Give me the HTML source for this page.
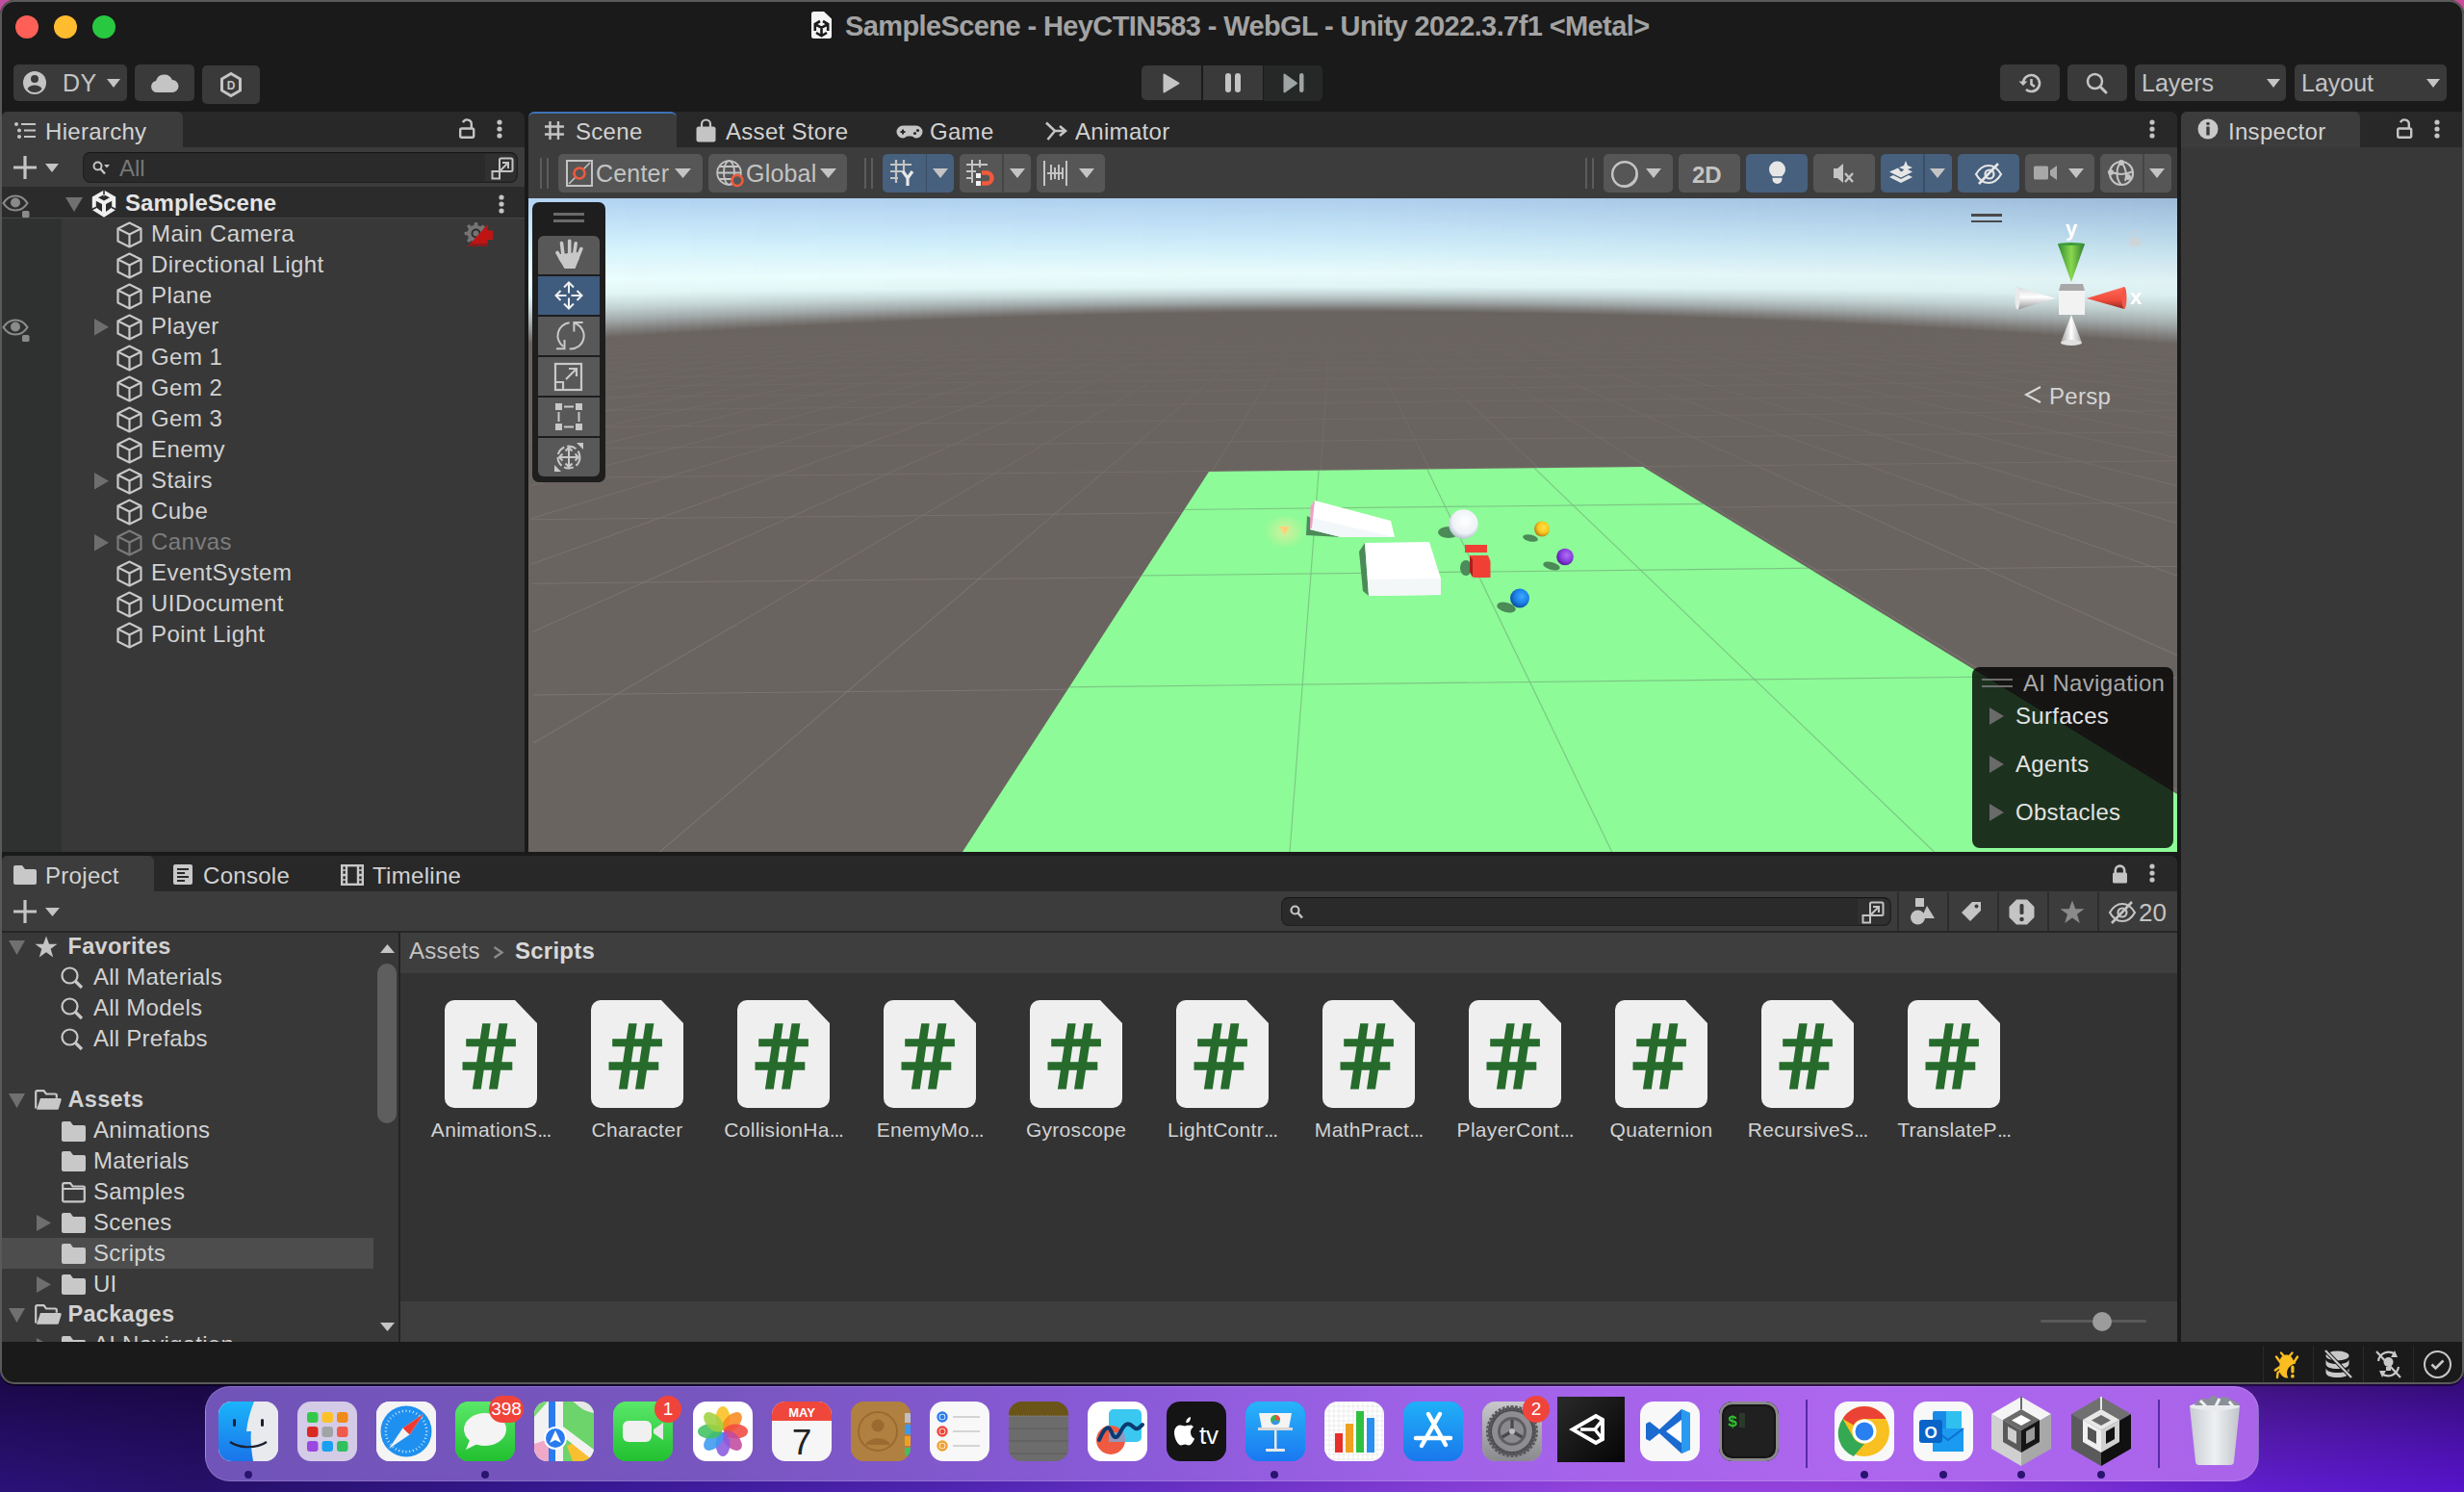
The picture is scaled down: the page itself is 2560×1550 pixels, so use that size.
<!DOCTYPE html><html><head><meta charset="utf-8"><style>
*{box-sizing:border-box;margin:0;padding:0}
html,body{width:2560px;height:1550px;overflow:hidden}
body{position:relative;font-family:"Liberation Sans",sans-serif;color:#d2d2d2;background:#2a1070}
.a{position:absolute}
.t{position:absolute;white-space:nowrap}
svg.a{overflow:visible}
</style></head><body><div class="a" style="left:0;top:0;width:2560px;height:1550px;background:linear-gradient(90deg,#2a1278 0%,#26106a 8%,#3a1a98 25%,#5a2ac0 45%,#7a38d8 65%,#6a2ad0 80%,#4a10c8 92%,#4a0cc8 100%)"></div>
<div class="a" style="left:2400px;top:0;width:160px;height:60px;background:#c84c98"></div>
<div class="a" style="left:0;top:0;width:60px;height:60px;background:#c24e9e"></div>
<div class="a" style="left:0;top:1430px;width:2560px;height:120px;background:linear-gradient(180deg,rgba(12,0,30,0.55) 0%,rgba(12,0,30,0.25) 50%,rgba(12,0,30,0) 100%)"></div>
<div class="a" style="left:0;top:0;width:2560px;height:1550px;background:radial-gradient(ellipse 900px 300px at 1900px 1550px,rgba(255,120,255,0.25),rgba(0,0,0,0))"></div>
<div class="a" style="left:0;top:0;width:2560px;height:1438px;background:#1a1a1a;border-radius:15px;overflow:hidden">
<div class="a" style="left:16px;top:16px;width:24px;height:24px;background:#fe5f57;border-radius:12px;"></div>
<div class="a" style="left:56px;top:16px;width:24px;height:24px;background:#febc2e;border-radius:12px;"></div>
<div class="a" style="left:96px;top:16px;width:24px;height:24px;background:#28c840;border-radius:12px;"></div>
<svg class="a" style="left:843px;top:12px;" width="22" height="28" viewBox="0 0 22 28"><path d="M0 2.5A2.5 2.5 0 0 1 2.5 0H13L21 7.5V25.5A2.5 2.5 0 0 1 18.5 28H2.5A2.5 2.5 0 0 1 0 25.5Z" fill="#f4f4f4"/><path d="M3.8 20V13L9 10M17.2 20V13L12 10M3.8 13L10.5 16.8L17.2 13M10.5 16.8V25M5 22L10.5 25.3L16 22" fill="none" stroke="#1a1a1a" stroke-width="2.6"/></svg>
<div class="t" style="left:878px;top:12.95px;font-size:29px;line-height:29px;color:#a3a3a3;font-weight:bold;letter-spacing:-0.6px;">SampleScene - HeyCTIN583 - WebGL - Unity 2022.3.7f1 &lt;Metal&gt;</div>
<div class="a" style="left:14px;top:67px;width:118px;height:38px;background:#3a3a3a;border-radius:5px;"></div>
<svg class="a" style="left:24px;top:74px;" width="24" height="24" viewBox="0 0 24 24"><circle cx="12" cy="12" r="12" fill="#c4c4c4"/><circle cx="12" cy="8" r="4" fill="#3a3a3a"/><path d="M4.5 18.5c1.5-3 4-4 7.5-4s6 1 7.5 4c-2 2.5-4.5 3.5-7.5 3.5s-5.5-1-7.5-3.5Z" fill="#3a3a3a"/></svg>
<div class="t" style="left:65px;top:73.84px;font-size:25px;line-height:25px;color:#c4c4c4;font-weight:normal;letter-spacing:0.5px;">DY</div>
<svg class="a" style="left:111.0px;top:82.0px;" width="14" height="9" viewBox="0 0 14 9"><path d="M0 0H14L7.0 9Z" fill="#c4c4c4"/></svg>
<div class="a" style="left:140px;top:67px;width:62px;height:38px;background:#3a3a3a;border-radius:5px;"></div>
<svg class="a" style="left:157px;top:75px;" width="28" height="21" viewBox="0 0 28 21"><path d="M6 21a6 6 0 0 1-1-11.9A9 9 0 0 1 22 8a6.5 6.5 0 0 1 0 13Z" fill="#c4c4c4"/></svg>
<div class="a" style="left:210px;top:68px;width:60px;height:40px;background:#3a3a3a;border-radius:5px;"></div>
<svg class="a" style="left:229px;top:75px;" width="22" height="26" viewBox="0 0 22 26"><path d="M11 1.5L20.5 7v12L11 24.5 1.5 19V7Z" fill="none" stroke="#c4c4c4" stroke-width="3"/><text x="11" y="17.5" font-family="Liberation Sans" font-weight="bold" font-size="12" fill="#c4c4c4" text-anchor="middle">D</text></svg>
<div class="a" style="left:1186px;top:68px;width:62px;height:36px;background:#3a3a3a;border-radius:5px;border-radius:5px 0 0 5px"></div>
<div class="a" style="left:1250px;top:68px;width:62px;height:36px;background:#3a3a3a;border-radius:0px;"></div>
<div class="a" style="left:1313px;top:67.5px;width:61px;height:37px;background:#262828;border-radius:5px;border-radius:0 5px 5px 0"></div>
<svg class="a" style="left:1208px;top:76px;" width="18" height="21" viewBox="0 0 18 21"><path d="M1.5 1.5L16.5 10.5L1.5 19.5Z" fill="#c4c4c4" stroke="#c4c4c4" stroke-width="2" stroke-linejoin="round"/></svg>
<div class="a" style="left:1273px;top:76px;width:6px;height:20px;background:#c4c4c4;border-radius:3px;"></div>
<div class="a" style="left:1283px;top:76px;width:6px;height:20px;background:#c4c4c4;border-radius:3px;"></div>
<svg class="a" style="left:1333px;top:76px;" width="22" height="21" viewBox="0 0 22 21"><path d="M1.5 1.5L14 10.5L1.5 19.5Z" fill="#9ea3a3" stroke="#9ea3a3" stroke-width="2" stroke-linejoin="round"/><rect x="17" y="0" width="4.5" height="20" rx="2.2" fill="#9ea3a3"/></svg>
<div class="a" style="left:2078px;top:67px;width:62px;height:38px;background:#3a3a3a;border-radius:5px;"></div>
<svg class="a" style="left:2096px;top:76px;" width="26" height="21" viewBox="0 0 26 21"><path d="M6 10.5A8.5 8.5 0 1 1 9 17" fill="none" stroke="#c4c4c4" stroke-width="2.6"/><path d="M1.5 8.5L6 13l4.5-4.5" fill="#c4c4c4"/><path d="M14.5 6v5.5l3.5 2.5" fill="none" stroke="#c4c4c4" stroke-width="2.6"/></svg>
<div class="a" style="left:2148px;top:67px;width:62px;height:38px;background:#3a3a3a;border-radius:5px;"></div>
<svg class="a" style="left:2167px;top:75px;" width="24" height="24" viewBox="0 0 24 24"><circle cx="9.5" cy="9.5" r="7.5" fill="none" stroke="#c4c4c4" stroke-width="2.5"/><path d="M15 15l6 6" stroke="#c4c4c4" stroke-width="3" stroke-linecap="round"/></svg>
<div class="a" style="left:2218px;top:67px;width:157px;height:38px;background:#3a3a3a;border-radius:5px;"></div>
<div class="t" style="left:2225px;top:73.84px;font-size:25px;line-height:25px;color:#c4c4c4;font-weight:normal;letter-spacing:0px;">Layers</div>
<svg class="a" style="left:2354.5px;top:81.5px;" width="14" height="9" viewBox="0 0 14 9"><path d="M0 0H14L7.0 9Z" fill="#c4c4c4"/></svg>
<div class="a" style="left:2384px;top:67px;width:158px;height:38px;background:#3a3a3a;border-radius:5px;"></div>
<div class="t" style="left:2391px;top:73.84px;font-size:25px;line-height:25px;color:#c4c4c4;font-weight:normal;letter-spacing:0px;">Layout</div>
<svg class="a" style="left:2521.0px;top:81.5px;" width="14" height="9" viewBox="0 0 14 9"><path d="M0 0H14L7.0 9Z" fill="#c4c4c4"/></svg>
<div class="a" style="left:0px;top:116px;width:545px;height:769px;background:#383838;border-radius:0px;border-radius:8px 8px 0 0"></div>
<div class="a" style="left:0px;top:116px;width:545px;height:37px;background:#282828;border-radius:0px;border-radius:8px 8px 0 0"></div>
<div class="a" style="left:2px;top:116px;width:188px;height:37px;background:#3c3c3c;border-radius:0px;border-radius:6px 6px 0 0"></div>
<svg class="a" style="left:15px;top:127px;" width="22" height="17" viewBox="0 0 22 17"><circle cx="2" cy="2" r="2" fill="#c4c4c4"/><circle cx="5" cy="8.5" r="2" fill="#c4c4c4"/><circle cx="5" cy="15" r="2" fill="#c4c4c4"/><path d="M7 2h15M10 8.5h12M10 15h12" stroke="#c4c4c4" stroke-width="2.2"/></svg>
<div class="t" style="left:47px;top:124.68px;font-size:24px;line-height:24px;color:#d2d2d2;font-weight:normal;letter-spacing:0.3px;">Hierarchy</div>
<svg class="a" style="left:477px;top:124px;" width="17" height="20" viewBox="0 0 17 20"><path d="M4 3.2A4.6 4.6 0 0 1 12.8 5.5V9.5" fill="none" stroke="#c4c4c4" stroke-width="2.4"/><rect x="1.2" y="9.5" width="14" height="9.3" rx="1.5" fill="none" stroke="#c4c4c4" stroke-width="2.4"/></svg>
<svg class="a" style="left:516px;top:124px;" width="6" height="20" viewBox="0 0 6 20"><circle cx="3" cy="3" r="2.6" fill="#c4c4c4"/><circle cx="3" cy="10" r="2.6" fill="#c4c4c4"/><circle cx="3" cy="17" r="2.6" fill="#c4c4c4"/></svg>
<div class="a" style="left:0px;top:153px;width:545px;height:41px;background:#3c3c3c;border-radius:0px;"></div>
<svg class="a" style="left:14px;top:162px;" width="24" height="24" viewBox="0 0 24 24"><path d="M12 0v24M0 12h24" stroke="#c4c4c4" stroke-width="3.2"/></svg>
<svg class="a" style="left:47.0px;top:169.5px;" width="14" height="9" viewBox="0 0 14 9"><path d="M0 0H14L7.0 9Z" fill="#c4c4c4"/></svg>
<div class="a" style="left:86px;top:158px;width:452px;height:32px;background:#2a2a2a;border-radius:8px;border:1.5px solid #1f1f1f;border-top-color:#151515"></div>
<div class="a" style="left:504px;top:160px;width:32px;height:28px;background:#303030;border-radius:0px;border-radius:0 6px 6px 0"></div>
<svg class="a" style="left:96px;top:167px;" width="19" height="15" viewBox="0 0 19 15"><circle cx="5.5" cy="5.5" r="4" fill="none" stroke="#c4c4c4" stroke-width="2"/><path d="M8.5 8.5l4.5 5" stroke="#c4c4c4" stroke-width="2.4"/><path d="M12 4h6l-3 3.5Z" fill="#c4c4c4"/></svg>
<div class="t" style="left:124px;top:163.18px;font-size:24px;line-height:24px;color:#777777;font-weight:normal;letter-spacing:0px;">All</div>
<svg class="a" style="left:510px;top:163px;" width="24" height="24" viewBox="0 0 24 24"><rect x="9" y="1.5" width="13.5" height="13.5" rx="1.5" fill="none" stroke="#c4c4c4" stroke-width="2"/><rect x="1.5" y="15" width="7.5" height="7.5" fill="none" stroke="#c4c4c4" stroke-width="2"/><path d="M9 15l9-9M12 6h6v6" fill="none" stroke="#c4c4c4" stroke-width="2"/></svg>
<div class="a" style="left:0px;top:194px;width:545px;height:691px;background:#383838;border-radius:0px;"></div>
<div class="a" style="left:2px;top:194px;width:62px;height:691px;background:#2f3130;border-radius:0px;"></div>
<div class="a" style="left:0px;top:194px;width:545px;height:33px;background:#2b2b2b;border-radius:0px;border-bottom:1.5px solid #454545"></div>
<svg class="a" style="left:2px;top:202px;" width="30" height="24" viewBox="0 0 30 24"><path d="M1.5 9C5 3.5 9.5 1.5 14 1.5S23 3.5 26.5 9C23 14.5 18.5 16.5 14 16.5S5 14.5 1.5 9Z" fill="none" stroke="#8a8a8a" stroke-width="2.2"/><circle cx="14" cy="8.5" r="5" fill="#8a8a8a"/><rect x="21" y="17" width="7.5" height="7" rx="1.5" fill="#8a8a8a"/></svg>
<svg class="a" style="left:68.0px;top:205.0px;" width="18" height="15" viewBox="0 0 18 15"><path d="M0 0H18L9.0 15Z" fill="#707070"/></svg>
<svg class="a" style="left:95px;top:197px;" width="26" height="30" viewBox="0 0 26 30"><path d="M13 0.5L25.2 7.5V21L13 28.8L0.8 21V7.5Z" fill="#f0f0f0"/><path d="M12.2 0V6.5H13.8V0Z M7 8.3L13 5.3L19 8.3L13 11.6Z M4.8 11.8L11 15V23L4.8 18.4Z M21.2 11.8L15 15V23L21.2 18.4Z M0 20L4.8 17.6V19.4L0 21.8Z M26 20L21.2 17.6V19.4L26 21.8Z" fill="#2b2b2b"/></svg>
<div class="t" style="left:130px;top:199.18px;font-size:24px;line-height:24px;color:#e4e4e4;font-weight:bold;letter-spacing:0.1px;">SampleScene</div>
<svg class="a" style="left:518px;top:202px;" width="6" height="20" viewBox="0 0 6 20"><circle cx="3" cy="3" r="2.6" fill="#c4c4c4"/><circle cx="3" cy="10" r="2.6" fill="#c4c4c4"/><circle cx="3" cy="17" r="2.6" fill="#c4c4c4"/></svg>
<svg class="a" style="left:121px;top:229.5px;" width="27" height="28" viewBox="0 0 27 28"><path d="M13.5 1.5L25.5 7.5V20.5L13.5 26.5L1.5 20.5V7.5Z" fill="none" stroke="#c8c8c8" stroke-width="2.2" stroke-linejoin="round"/><path d="M1.5 7.5L13.5 13.5L25.5 7.5M13.5 13.5V26.5" fill="none" stroke="#c8c8c8" stroke-width="2.2" stroke-linejoin="round"/></svg>
<div class="t" style="left:157px;top:230.68px;font-size:24px;line-height:24px;color:#d2d2d2;font-weight:normal;letter-spacing:0.45px;">Main Camera</div>
<svg class="a" style="left:121px;top:261.5px;" width="27" height="28" viewBox="0 0 27 28"><path d="M13.5 1.5L25.5 7.5V20.5L13.5 26.5L1.5 20.5V7.5Z" fill="none" stroke="#c8c8c8" stroke-width="2.2" stroke-linejoin="round"/><path d="M1.5 7.5L13.5 13.5L25.5 7.5M13.5 13.5V26.5" fill="none" stroke="#c8c8c8" stroke-width="2.2" stroke-linejoin="round"/></svg>
<div class="t" style="left:157px;top:262.68px;font-size:24px;line-height:24px;color:#d2d2d2;font-weight:normal;letter-spacing:0.45px;">Directional Light</div>
<svg class="a" style="left:121px;top:293.5px;" width="27" height="28" viewBox="0 0 27 28"><path d="M13.5 1.5L25.5 7.5V20.5L13.5 26.5L1.5 20.5V7.5Z" fill="none" stroke="#c8c8c8" stroke-width="2.2" stroke-linejoin="round"/><path d="M1.5 7.5L13.5 13.5L25.5 7.5M13.5 13.5V26.5" fill="none" stroke="#c8c8c8" stroke-width="2.2" stroke-linejoin="round"/></svg>
<div class="t" style="left:157px;top:294.68px;font-size:24px;line-height:24px;color:#d2d2d2;font-weight:normal;letter-spacing:0.45px;">Plane</div>
<svg class="a" style="left:121px;top:325.5px;" width="27" height="28" viewBox="0 0 27 28"><path d="M13.5 1.5L25.5 7.5V20.5L13.5 26.5L1.5 20.5V7.5Z" fill="none" stroke="#c8c8c8" stroke-width="2.2" stroke-linejoin="round"/><path d="M1.5 7.5L13.5 13.5L25.5 7.5M13.5 13.5V26.5" fill="none" stroke="#c8c8c8" stroke-width="2.2" stroke-linejoin="round"/></svg>
<svg class="a" style="left:98.0px;top:330.75px;" width="15" height="17.5" viewBox="0 0 15 17.5"><path d="M0 0L15 8.75L0 17.5Z" fill="#6e6e6e"/></svg>
<div class="t" style="left:157px;top:326.68px;font-size:24px;line-height:24px;color:#d2d2d2;font-weight:normal;letter-spacing:0.45px;">Player</div>
<svg class="a" style="left:121px;top:357.5px;" width="27" height="28" viewBox="0 0 27 28"><path d="M13.5 1.5L25.5 7.5V20.5L13.5 26.5L1.5 20.5V7.5Z" fill="none" stroke="#c8c8c8" stroke-width="2.2" stroke-linejoin="round"/><path d="M1.5 7.5L13.5 13.5L25.5 7.5M13.5 13.5V26.5" fill="none" stroke="#c8c8c8" stroke-width="2.2" stroke-linejoin="round"/></svg>
<div class="t" style="left:157px;top:358.68px;font-size:24px;line-height:24px;color:#d2d2d2;font-weight:normal;letter-spacing:0.45px;">Gem 1</div>
<svg class="a" style="left:121px;top:389.5px;" width="27" height="28" viewBox="0 0 27 28"><path d="M13.5 1.5L25.5 7.5V20.5L13.5 26.5L1.5 20.5V7.5Z" fill="none" stroke="#c8c8c8" stroke-width="2.2" stroke-linejoin="round"/><path d="M1.5 7.5L13.5 13.5L25.5 7.5M13.5 13.5V26.5" fill="none" stroke="#c8c8c8" stroke-width="2.2" stroke-linejoin="round"/></svg>
<div class="t" style="left:157px;top:390.68px;font-size:24px;line-height:24px;color:#d2d2d2;font-weight:normal;letter-spacing:0.45px;">Gem 2</div>
<svg class="a" style="left:121px;top:421.5px;" width="27" height="28" viewBox="0 0 27 28"><path d="M13.5 1.5L25.5 7.5V20.5L13.5 26.5L1.5 20.5V7.5Z" fill="none" stroke="#c8c8c8" stroke-width="2.2" stroke-linejoin="round"/><path d="M1.5 7.5L13.5 13.5L25.5 7.5M13.5 13.5V26.5" fill="none" stroke="#c8c8c8" stroke-width="2.2" stroke-linejoin="round"/></svg>
<div class="t" style="left:157px;top:422.68px;font-size:24px;line-height:24px;color:#d2d2d2;font-weight:normal;letter-spacing:0.45px;">Gem 3</div>
<svg class="a" style="left:121px;top:453.5px;" width="27" height="28" viewBox="0 0 27 28"><path d="M13.5 1.5L25.5 7.5V20.5L13.5 26.5L1.5 20.5V7.5Z" fill="none" stroke="#c8c8c8" stroke-width="2.2" stroke-linejoin="round"/><path d="M1.5 7.5L13.5 13.5L25.5 7.5M13.5 13.5V26.5" fill="none" stroke="#c8c8c8" stroke-width="2.2" stroke-linejoin="round"/></svg>
<div class="t" style="left:157px;top:454.68px;font-size:24px;line-height:24px;color:#d2d2d2;font-weight:normal;letter-spacing:0.45px;">Enemy</div>
<svg class="a" style="left:121px;top:485.5px;" width="27" height="28" viewBox="0 0 27 28"><path d="M13.5 1.5L25.5 7.5V20.5L13.5 26.5L1.5 20.5V7.5Z" fill="none" stroke="#c8c8c8" stroke-width="2.2" stroke-linejoin="round"/><path d="M1.5 7.5L13.5 13.5L25.5 7.5M13.5 13.5V26.5" fill="none" stroke="#c8c8c8" stroke-width="2.2" stroke-linejoin="round"/></svg>
<svg class="a" style="left:98.0px;top:490.75px;" width="15" height="17.5" viewBox="0 0 15 17.5"><path d="M0 0L15 8.75L0 17.5Z" fill="#6e6e6e"/></svg>
<div class="t" style="left:157px;top:486.68px;font-size:24px;line-height:24px;color:#d2d2d2;font-weight:normal;letter-spacing:0.45px;">Stairs</div>
<svg class="a" style="left:121px;top:517.5px;" width="27" height="28" viewBox="0 0 27 28"><path d="M13.5 1.5L25.5 7.5V20.5L13.5 26.5L1.5 20.5V7.5Z" fill="none" stroke="#c8c8c8" stroke-width="2.2" stroke-linejoin="round"/><path d="M1.5 7.5L13.5 13.5L25.5 7.5M13.5 13.5V26.5" fill="none" stroke="#c8c8c8" stroke-width="2.2" stroke-linejoin="round"/></svg>
<div class="t" style="left:157px;top:518.68px;font-size:24px;line-height:24px;color:#d2d2d2;font-weight:normal;letter-spacing:0.45px;">Cube</div>
<svg class="a" style="left:121px;top:549.5px;" width="27" height="28" viewBox="0 0 27 28"><path d="M13.5 1.5L25.5 7.5V20.5L13.5 26.5L1.5 20.5V7.5Z" fill="none" stroke="#7a7a7a" stroke-width="2.2" stroke-linejoin="round"/><path d="M1.5 7.5L13.5 13.5L25.5 7.5M13.5 13.5V26.5" fill="none" stroke="#7a7a7a" stroke-width="2.2" stroke-linejoin="round"/></svg>
<svg class="a" style="left:98.0px;top:554.75px;" width="15" height="17.5" viewBox="0 0 15 17.5"><path d="M0 0L15 8.75L0 17.5Z" fill="#6e6e6e"/></svg>
<div class="t" style="left:157px;top:550.68px;font-size:24px;line-height:24px;color:#7d7d7d;font-weight:normal;letter-spacing:0.45px;">Canvas</div>
<svg class="a" style="left:121px;top:581.5px;" width="27" height="28" viewBox="0 0 27 28"><path d="M13.5 1.5L25.5 7.5V20.5L13.5 26.5L1.5 20.5V7.5Z" fill="none" stroke="#c8c8c8" stroke-width="2.2" stroke-linejoin="round"/><path d="M1.5 7.5L13.5 13.5L25.5 7.5M13.5 13.5V26.5" fill="none" stroke="#c8c8c8" stroke-width="2.2" stroke-linejoin="round"/></svg>
<div class="t" style="left:157px;top:582.68px;font-size:24px;line-height:24px;color:#d2d2d2;font-weight:normal;letter-spacing:0.45px;">EventSystem</div>
<svg class="a" style="left:121px;top:613.5px;" width="27" height="28" viewBox="0 0 27 28"><path d="M13.5 1.5L25.5 7.5V20.5L13.5 26.5L1.5 20.5V7.5Z" fill="none" stroke="#c8c8c8" stroke-width="2.2" stroke-linejoin="round"/><path d="M1.5 7.5L13.5 13.5L25.5 7.5M13.5 13.5V26.5" fill="none" stroke="#c8c8c8" stroke-width="2.2" stroke-linejoin="round"/></svg>
<div class="t" style="left:157px;top:614.68px;font-size:24px;line-height:24px;color:#d2d2d2;font-weight:normal;letter-spacing:0.45px;">UIDocument</div>
<svg class="a" style="left:121px;top:645.5px;" width="27" height="28" viewBox="0 0 27 28"><path d="M13.5 1.5L25.5 7.5V20.5L13.5 26.5L1.5 20.5V7.5Z" fill="none" stroke="#c8c8c8" stroke-width="2.2" stroke-linejoin="round"/><path d="M1.5 7.5L13.5 13.5L25.5 7.5M13.5 13.5V26.5" fill="none" stroke="#c8c8c8" stroke-width="2.2" stroke-linejoin="round"/></svg>
<div class="t" style="left:157px;top:646.68px;font-size:24px;line-height:24px;color:#d2d2d2;font-weight:normal;letter-spacing:0.45px;">Point Light</div>
<svg class="a" style="left:2px;top:331px;" width="30" height="24" viewBox="0 0 30 24"><path d="M1.5 9C5 3.5 9.5 1.5 14 1.5S23 3.5 26.5 9C23 14.5 18.5 16.5 14 16.5S5 14.5 1.5 9Z" fill="none" stroke="#8a8a8a" stroke-width="2.2"/><circle cx="14" cy="8.5" r="5" fill="#8a8a8a"/><rect x="21" y="17" width="7.5" height="7" rx="1.5" fill="#8a8a8a"/></svg>
<svg class="a" style="left:481px;top:230px;" width="32" height="27" viewBox="0 0 32 27"><path d="M12 1h3l.6 3.2 2.6 1.1 2.7-1.9 2.1 2.1-1.9 2.7 1.1 2.6L25.4 11v3l-3.2.6-1.1 2.6 1.9 2.7-2.1 2.1-2.7-1.9-2.6 1.1L15 24.4h-3l-.6-3.2-2.6-1.1-2.7 1.9L4 19.9l1.9-2.7L4.8 14.6 1.6 14v-3l3.2-.6 1.1-2.6L4 5.1 6.1 3l2.7 1.9 2.6-1.1Z" fill="#747474"/><circle cx="13.5" cy="12.5" r="5" fill="#2e2e2e"/><circle cx="13.5" cy="12.5" r="3" fill="#747474"/><path d="M5 26L25.7 3V9.5H31V19H25.7V26Z" fill="#c01414"/><path d="M8 23H25.7V26H5Z" fill="#8a1c1c"/></svg>
<div class="a" style="left:549px;top:116px;width:1713px;height:769px;background:#383838;border-radius:0px;border-radius:8px 8px 0 0"></div>
<div class="a" style="left:549px;top:116px;width:1713px;height:37px;background:#282828;border-radius:0px;border-radius:8px 8px 0 0"></div>
<div class="a" style="left:549px;top:116px;width:154px;height:37px;background:#3c3c3c;border-radius:0px;border-radius:6px 6px 0 0;border-top:2.5px solid #3d72b8"></div>
<svg class="a" style="left:565px;top:125px;" width="22" height="21" viewBox="0 0 22 21"><path d="M6.5 1v19M15 1v19M1 6.5h20M1 14.5h20" stroke="#c4c4c4" stroke-width="2.4"/></svg>
<div class="t" style="left:598px;top:124.68px;font-size:24px;line-height:24px;color:#d2d2d2;font-weight:normal;letter-spacing:0.3px;">Scene</div>
<svg class="a" style="left:723px;top:124px;" width="21" height="24" viewBox="0 0 21 24"><path d="M6 8V5a4.5 4.5 0 0 1 9 0v3" fill="none" stroke="#c4c4c4" stroke-width="2.2"/><rect x="0.5" y="7.5" width="20" height="16" rx="2.5" fill="#c4c4c4"/></svg>
<div class="t" style="left:754px;top:124.68px;font-size:24px;line-height:24px;color:#d2d2d2;font-weight:normal;letter-spacing:0.3px;">Asset Store</div>
<svg class="a" style="left:931px;top:130px;" width="28" height="15" viewBox="0 0 28 15"><path d="M7 0.5h14a6.5 6.5 0 0 1 0 13c-2.5 0-3.5-2-5-2h-4c-1.5 0-2.5 2-5 2a6.5 6.5 0 0 1 0-13Z" fill="#c4c4c4"/><path d="M4.5 7h5M7 4.5v5" stroke="#282828" stroke-width="2"/><circle cx="19.5" cy="8.5" r="1.6" fill="#282828"/><circle cx="22.5" cy="5.5" r="1.6" fill="#282828"/></svg>
<div class="t" style="left:966px;top:124.68px;font-size:24px;line-height:24px;color:#d2d2d2;font-weight:normal;letter-spacing:0.3px;">Game</div>
<svg class="a" style="left:1086px;top:126px;" width="22" height="20" viewBox="0 0 22 20"><path d="M1 1.5l9 8.5h11M10 10l-7.5 9" fill="none" stroke="#c4c4c4" stroke-width="2.6"/><path d="M15 5l6 5-6 5" fill="none" stroke="#c4c4c4" stroke-width="2.6"/></svg>
<div class="t" style="left:1117px;top:124.68px;font-size:24px;line-height:24px;color:#d2d2d2;font-weight:normal;letter-spacing:0.3px;">Animator</div>
<svg class="a" style="left:2233px;top:124px;" width="6" height="20" viewBox="0 0 6 20"><circle cx="3" cy="3" r="2.6" fill="#c4c4c4"/><circle cx="3" cy="10" r="2.6" fill="#c4c4c4"/><circle cx="3" cy="17" r="2.6" fill="#c4c4c4"/></svg>
<div class="a" style="left:549px;top:153px;width:1713px;height:53px;background:#3c3c3c;border-radius:0px;"></div>
<div class="a" style="left:561px;top:164px;width:2.2px;height:32px;background:#5c5c5c;border-radius:0px;"></div>
<div class="a" style="left:568px;top:164px;width:2.2px;height:32px;background:#5c5c5c;border-radius:0px;"></div>
<div class="a" style="left:580px;top:160px;width:150px;height:40px;background:#565656;border-radius:5px;"></div>
<svg class="a" style="left:588px;top:166px;" width="28" height="28" viewBox="0 0 28 28"><rect x="1" y="1" width="26" height="26" fill="none" stroke="#c4c4c4" stroke-width="2"/><path d="M3 25L25 3" stroke="#c4c4c4" stroke-width="1.6"/><circle cx="14" cy="14" r="5.5" fill="#565656" stroke="#f05a3c" stroke-width="2.6"/></svg>
<div class="t" style="left:619px;top:167.84px;font-size:25px;line-height:25px;color:#c4c4c4;font-weight:normal;letter-spacing:0.2px;">Center</div>
<svg class="a" style="left:701.0px;top:175.0px;" width="17" height="10" viewBox="0 0 17 10"><path d="M0 0H17L8.5 10Z" fill="#c4c4c4"/></svg>
<div class="a" style="left:736px;top:160px;width:144px;height:40px;background:#565656;border-radius:5px;"></div>
<svg class="a" style="left:744px;top:166px;" width="28" height="28" viewBox="0 0 28 28"><circle cx="13.5" cy="13.5" r="12.3" fill="none" stroke="#c4c4c4" stroke-width="1.8"/><ellipse cx="13.5" cy="13.5" rx="5.5" ry="12.3" fill="none" stroke="#c4c4c4" stroke-width="1.8"/><path d="M1.5 13.5h24M3.5 7h20M3.5 20h20" stroke="#c4c4c4" stroke-width="1.8"/><circle cx="22" cy="21.5" r="5.5" fill="#565656" stroke="#f05a3c" stroke-width="2.6"/></svg>
<div class="t" style="left:775px;top:167.84px;font-size:25px;line-height:25px;color:#c4c4c4;font-weight:normal;letter-spacing:0.2px;">Global</div>
<svg class="a" style="left:851.5px;top:175.0px;" width="17" height="10" viewBox="0 0 17 10"><path d="M0 0H17L8.5 10Z" fill="#c4c4c4"/></svg>
<div class="a" style="left:898px;top:164px;width:2.2px;height:32px;background:#5c5c5c;border-radius:0px;"></div>
<div class="a" style="left:905px;top:164px;width:2.2px;height:32px;background:#5c5c5c;border-radius:0px;"></div>
<div class="a" style="left:917px;top:160px;width:74px;height:40px;background:#46607e;border-radius:5px;"></div>
<div class="a" style="left:961.5px;top:160px;width:1.5px;height:40px;background:#3a4f66;border-radius:0px;"></div>
<svg class="a" style="left:925px;top:166px;" width="28" height="28" viewBox="0 0 28 28"><path d="M6 0v24M14 0v14M0 5h22M0 12h14M0 19h8" stroke="#c4c4c4" stroke-width="2.2"/><path d="M13 12l5 7 5-7M18 19v8" fill="none" stroke="#e8e8e8" stroke-width="3.2"/></svg>
<svg class="a" style="left:969.0px;top:175.0px;" width="16" height="10" viewBox="0 0 16 10"><path d="M0 0H16L8.0 10Z" fill="#c4c4c4"/></svg>
<div class="a" style="left:997px;top:160px;width:74px;height:40px;background:#565656;border-radius:5px;"></div>
<div class="a" style="left:1041px;top:160px;width:1.5px;height:40px;background:#454545;border-radius:0px;"></div>
<svg class="a" style="left:1004px;top:166px;" width="28" height="28" viewBox="0 0 28 28"><path d="M6 0v24M14 0v8M0 5h22M0 12h10M0 19h6" stroke="#c4c4c4" stroke-width="2"/><rect x="10" y="14" width="5" height="5" fill="#f2f2f2"/><rect x="10" y="22" width="5" height="5" fill="#f2f2f2"/><path d="M16 13.5h5a5.5 5.5 0 0 1 0 11h-5" fill="none" stroke="#f05a3c" stroke-width="4.5"/></svg>
<svg class="a" style="left:1049.0px;top:175.0px;" width="16" height="10" viewBox="0 0 16 10"><path d="M0 0H16L8.0 10Z" fill="#c4c4c4"/></svg>
<div class="a" style="left:1077px;top:160px;width:71px;height:40px;background:#565656;border-radius:5px;"></div>
<svg class="a" style="left:1084px;top:166px;" width="28" height="28" viewBox="0 0 28 28"><path d="M1 1v26M8 5v16M12 8v12M16 5v16M20 8v12M24 1v26M4 14h16" stroke="#c4c4c4" stroke-width="2"/></svg>
<svg class="a" style="left:1121.0px;top:175.0px;" width="16" height="10" viewBox="0 0 16 10"><path d="M0 0H16L8.0 10Z" fill="#c4c4c4"/></svg>
<div class="a" style="left:1647px;top:164px;width:2.2px;height:32px;background:#5c5c5c;border-radius:0px;"></div>
<div class="a" style="left:1654px;top:164px;width:2.2px;height:32px;background:#5c5c5c;border-radius:0px;"></div>
<div class="a" style="left:1666px;top:160px;width:72px;height:40px;background:#565656;border-radius:5px;"></div>
<svg class="a" style="left:1674px;top:167px;" width="28" height="28" viewBox="0 0 28 28"><circle cx="14" cy="14" r="12.8" fill="none" stroke="#c4c4c4" stroke-width="2.4"/><path d="M22.5 4.5A12.8 12.8 0 0 1 4.5 22.5A11 11 0 0 0 22.5 4.5Z" fill="#c4c4c4"/></svg>
<svg class="a" style="left:1710.0px;top:175.0px;" width="16" height="10" viewBox="0 0 16 10"><path d="M0 0H16L8.0 10Z" fill="#c4c4c4"/></svg>
<div class="a" style="left:1744px;top:160px;width:64px;height:40px;background:#565656;border-radius:5px;"></div>
<div class="t" style="left:1758px;top:169.68px;font-size:24px;line-height:24px;color:#c4c4c4;font-weight:bold;letter-spacing:0px;">2D</div>
<div class="a" style="left:1814px;top:160px;width:64px;height:40px;background:#46607e;border-radius:5px;"></div>
<svg class="a" style="left:1836px;top:167px;" width="21" height="26" viewBox="0 0 21 26"><circle cx="10.5" cy="9" r="8.5" fill="#e6e6e6"/><path d="M5.5 15h10v4a5 5 0 0 1-10 0Z" fill="#e6e6e6"/><path d="M5 17h11" stroke="#46607e" stroke-width="1.5"/></svg>
<div class="a" style="left:1884px;top:160px;width:64px;height:40px;background:#565656;border-radius:5px;"></div>
<svg class="a" style="left:1904px;top:169px;" width="24" height="22" viewBox="0 0 24 22"><path d="M1 6h4l6-5v20l-6-5H1Z" fill="#c4c4c4"/><path d="M13 11l8 9M21 11l-8 9" stroke="#c4c4c4" stroke-width="2.4"/></svg>
<div class="a" style="left:1954px;top:160px;width:74px;height:40px;background:#46607e;border-radius:5px;"></div>
<div class="a" style="left:1998px;top:160px;width:1.5px;height:40px;background:#3a4f66;border-radius:0px;"></div>
<svg class="a" style="left:1962px;top:167px;" width="28" height="27" viewBox="0 0 28 27"><path d="M1 17l12 6 12-6-4-2-8 4-8-4Z" fill="#e6e6e6"/><path d="M1 11.5l12 6 12-6-8-4c-1 3-4 4-4 4l-3-4Z" fill="#e6e6e6"/><path d="M18 0l2 5 5 2-5 2-2 5-2-5-5-2 5-2Z" fill="#e6e6e6"/></svg>
<svg class="a" style="left:2005.0px;top:175.0px;" width="16" height="10" viewBox="0 0 16 10"><path d="M0 0H16L8.0 10Z" fill="#c4c4c4"/></svg>
<div class="a" style="left:2034px;top:160px;width:64px;height:40px;background:#46607e;border-radius:5px;"></div>
<svg class="a" style="left:2051px;top:169px;" width="30" height="22" viewBox="0 0 30 22"><path d="M2 12C6 5 10 3 15 3s9 2 13 9c-4 7-8 9-13 9S6 19 2 12Z" fill="none" stroke="#e6e6e6" stroke-width="2.2"/><circle cx="16" cy="12" r="4.5" fill="none" stroke="#e6e6e6" stroke-width="2.2"/><path d="M25 1L5 22" stroke="#e6e6e6" stroke-width="2.6"/></svg>
<div class="a" style="left:2104px;top:160px;width:72px;height:40px;background:#565656;border-radius:5px;"></div>
<svg class="a" style="left:2113px;top:171px;" width="25" height="17" viewBox="0 0 25 17"><rect x="0" y="1.5" width="15" height="14" rx="1.5" fill="#a8a8a8"/><path d="M17 6l7-5v15l-7-5Z" fill="#a8a8a8"/></svg>
<svg class="a" style="left:2149.0px;top:175.0px;" width="16" height="10" viewBox="0 0 16 10"><path d="M0 0H16L8.0 10Z" fill="#c4c4c4"/></svg>
<div class="a" style="left:2182px;top:160px;width:74px;height:40px;background:#565656;border-radius:5px;"></div>
<div class="a" style="left:2226px;top:160px;width:1.5px;height:40px;background:#454545;border-radius:0px;"></div>
<svg class="a" style="left:2190px;top:166px;" width="28" height="28" viewBox="0 0 28 28"><circle cx="14" cy="14" r="12" fill="none" stroke="#c4c4c4" stroke-width="2.2"/><path d="M14 2C8 8 8 20 14 26M2 12c8 4 16 4 24 0M14 2c5 7 6 14 4 20" fill="none" stroke="#c4c4c4" stroke-width="2"/><circle cx="14" cy="3" r="3" fill="#c4c4c4"/><circle cx="3" cy="13" r="3" fill="#c4c4c4"/><circle cx="21" cy="18" r="3" fill="#c4c4c4"/></svg>
<svg class="a" style="left:2233.0px;top:175.0px;" width="16" height="10" viewBox="0 0 16 10"><path d="M0 0H16L8.0 10Z" fill="#c4c4c4"/></svg>
<svg class="a" style="left:549px;top:206px;overflow:hidden" width="1713" height="679" viewBox="549 206 1713 679"><defs><linearGradient id="sky" x1="0" y1="206" x2="0" y2="360" gradientUnits="userSpaceOnUse"><stop offset="0" stop-color="#b2d3f2"/><stop offset="0.22" stop-color="#c8e8fa"/><stop offset="0.364" stop-color="#d8f4fc"/><stop offset="0.513" stop-color="#ecfdfd"/><stop offset="0.59" stop-color="#e6f9f9"/><stop offset="0.636" stop-color="#d2e4e4"/><stop offset="0.688" stop-color="#b2bebe"/><stop offset="0.74" stop-color="#8c8c8a"/><stop offset="0.79" stop-color="#6e6866"/><stop offset="1" stop-color="#6a6460"/></linearGradient><linearGradient id="skyr" x1="549" y1="0" x2="2262" y2="0" gradientUnits="userSpaceOnUse"><stop offset="0" stop-color="#6080a0" stop-opacity="0"/><stop offset="0.5" stop-color="#6080a0" stop-opacity="0.05"/><stop offset="1" stop-color="#5a7090" stop-opacity="0.24"/></linearGradient><linearGradient id="skyfade" x1="0" y1="206" x2="0" y2="330" gradientUnits="userSpaceOnUse"><stop offset="0" stop-color="#fff" stop-opacity="1"/><stop offset="1" stop-color="#fff" stop-opacity="0"/></linearGradient><mask id="skym"><rect x="549" y="206" width="1713" height="679" fill="url(#skyfade)"/></mask><clipPath id="gclip"><rect x="549" y="338" width="1713" height="547"/></clipPath><radialGradient id="glow"><stop offset="0" stop-color="#ffe9a0" stop-opacity="0.9"/><stop offset="1" stop-color="#ffe9a0" stop-opacity="0"/></radialGradient><radialGradient id="wsph" cx="0.55" cy="0.4" r="0.6"><stop offset="0" stop-color="#ffffff"/><stop offset="0.7" stop-color="#eef2f6"/><stop offset="1" stop-color="#b8c4d0"/></radialGradient><radialGradient id="ysph" cx="0.6" cy="0.4" r="0.6"><stop offset="0" stop-color="#ffe14a"/><stop offset="0.6" stop-color="#f7c81c"/><stop offset="1" stop-color="#c0801a"/></radialGradient><radialGradient id="psph" cx="0.6" cy="0.4" r="0.6"><stop offset="0" stop-color="#b070f0"/><stop offset="0.6" stop-color="#8a3ee0"/><stop offset="1" stop-color="#5a20a0"/></radialGradient><radialGradient id="bsph" cx="0.6" cy="0.4" r="0.6"><stop offset="0" stop-color="#40a8ff"/><stop offset="0.6" stop-color="#1a80e8"/><stop offset="1" stop-color="#1050a0"/></radialGradient></defs><rect x="549" y="206" width="1713" height="679" fill="#6a6460"/><linearGradient id="gfade" x1="0" y1="330" x2="0" y2="885" gradientUnits="userSpaceOnUse"><stop offset="0" stop-color="#fff" stop-opacity="0"/><stop offset="0.12" stop-color="#fff" stop-opacity="0.25"/><stop offset="0.45" stop-color="#fff" stop-opacity="0.8"/><stop offset="1" stop-color="#fff" stop-opacity="1"/></linearGradient><mask id="gmask"><rect x="549" y="206" width="1713" height="679" fill="url(#gfade)"/></mask><g mask="url(#gmask)"><g clip-path="url(#gclip)" transform="rotate(-0.6 1385.5 286)" stroke="#85807e" stroke-width="1" stroke-opacity="0.7" fill="none"><path d="M549 344.4H2262"/><path d="M549 347.5H2262"/><path d="M549 351.0H2262"/><path d="M549 354.9H2262"/><path d="M549 359.3H2262"/><path d="M549 364.2H2262"/><path d="M549 370.0H2262"/><path d="M549 376.6H2262"/><path d="M549 384.3H2262"/><path d="M549 393.5H2262"/><path d="M549 404.6H2262"/><path d="M549 418.3H2262"/><path d="M549 435.5H2262"/><path d="M549 457.8H2262"/><path d="M549 488.0H2262"/><path d="M549 531.1H2262"/><path d="M549 597.5H2262"/><path d="M549 713.3H2262"/><path d="M1385.5 286.0L-12384.2 885"/><path d="M1385.5 286.0L-12049.4 885"/><path d="M1385.5 286.0L-11714.7 885"/><path d="M1385.5 286.0L-11380.0 885"/><path d="M1385.5 286.0L-11045.2 885"/><path d="M1385.5 286.0L-10710.5 885"/><path d="M1385.5 286.0L-10375.7 885"/><path d="M1385.5 286.0L-10041.0 885"/><path d="M1385.5 286.0L-9706.3 885"/><path d="M1385.5 286.0L-9371.5 885"/><path d="M1385.5 286.0L-9036.8 885"/><path d="M1385.5 286.0L-8702.1 885"/><path d="M1385.5 286.0L-8367.3 885"/><path d="M1385.5 286.0L-8032.6 885"/><path d="M1385.5 286.0L-7697.9 885"/><path d="M1385.5 286.0L-7363.1 885"/><path d="M1385.5 286.0L-7028.4 885"/><path d="M1385.5 286.0L-6693.7 885"/><path d="M1385.5 286.0L-6358.9 885"/><path d="M1385.5 286.0L-6024.2 885"/><path d="M1385.5 286.0L-5689.5 885"/><path d="M1385.5 286.0L-5354.7 885"/><path d="M1385.5 286.0L-5020.0 885"/><path d="M1385.5 286.0L-4685.2 885"/><path d="M1385.5 286.0L-4350.5 885"/><path d="M1385.5 286.0L-4015.8 885"/><path d="M1385.5 286.0L-3681.0 885"/><path d="M1385.5 286.0L-3346.3 885"/><path d="M1385.5 286.0L-3011.6 885"/><path d="M1385.5 286.0L-2676.8 885"/><path d="M1385.5 286.0L-2342.1 885"/><path d="M1385.5 286.0L-2007.4 885"/><path d="M1385.5 286.0L-1672.6 885"/><path d="M1385.5 286.0L-1337.9 885"/><path d="M1385.5 286.0L-1003.2 885"/><path d="M1385.5 286.0L-668.4 885"/><path d="M1385.5 286.0L-333.7 885"/><path d="M1385.5 286.0L1.0 885"/><path d="M1385.5 286.0L335.8 885"/><path d="M1385.5 286.0L670.5 885"/><path d="M1385.5 286.0L1005.3 885"/><path d="M1385.5 286.0L1340.0 885"/><path d="M1385.5 286.0L1674.7 885"/><path d="M1385.5 286.0L2009.5 885"/><path d="M1385.5 286.0L2344.2 885"/><path d="M1385.5 286.0L2678.9 885"/><path d="M1385.5 286.0L3013.7 885"/><path d="M1385.5 286.0L3348.4 885"/><path d="M1385.5 286.0L3683.1 885"/><path d="M1385.5 286.0L4017.9 885"/><path d="M1385.5 286.0L4352.6 885"/><path d="M1385.5 286.0L4687.3 885"/><path d="M1385.5 286.0L5022.1 885"/><path d="M1385.5 286.0L5356.8 885"/><path d="M1385.5 286.0L5691.5 885"/><path d="M1385.5 286.0L6026.3 885"/><path d="M1385.5 286.0L6361.0 885"/><path d="M1385.5 286.0L6695.8 885"/><path d="M1385.5 286.0L7030.5 885"/><path d="M1385.5 286.0L7365.2 885"/><path d="M1385.5 286.0L7700.0 885"/><path d="M1385.5 286.0L8034.7 885"/><path d="M1385.5 286.0L8369.4 885"/><path d="M1385.5 286.0L8704.2 885"/><path d="M1385.5 286.0L9038.9 885"/><path d="M1385.5 286.0L9373.6 885"/><path d="M1385.5 286.0L9708.4 885"/><path d="M1385.5 286.0L10043.1 885"/><path d="M1385.5 286.0L10377.8 885"/><path d="M1385.5 286.0L10712.6 885"/><path d="M1385.5 286.0L11047.3 885"/><path d="M1385.5 286.0L11382.0 885"/><path d="M1385.5 286.0L11716.8 885"/><path d="M1385.5 286.0L12051.5 885"/><path d="M1385.5 286.0L12386.3 885"/><path d="M1385.5 286.0L12721.0 885"/><path d="M1385.5 286.0L13055.7 885"/><path d="M1385.5 286.0L13390.5 885"/><path d="M1385.5 286.0L13725.2 885"/><path d="M1385.5 286.0L14059.9 885"/><path d="M1385.5 286.0L14394.7 885"/><path d="M1385.5 286.0L14729.4 885"/><path d="M1385.5 286.0L15064.1 885"/><path d="M1385.5 286.0L15398.9 885"/><path d="M1385.5 286.0L15733.6 885"/><path d="M1385.5 286.0L16068.3 885"/><path d="M1385.5 286.0L16403.1 885"/><path d="M1385.5 286.0L16737.8 885"/><path d="M1385.5 286.0L17072.5 885"/><path d="M1385.5 286.0L17407.3 885"/></g></g><linearGradient id="sk0" x1="0" y1="206" x2="0" y2="356.8" gradientUnits="userSpaceOnUse"><stop offset="0.0000" stop-color="#b2d3f2"/><stop offset="0.2254" stop-color="#c8e8fa"/><stop offset="0.3712" stop-color="#d8f4fc"/><stop offset="0.5706" stop-color="#ecfdfd"/><stop offset="0.6634" stop-color="#e2f6f6"/><stop offset="0.7644" stop-color="#c6d6d6"/><stop offset="0.8654" stop-color="#a2aaaa"/><stop offset="0.9495" stop-color="#7e7c7a"/><stop offset="1.0000" stop-color="#6a6460"/></linearGradient><rect x="549" y="206" width="12.6" height="151.3" fill="url(#sk0)"/><linearGradient id="sk1" x1="0" y1="206" x2="0" y2="355.9" gradientUnits="userSpaceOnUse"><stop offset="0.0000" stop-color="#b2d3f2"/><stop offset="0.2268" stop-color="#c8e8fa"/><stop offset="0.3735" stop-color="#d8f4fc"/><stop offset="0.5726" stop-color="#ecfdfd"/><stop offset="0.6660" stop-color="#e2f6f6"/><stop offset="0.7662" stop-color="#c6d6d6"/><stop offset="0.8664" stop-color="#a2aaaa"/><stop offset="0.9499" stop-color="#7e7c7a"/><stop offset="1.0000" stop-color="#6a6460"/></linearGradient><rect x="561" y="206" width="12.6" height="150.4" fill="url(#sk1)"/><linearGradient id="sk2" x1="0" y1="206" x2="0" y2="355.0" gradientUnits="userSpaceOnUse"><stop offset="0.0000" stop-color="#b2d3f2"/><stop offset="0.2282" stop-color="#c8e8fa"/><stop offset="0.3758" stop-color="#d8f4fc"/><stop offset="0.5746" stop-color="#ecfdfd"/><stop offset="0.6686" stop-color="#e2f6f6"/><stop offset="0.7680" stop-color="#c6d6d6"/><stop offset="0.8674" stop-color="#a2aaaa"/><stop offset="0.9503" stop-color="#7e7c7a"/><stop offset="1.0000" stop-color="#6a6460"/></linearGradient><rect x="573" y="206" width="12.6" height="149.5" fill="url(#sk2)"/><linearGradient id="sk3" x1="0" y1="206" x2="0" y2="354.1" gradientUnits="userSpaceOnUse"><stop offset="0.0000" stop-color="#b2d3f2"/><stop offset="0.2296" stop-color="#c8e8fa"/><stop offset="0.3781" stop-color="#d8f4fc"/><stop offset="0.5766" stop-color="#ecfdfd"/><stop offset="0.6711" stop-color="#e2f6f6"/><stop offset="0.7698" stop-color="#c6d6d6"/><stop offset="0.8685" stop-color="#a2aaaa"/><stop offset="0.9507" stop-color="#7e7c7a"/><stop offset="1.0000" stop-color="#6a6460"/></linearGradient><rect x="585" y="206" width="12.6" height="148.6" fill="url(#sk3)"/><linearGradient id="sk4" x1="0" y1="206" x2="0" y2="353.2" gradientUnits="userSpaceOnUse"><stop offset="0.0000" stop-color="#b2d3f2"/><stop offset="0.2309" stop-color="#c8e8fa"/><stop offset="0.3804" stop-color="#d8f4fc"/><stop offset="0.5786" stop-color="#ecfdfd"/><stop offset="0.6737" stop-color="#e2f6f6"/><stop offset="0.7716" stop-color="#c6d6d6"/><stop offset="0.8695" stop-color="#a2aaaa"/><stop offset="0.9511" stop-color="#7e7c7a"/><stop offset="1.0000" stop-color="#6a6460"/></linearGradient><rect x="597" y="206" width="12.6" height="147.7" fill="url(#sk4)"/><linearGradient id="sk5" x1="0" y1="206" x2="0" y2="352.3" gradientUnits="userSpaceOnUse"><stop offset="0.0000" stop-color="#b2d3f2"/><stop offset="0.2323" stop-color="#c8e8fa"/><stop offset="0.3827" stop-color="#d8f4fc"/><stop offset="0.5806" stop-color="#ecfdfd"/><stop offset="0.6763" stop-color="#e2f6f6"/><stop offset="0.7734" stop-color="#c6d6d6"/><stop offset="0.8705" stop-color="#a2aaaa"/><stop offset="0.9514" stop-color="#7e7c7a"/><stop offset="1.0000" stop-color="#6a6460"/></linearGradient><rect x="609" y="206" width="12.6" height="146.8" fill="url(#sk5)"/><linearGradient id="sk6" x1="0" y1="206" x2="0" y2="351.5" gradientUnits="userSpaceOnUse"><stop offset="0.0000" stop-color="#b2d3f2"/><stop offset="0.2337" stop-color="#c8e8fa"/><stop offset="0.3849" stop-color="#d8f4fc"/><stop offset="0.5826" stop-color="#ecfdfd"/><stop offset="0.6788" stop-color="#e2f6f6"/><stop offset="0.7752" stop-color="#c6d6d6"/><stop offset="0.8715" stop-color="#a2aaaa"/><stop offset="0.9518" stop-color="#7e7c7a"/><stop offset="1.0000" stop-color="#6a6460"/></linearGradient><rect x="621" y="206" width="12.6" height="146.0" fill="url(#sk6)"/><linearGradient id="sk7" x1="0" y1="206" x2="0" y2="350.6" gradientUnits="userSpaceOnUse"><stop offset="0.0000" stop-color="#b2d3f2"/><stop offset="0.2351" stop-color="#c8e8fa"/><stop offset="0.3872" stop-color="#d8f4fc"/><stop offset="0.5845" stop-color="#ecfdfd"/><stop offset="0.6813" stop-color="#e2f6f6"/><stop offset="0.7769" stop-color="#c6d6d6"/><stop offset="0.8725" stop-color="#a2aaaa"/><stop offset="0.9522" stop-color="#7e7c7a"/><stop offset="1.0000" stop-color="#6a6460"/></linearGradient><rect x="633" y="206" width="12.6" height="145.1" fill="url(#sk7)"/><linearGradient id="sk8" x1="0" y1="206" x2="0" y2="349.8" gradientUnits="userSpaceOnUse"><stop offset="0.0000" stop-color="#b2d3f2"/><stop offset="0.2364" stop-color="#c8e8fa"/><stop offset="0.3894" stop-color="#d8f4fc"/><stop offset="0.5865" stop-color="#ecfdfd"/><stop offset="0.6839" stop-color="#e2f6f6"/><stop offset="0.7787" stop-color="#c6d6d6"/><stop offset="0.8735" stop-color="#a2aaaa"/><stop offset="0.9526" stop-color="#7e7c7a"/><stop offset="1.0000" stop-color="#6a6460"/></linearGradient><rect x="645" y="206" width="12.6" height="144.3" fill="url(#sk8)"/><linearGradient id="sk9" x1="0" y1="206" x2="0" y2="349.0" gradientUnits="userSpaceOnUse"><stop offset="0.0000" stop-color="#b2d3f2"/><stop offset="0.2378" stop-color="#c8e8fa"/><stop offset="0.3916" stop-color="#d8f4fc"/><stop offset="0.5885" stop-color="#ecfdfd"/><stop offset="0.6864" stop-color="#e2f6f6"/><stop offset="0.7805" stop-color="#c6d6d6"/><stop offset="0.8745" stop-color="#a2aaaa"/><stop offset="0.9530" stop-color="#7e7c7a"/><stop offset="1.0000" stop-color="#6a6460"/></linearGradient><rect x="657" y="206" width="12.6" height="143.5" fill="url(#sk9)"/><linearGradient id="sk10" x1="0" y1="206" x2="0" y2="348.2" gradientUnits="userSpaceOnUse"><stop offset="0.0000" stop-color="#b2d3f2"/><stop offset="0.2391" stop-color="#c8e8fa"/><stop offset="0.3939" stop-color="#d8f4fc"/><stop offset="0.5904" stop-color="#ecfdfd"/><stop offset="0.6889" stop-color="#e2f6f6"/><stop offset="0.7822" stop-color="#c6d6d6"/><stop offset="0.8755" stop-color="#a2aaaa"/><stop offset="0.9533" stop-color="#7e7c7a"/><stop offset="1.0000" stop-color="#6a6460"/></linearGradient><rect x="669" y="206" width="12.6" height="142.7" fill="url(#sk10)"/><linearGradient id="sk11" x1="0" y1="206" x2="0" y2="347.4" gradientUnits="userSpaceOnUse"><stop offset="0.0000" stop-color="#b2d3f2"/><stop offset="0.2405" stop-color="#c8e8fa"/><stop offset="0.3961" stop-color="#d8f4fc"/><stop offset="0.5923" stop-color="#ecfdfd"/><stop offset="0.6914" stop-color="#e2f6f6"/><stop offset="0.7840" stop-color="#c6d6d6"/><stop offset="0.8765" stop-color="#a2aaaa"/><stop offset="0.9537" stop-color="#7e7c7a"/><stop offset="1.0000" stop-color="#6a6460"/></linearGradient><rect x="681" y="206" width="12.6" height="141.9" fill="url(#sk11)"/><linearGradient id="sk12" x1="0" y1="206" x2="0" y2="346.6" gradientUnits="userSpaceOnUse"><stop offset="0.0000" stop-color="#b2d3f2"/><stop offset="0.2418" stop-color="#c8e8fa"/><stop offset="0.3983" stop-color="#d8f4fc"/><stop offset="0.5943" stop-color="#ecfdfd"/><stop offset="0.6938" stop-color="#e2f6f6"/><stop offset="0.7857" stop-color="#c6d6d6"/><stop offset="0.8775" stop-color="#a2aaaa"/><stop offset="0.9541" stop-color="#7e7c7a"/><stop offset="1.0000" stop-color="#6a6460"/></linearGradient><rect x="693" y="206" width="12.6" height="141.1" fill="url(#sk12)"/><linearGradient id="sk13" x1="0" y1="206" x2="0" y2="345.8" gradientUnits="userSpaceOnUse"><stop offset="0.0000" stop-color="#b2d3f2"/><stop offset="0.2431" stop-color="#c8e8fa"/><stop offset="0.4005" stop-color="#d8f4fc"/><stop offset="0.5962" stop-color="#ecfdfd"/><stop offset="0.6963" stop-color="#e2f6f6"/><stop offset="0.7874" stop-color="#c6d6d6"/><stop offset="0.8785" stop-color="#a2aaaa"/><stop offset="0.9544" stop-color="#7e7c7a"/><stop offset="1.0000" stop-color="#6a6460"/></linearGradient><rect x="705" y="206" width="12.6" height="140.3" fill="url(#sk13)"/><linearGradient id="sk14" x1="0" y1="206" x2="0" y2="345.1" gradientUnits="userSpaceOnUse"><stop offset="0.0000" stop-color="#b2d3f2"/><stop offset="0.2445" stop-color="#c8e8fa"/><stop offset="0.4026" stop-color="#d8f4fc"/><stop offset="0.5981" stop-color="#ecfdfd"/><stop offset="0.6987" stop-color="#e2f6f6"/><stop offset="0.7891" stop-color="#c6d6d6"/><stop offset="0.8795" stop-color="#a2aaaa"/><stop offset="0.9548" stop-color="#7e7c7a"/><stop offset="1.0000" stop-color="#6a6460"/></linearGradient><rect x="717" y="206" width="12.6" height="139.6" fill="url(#sk14)"/><linearGradient id="sk15" x1="0" y1="206" x2="0" y2="344.3" gradientUnits="userSpaceOnUse"><stop offset="0.0000" stop-color="#b2d3f2"/><stop offset="0.2458" stop-color="#c8e8fa"/><stop offset="0.4048" stop-color="#d8f4fc"/><stop offset="0.6000" stop-color="#ecfdfd"/><stop offset="0.7012" stop-color="#e2f6f6"/><stop offset="0.7908" stop-color="#c6d6d6"/><stop offset="0.8805" stop-color="#a2aaaa"/><stop offset="0.9552" stop-color="#7e7c7a"/><stop offset="1.0000" stop-color="#6a6460"/></linearGradient><rect x="729" y="206" width="12.6" height="138.8" fill="url(#sk15)"/><linearGradient id="sk16" x1="0" y1="206" x2="0" y2="343.6" gradientUnits="userSpaceOnUse"><stop offset="0.0000" stop-color="#b2d3f2"/><stop offset="0.2471" stop-color="#c8e8fa"/><stop offset="0.4069" stop-color="#d8f4fc"/><stop offset="0.6018" stop-color="#ecfdfd"/><stop offset="0.7036" stop-color="#e2f6f6"/><stop offset="0.7925" stop-color="#c6d6d6"/><stop offset="0.8814" stop-color="#a2aaaa"/><stop offset="0.9555" stop-color="#7e7c7a"/><stop offset="1.0000" stop-color="#6a6460"/></linearGradient><rect x="741" y="206" width="12.6" height="138.1" fill="url(#sk16)"/><linearGradient id="sk17" x1="0" y1="206" x2="0" y2="342.9" gradientUnits="userSpaceOnUse"><stop offset="0.0000" stop-color="#b2d3f2"/><stop offset="0.2484" stop-color="#c8e8fa"/><stop offset="0.4091" stop-color="#d8f4fc"/><stop offset="0.6037" stop-color="#ecfdfd"/><stop offset="0.7060" stop-color="#e2f6f6"/><stop offset="0.7942" stop-color="#c6d6d6"/><stop offset="0.8824" stop-color="#a2aaaa"/><stop offset="0.9559" stop-color="#7e7c7a"/><stop offset="1.0000" stop-color="#6a6460"/></linearGradient><rect x="753" y="206" width="12.6" height="137.4" fill="url(#sk17)"/><linearGradient id="sk18" x1="0" y1="206" x2="0" y2="342.2" gradientUnits="userSpaceOnUse"><stop offset="0.0000" stop-color="#b2d3f2"/><stop offset="0.2496" stop-color="#c8e8fa"/><stop offset="0.4112" stop-color="#d8f4fc"/><stop offset="0.6055" stop-color="#ecfdfd"/><stop offset="0.7083" stop-color="#e2f6f6"/><stop offset="0.7958" stop-color="#c6d6d6"/><stop offset="0.8833" stop-color="#a2aaaa"/><stop offset="0.9562" stop-color="#7e7c7a"/><stop offset="1.0000" stop-color="#6a6460"/></linearGradient><rect x="765" y="206" width="12.6" height="136.7" fill="url(#sk18)"/><linearGradient id="sk19" x1="0" y1="206" x2="0" y2="341.5" gradientUnits="userSpaceOnUse"><stop offset="0.0000" stop-color="#b2d3f2"/><stop offset="0.2509" stop-color="#c8e8fa"/><stop offset="0.4132" stop-color="#d8f4fc"/><stop offset="0.6074" stop-color="#ecfdfd"/><stop offset="0.7107" stop-color="#e2f6f6"/><stop offset="0.7975" stop-color="#c6d6d6"/><stop offset="0.8843" stop-color="#a2aaaa"/><stop offset="0.9566" stop-color="#7e7c7a"/><stop offset="1.0000" stop-color="#6a6460"/></linearGradient><rect x="777" y="206" width="12.6" height="136.0" fill="url(#sk19)"/><linearGradient id="sk20" x1="0" y1="206" x2="0" y2="340.8" gradientUnits="userSpaceOnUse"><stop offset="0.0000" stop-color="#b2d3f2"/><stop offset="0.2522" stop-color="#c8e8fa"/><stop offset="0.4153" stop-color="#d8f4fc"/><stop offset="0.6092" stop-color="#ecfdfd"/><stop offset="0.7130" stop-color="#e2f6f6"/><stop offset="0.7991" stop-color="#c6d6d6"/><stop offset="0.8852" stop-color="#a2aaaa"/><stop offset="0.9569" stop-color="#7e7c7a"/><stop offset="1.0000" stop-color="#6a6460"/></linearGradient><rect x="789" y="206" width="12.6" height="135.3" fill="url(#sk20)"/><linearGradient id="sk21" x1="0" y1="206" x2="0" y2="340.2" gradientUnits="userSpaceOnUse"><stop offset="0.0000" stop-color="#b2d3f2"/><stop offset="0.2534" stop-color="#c8e8fa"/><stop offset="0.4174" stop-color="#d8f4fc"/><stop offset="0.6110" stop-color="#ecfdfd"/><stop offset="0.7153" stop-color="#e2f6f6"/><stop offset="0.8007" stop-color="#c6d6d6"/><stop offset="0.8861" stop-color="#a2aaaa"/><stop offset="0.9573" stop-color="#7e7c7a"/><stop offset="1.0000" stop-color="#6a6460"/></linearGradient><rect x="801" y="206" width="12.6" height="134.7" fill="url(#sk21)"/><linearGradient id="sk22" x1="0" y1="206" x2="0" y2="339.5" gradientUnits="userSpaceOnUse"><stop offset="0.0000" stop-color="#b2d3f2"/><stop offset="0.2546" stop-color="#c8e8fa"/><stop offset="0.4194" stop-color="#d8f4fc"/><stop offset="0.6127" stop-color="#ecfdfd"/><stop offset="0.7176" stop-color="#e2f6f6"/><stop offset="0.8023" stop-color="#c6d6d6"/><stop offset="0.8870" stop-color="#a2aaaa"/><stop offset="0.9576" stop-color="#7e7c7a"/><stop offset="1.0000" stop-color="#6a6460"/></linearGradient><rect x="813" y="206" width="12.6" height="134.0" fill="url(#sk22)"/><linearGradient id="sk23" x1="0" y1="206" x2="0" y2="338.9" gradientUnits="userSpaceOnUse"><stop offset="0.0000" stop-color="#b2d3f2"/><stop offset="0.2558" stop-color="#c8e8fa"/><stop offset="0.4214" stop-color="#d8f4fc"/><stop offset="0.6145" stop-color="#ecfdfd"/><stop offset="0.7198" stop-color="#e2f6f6"/><stop offset="0.8039" stop-color="#c6d6d6"/><stop offset="0.8879" stop-color="#a2aaaa"/><stop offset="0.9580" stop-color="#7e7c7a"/><stop offset="1.0000" stop-color="#6a6460"/></linearGradient><rect x="825" y="206" width="12.6" height="133.4" fill="url(#sk23)"/><linearGradient id="sk24" x1="0" y1="206" x2="0" y2="338.3" gradientUnits="userSpaceOnUse"><stop offset="0.0000" stop-color="#b2d3f2"/><stop offset="0.2570" stop-color="#c8e8fa"/><stop offset="0.4234" stop-color="#d8f4fc"/><stop offset="0.6162" stop-color="#ecfdfd"/><stop offset="0.7221" stop-color="#e2f6f6"/><stop offset="0.8054" stop-color="#c6d6d6"/><stop offset="0.8888" stop-color="#a2aaaa"/><stop offset="0.9583" stop-color="#7e7c7a"/><stop offset="1.0000" stop-color="#6a6460"/></linearGradient><rect x="837" y="206" width="12.6" height="132.8" fill="url(#sk24)"/><linearGradient id="sk25" x1="0" y1="206" x2="0" y2="337.7" gradientUnits="userSpaceOnUse"><stop offset="0.0000" stop-color="#b2d3f2"/><stop offset="0.2582" stop-color="#c8e8fa"/><stop offset="0.4253" stop-color="#d8f4fc"/><stop offset="0.6179" stop-color="#ecfdfd"/><stop offset="0.7243" stop-color="#e2f6f6"/><stop offset="0.8070" stop-color="#c6d6d6"/><stop offset="0.8897" stop-color="#a2aaaa"/><stop offset="0.9586" stop-color="#7e7c7a"/><stop offset="1.0000" stop-color="#6a6460"/></linearGradient><rect x="849" y="206" width="12.6" height="132.2" fill="url(#sk25)"/><linearGradient id="sk26" x1="0" y1="206" x2="0" y2="337.1" gradientUnits="userSpaceOnUse"><stop offset="0.0000" stop-color="#b2d3f2"/><stop offset="0.2594" stop-color="#c8e8fa"/><stop offset="0.4273" stop-color="#d8f4fc"/><stop offset="0.6196" stop-color="#ecfdfd"/><stop offset="0.7264" stop-color="#e2f6f6"/><stop offset="0.8085" stop-color="#c6d6d6"/><stop offset="0.8906" stop-color="#a2aaaa"/><stop offset="0.9590" stop-color="#7e7c7a"/><stop offset="1.0000" stop-color="#6a6460"/></linearGradient><rect x="861" y="206" width="12.6" height="131.6" fill="url(#sk26)"/><linearGradient id="sk27" x1="0" y1="206" x2="0" y2="336.5" gradientUnits="userSpaceOnUse"><stop offset="0.0000" stop-color="#b2d3f2"/><stop offset="0.2606" stop-color="#c8e8fa"/><stop offset="0.4292" stop-color="#d8f4fc"/><stop offset="0.6213" stop-color="#ecfdfd"/><stop offset="0.7286" stop-color="#e2f6f6"/><stop offset="0.8100" stop-color="#c6d6d6"/><stop offset="0.8914" stop-color="#a2aaaa"/><stop offset="0.9593" stop-color="#7e7c7a"/><stop offset="1.0000" stop-color="#6a6460"/></linearGradient><rect x="873" y="206" width="12.6" height="131.0" fill="url(#sk27)"/><linearGradient id="sk28" x1="0" y1="206" x2="0" y2="335.9" gradientUnits="userSpaceOnUse"><stop offset="0.0000" stop-color="#b2d3f2"/><stop offset="0.2617" stop-color="#c8e8fa"/><stop offset="0.4310" stop-color="#d8f4fc"/><stop offset="0.6229" stop-color="#ecfdfd"/><stop offset="0.7307" stop-color="#e2f6f6"/><stop offset="0.8115" stop-color="#c6d6d6"/><stop offset="0.8923" stop-color="#a2aaaa"/><stop offset="0.9596" stop-color="#7e7c7a"/><stop offset="1.0000" stop-color="#6a6460"/></linearGradient><rect x="885" y="206" width="12.6" height="130.4" fill="url(#sk28)"/><linearGradient id="sk29" x1="0" y1="206" x2="0" y2="335.4" gradientUnits="userSpaceOnUse"><stop offset="0.0000" stop-color="#b2d3f2"/><stop offset="0.2628" stop-color="#c8e8fa"/><stop offset="0.4329" stop-color="#d8f4fc"/><stop offset="0.6245" stop-color="#ecfdfd"/><stop offset="0.7328" stop-color="#e2f6f6"/><stop offset="0.8129" stop-color="#c6d6d6"/><stop offset="0.8931" stop-color="#a2aaaa"/><stop offset="0.9599" stop-color="#7e7c7a"/><stop offset="1.0000" stop-color="#6a6460"/></linearGradient><rect x="897" y="206" width="12.6" height="129.9" fill="url(#sk29)"/><linearGradient id="sk30" x1="0" y1="206" x2="0" y2="334.8" gradientUnits="userSpaceOnUse"><stop offset="0.0000" stop-color="#b2d3f2"/><stop offset="0.2639" stop-color="#c8e8fa"/><stop offset="0.4347" stop-color="#d8f4fc"/><stop offset="0.6261" stop-color="#ecfdfd"/><stop offset="0.7348" stop-color="#e2f6f6"/><stop offset="0.8144" stop-color="#c6d6d6"/><stop offset="0.8939" stop-color="#a2aaaa"/><stop offset="0.9602" stop-color="#7e7c7a"/><stop offset="1.0000" stop-color="#6a6460"/></linearGradient><rect x="909" y="206" width="12.6" height="129.3" fill="url(#sk30)"/><linearGradient id="sk31" x1="0" y1="206" x2="0" y2="334.3" gradientUnits="userSpaceOnUse"><stop offset="0.0000" stop-color="#b2d3f2"/><stop offset="0.2650" stop-color="#c8e8fa"/><stop offset="0.4365" stop-color="#d8f4fc"/><stop offset="0.6277" stop-color="#ecfdfd"/><stop offset="0.7368" stop-color="#e2f6f6"/><stop offset="0.8158" stop-color="#c6d6d6"/><stop offset="0.8947" stop-color="#a2aaaa"/><stop offset="0.9605" stop-color="#7e7c7a"/><stop offset="1.0000" stop-color="#6a6460"/></linearGradient><rect x="921" y="206" width="12.6" height="128.8" fill="url(#sk31)"/><linearGradient id="sk32" x1="0" y1="206" x2="0" y2="333.8" gradientUnits="userSpaceOnUse"><stop offset="0.0000" stop-color="#b2d3f2"/><stop offset="0.2661" stop-color="#c8e8fa"/><stop offset="0.4383" stop-color="#d8f4fc"/><stop offset="0.6292" stop-color="#ecfdfd"/><stop offset="0.7388" stop-color="#e2f6f6"/><stop offset="0.8172" stop-color="#c6d6d6"/><stop offset="0.8955" stop-color="#a2aaaa"/><stop offset="0.9608" stop-color="#7e7c7a"/><stop offset="1.0000" stop-color="#6a6460"/></linearGradient><rect x="933" y="206" width="12.6" height="128.3" fill="url(#sk32)"/><linearGradient id="sk33" x1="0" y1="206" x2="0" y2="333.3" gradientUnits="userSpaceOnUse"><stop offset="0.0000" stop-color="#b2d3f2"/><stop offset="0.2671" stop-color="#c8e8fa"/><stop offset="0.4400" stop-color="#d8f4fc"/><stop offset="0.6308" stop-color="#ecfdfd"/><stop offset="0.7408" stop-color="#e2f6f6"/><stop offset="0.8185" stop-color="#c6d6d6"/><stop offset="0.8963" stop-color="#a2aaaa"/><stop offset="0.9611" stop-color="#7e7c7a"/><stop offset="1.0000" stop-color="#6a6460"/></linearGradient><rect x="945" y="206" width="12.6" height="127.8" fill="url(#sk33)"/><linearGradient id="sk34" x1="0" y1="206" x2="0" y2="332.8" gradientUnits="userSpaceOnUse"><stop offset="0.0000" stop-color="#b2d3f2"/><stop offset="0.2682" stop-color="#c8e8fa"/><stop offset="0.4417" stop-color="#d8f4fc"/><stop offset="0.6322" stop-color="#ecfdfd"/><stop offset="0.7427" stop-color="#e2f6f6"/><stop offset="0.8199" stop-color="#c6d6d6"/><stop offset="0.8971" stop-color="#a2aaaa"/><stop offset="0.9614" stop-color="#7e7c7a"/><stop offset="1.0000" stop-color="#6a6460"/></linearGradient><rect x="957" y="206" width="12.6" height="127.3" fill="url(#sk34)"/><linearGradient id="sk35" x1="0" y1="206" x2="0" y2="332.3" gradientUnits="userSpaceOnUse"><stop offset="0.0000" stop-color="#b2d3f2"/><stop offset="0.2692" stop-color="#c8e8fa"/><stop offset="0.4434" stop-color="#d8f4fc"/><stop offset="0.6337" stop-color="#ecfdfd"/><stop offset="0.7445" stop-color="#e2f6f6"/><stop offset="0.8212" stop-color="#c6d6d6"/><stop offset="0.8978" stop-color="#a2aaaa"/><stop offset="0.9617" stop-color="#7e7c7a"/><stop offset="1.0000" stop-color="#6a6460"/></linearGradient><rect x="969" y="206" width="12.6" height="126.8" fill="url(#sk35)"/><linearGradient id="sk36" x1="0" y1="206" x2="0" y2="331.8" gradientUnits="userSpaceOnUse"><stop offset="0.0000" stop-color="#b2d3f2"/><stop offset="0.2702" stop-color="#c8e8fa"/><stop offset="0.4450" stop-color="#d8f4fc"/><stop offset="0.6351" stop-color="#ecfdfd"/><stop offset="0.7464" stop-color="#e2f6f6"/><stop offset="0.8225" stop-color="#c6d6d6"/><stop offset="0.8986" stop-color="#a2aaaa"/><stop offset="0.9620" stop-color="#7e7c7a"/><stop offset="1.0000" stop-color="#6a6460"/></linearGradient><rect x="981" y="206" width="12.6" height="126.3" fill="url(#sk36)"/><linearGradient id="sk37" x1="0" y1="206" x2="0" y2="331.4" gradientUnits="userSpaceOnUse"><stop offset="0.0000" stop-color="#b2d3f2"/><stop offset="0.2711" stop-color="#c8e8fa"/><stop offset="0.4466" stop-color="#d8f4fc"/><stop offset="0.6365" stop-color="#ecfdfd"/><stop offset="0.7482" stop-color="#e2f6f6"/><stop offset="0.8237" stop-color="#c6d6d6"/><stop offset="0.8993" stop-color="#a2aaaa"/><stop offset="0.9622" stop-color="#7e7c7a"/><stop offset="1.0000" stop-color="#6a6460"/></linearGradient><rect x="993" y="206" width="12.6" height="125.9" fill="url(#sk37)"/><linearGradient id="sk38" x1="0" y1="206" x2="0" y2="331.0" gradientUnits="userSpaceOnUse"><stop offset="0.0000" stop-color="#b2d3f2"/><stop offset="0.2721" stop-color="#c8e8fa"/><stop offset="0.4481" stop-color="#d8f4fc"/><stop offset="0.6379" stop-color="#ecfdfd"/><stop offset="0.7499" stop-color="#e2f6f6"/><stop offset="0.8249" stop-color="#c6d6d6"/><stop offset="0.9000" stop-color="#a2aaaa"/><stop offset="0.9625" stop-color="#7e7c7a"/><stop offset="1.0000" stop-color="#6a6460"/></linearGradient><rect x="1005" y="206" width="12.6" height="125.5" fill="url(#sk38)"/><linearGradient id="sk39" x1="0" y1="206" x2="0" y2="330.5" gradientUnits="userSpaceOnUse"><stop offset="0.0000" stop-color="#b2d3f2"/><stop offset="0.2730" stop-color="#c8e8fa"/><stop offset="0.4497" stop-color="#d8f4fc"/><stop offset="0.6392" stop-color="#ecfdfd"/><stop offset="0.7516" stop-color="#e2f6f6"/><stop offset="0.8261" stop-color="#c6d6d6"/><stop offset="0.9007" stop-color="#a2aaaa"/><stop offset="0.9627" stop-color="#7e7c7a"/><stop offset="1.0000" stop-color="#6a6460"/></linearGradient><rect x="1017" y="206" width="12.6" height="125.0" fill="url(#sk39)"/><linearGradient id="sk40" x1="0" y1="206" x2="0" y2="330.1" gradientUnits="userSpaceOnUse"><stop offset="0.0000" stop-color="#b2d3f2"/><stop offset="0.2739" stop-color="#c8e8fa"/><stop offset="0.4511" stop-color="#d8f4fc"/><stop offset="0.6405" stop-color="#ecfdfd"/><stop offset="0.7533" stop-color="#e2f6f6"/><stop offset="0.8273" stop-color="#c6d6d6"/><stop offset="0.9013" stop-color="#a2aaaa"/><stop offset="0.9630" stop-color="#7e7c7a"/><stop offset="1.0000" stop-color="#6a6460"/></linearGradient><rect x="1029" y="206" width="12.6" height="124.6" fill="url(#sk40)"/><linearGradient id="sk41" x1="0" y1="206" x2="0" y2="329.7" gradientUnits="userSpaceOnUse"><stop offset="0.0000" stop-color="#b2d3f2"/><stop offset="0.2748" stop-color="#c8e8fa"/><stop offset="0.4526" stop-color="#d8f4fc"/><stop offset="0.6418" stop-color="#ecfdfd"/><stop offset="0.7549" stop-color="#e2f6f6"/><stop offset="0.8285" stop-color="#c6d6d6"/><stop offset="0.9020" stop-color="#a2aaaa"/><stop offset="0.9632" stop-color="#7e7c7a"/><stop offset="1.0000" stop-color="#6a6460"/></linearGradient><rect x="1041" y="206" width="12.6" height="124.2" fill="url(#sk41)"/><linearGradient id="sk42" x1="0" y1="206" x2="0" y2="329.3" gradientUnits="userSpaceOnUse"><stop offset="0.0000" stop-color="#b2d3f2"/><stop offset="0.2756" stop-color="#c8e8fa"/><stop offset="0.4540" stop-color="#d8f4fc"/><stop offset="0.6430" stop-color="#ecfdfd"/><stop offset="0.7565" stop-color="#e2f6f6"/><stop offset="0.8296" stop-color="#c6d6d6"/><stop offset="0.9026" stop-color="#a2aaaa"/><stop offset="0.9635" stop-color="#7e7c7a"/><stop offset="1.0000" stop-color="#6a6460"/></linearGradient><rect x="1053" y="206" width="12.6" height="123.8" fill="url(#sk42)"/><linearGradient id="sk43" x1="0" y1="206" x2="0" y2="329.0" gradientUnits="userSpaceOnUse"><stop offset="0.0000" stop-color="#b2d3f2"/><stop offset="0.2765" stop-color="#c8e8fa"/><stop offset="0.4554" stop-color="#d8f4fc"/><stop offset="0.6442" stop-color="#ecfdfd"/><stop offset="0.7580" stop-color="#e2f6f6"/><stop offset="0.8306" stop-color="#c6d6d6"/><stop offset="0.9032" stop-color="#a2aaaa"/><stop offset="0.9637" stop-color="#7e7c7a"/><stop offset="1.0000" stop-color="#6a6460"/></linearGradient><rect x="1065" y="206" width="12.6" height="123.5" fill="url(#sk43)"/><linearGradient id="sk44" x1="0" y1="206" x2="0" y2="328.6" gradientUnits="userSpaceOnUse"><stop offset="0.0000" stop-color="#b2d3f2"/><stop offset="0.2773" stop-color="#c8e8fa"/><stop offset="0.4567" stop-color="#d8f4fc"/><stop offset="0.6454" stop-color="#ecfdfd"/><stop offset="0.7595" stop-color="#e2f6f6"/><stop offset="0.8317" stop-color="#c6d6d6"/><stop offset="0.9038" stop-color="#a2aaaa"/><stop offset="0.9639" stop-color="#7e7c7a"/><stop offset="1.0000" stop-color="#6a6460"/></linearGradient><rect x="1077" y="206" width="12.6" height="123.1" fill="url(#sk44)"/><linearGradient id="sk45" x1="0" y1="206" x2="0" y2="328.3" gradientUnits="userSpaceOnUse"><stop offset="0.0000" stop-color="#b2d3f2"/><stop offset="0.2781" stop-color="#c8e8fa"/><stop offset="0.4580" stop-color="#d8f4fc"/><stop offset="0.6465" stop-color="#ecfdfd"/><stop offset="0.7610" stop-color="#e2f6f6"/><stop offset="0.8327" stop-color="#c6d6d6"/><stop offset="0.9044" stop-color="#a2aaaa"/><stop offset="0.9641" stop-color="#7e7c7a"/><stop offset="1.0000" stop-color="#6a6460"/></linearGradient><rect x="1089" y="206" width="12.6" height="122.8" fill="url(#sk45)"/><linearGradient id="sk46" x1="0" y1="206" x2="0" y2="327.9" gradientUnits="userSpaceOnUse"><stop offset="0.0000" stop-color="#b2d3f2"/><stop offset="0.2788" stop-color="#c8e8fa"/><stop offset="0.4592" stop-color="#d8f4fc"/><stop offset="0.6476" stop-color="#ecfdfd"/><stop offset="0.7624" stop-color="#e2f6f6"/><stop offset="0.8337" stop-color="#c6d6d6"/><stop offset="0.9049" stop-color="#a2aaaa"/><stop offset="0.9644" stop-color="#7e7c7a"/><stop offset="1.0000" stop-color="#6a6460"/></linearGradient><rect x="1101" y="206" width="12.6" height="122.4" fill="url(#sk46)"/><linearGradient id="sk47" x1="0" y1="206" x2="0" y2="327.6" gradientUnits="userSpaceOnUse"><stop offset="0.0000" stop-color="#b2d3f2"/><stop offset="0.2795" stop-color="#c8e8fa"/><stop offset="0.4604" stop-color="#d8f4fc"/><stop offset="0.6486" stop-color="#ecfdfd"/><stop offset="0.7637" stop-color="#e2f6f6"/><stop offset="0.8346" stop-color="#c6d6d6"/><stop offset="0.9055" stop-color="#a2aaaa"/><stop offset="0.9646" stop-color="#7e7c7a"/><stop offset="1.0000" stop-color="#6a6460"/></linearGradient><rect x="1113" y="206" width="12.6" height="122.1" fill="url(#sk47)"/><linearGradient id="sk48" x1="0" y1="206" x2="0" y2="327.3" gradientUnits="userSpaceOnUse"><stop offset="0.0000" stop-color="#b2d3f2"/><stop offset="0.2802" stop-color="#c8e8fa"/><stop offset="0.4616" stop-color="#d8f4fc"/><stop offset="0.6496" stop-color="#ecfdfd"/><stop offset="0.7650" stop-color="#e2f6f6"/><stop offset="0.8355" stop-color="#c6d6d6"/><stop offset="0.9060" stop-color="#a2aaaa"/><stop offset="0.9648" stop-color="#7e7c7a"/><stop offset="1.0000" stop-color="#6a6460"/></linearGradient><rect x="1125" y="206" width="12.6" height="121.8" fill="url(#sk48)"/><linearGradient id="sk49" x1="0" y1="206" x2="0" y2="327.0" gradientUnits="userSpaceOnUse"><stop offset="0.0000" stop-color="#b2d3f2"/><stop offset="0.2809" stop-color="#c8e8fa"/><stop offset="0.4627" stop-color="#d8f4fc"/><stop offset="0.6506" stop-color="#ecfdfd"/><stop offset="0.7663" stop-color="#e2f6f6"/><stop offset="0.8364" stop-color="#c6d6d6"/><stop offset="0.9065" stop-color="#a2aaaa"/><stop offset="0.9649" stop-color="#7e7c7a"/><stop offset="1.0000" stop-color="#6a6460"/></linearGradient><rect x="1137" y="206" width="12.6" height="121.5" fill="url(#sk49)"/><linearGradient id="sk50" x1="0" y1="206" x2="0" y2="326.8" gradientUnits="userSpaceOnUse"><stop offset="0.0000" stop-color="#b2d3f2"/><stop offset="0.2815" stop-color="#c8e8fa"/><stop offset="0.4637" stop-color="#d8f4fc"/><stop offset="0.6515" stop-color="#ecfdfd"/><stop offset="0.7675" stop-color="#e2f6f6"/><stop offset="0.8372" stop-color="#c6d6d6"/><stop offset="0.9070" stop-color="#a2aaaa"/><stop offset="0.9651" stop-color="#7e7c7a"/><stop offset="1.0000" stop-color="#6a6460"/></linearGradient><rect x="1149" y="206" width="12.6" height="121.3" fill="url(#sk50)"/><linearGradient id="sk51" x1="0" y1="206" x2="0" y2="326.5" gradientUnits="userSpaceOnUse"><stop offset="0.0000" stop-color="#b2d3f2"/><stop offset="0.2822" stop-color="#c8e8fa"/><stop offset="0.4647" stop-color="#d8f4fc"/><stop offset="0.6524" stop-color="#ecfdfd"/><stop offset="0.7686" stop-color="#e2f6f6"/><stop offset="0.8380" stop-color="#c6d6d6"/><stop offset="0.9074" stop-color="#a2aaaa"/><stop offset="0.9653" stop-color="#7e7c7a"/><stop offset="1.0000" stop-color="#6a6460"/></linearGradient><rect x="1161" y="206" width="12.6" height="121.0" fill="url(#sk51)"/><linearGradient id="sk52" x1="0" y1="206" x2="0" y2="326.2" gradientUnits="userSpaceOnUse"><stop offset="0.0000" stop-color="#b2d3f2"/><stop offset="0.2828" stop-color="#c8e8fa"/><stop offset="0.4657" stop-color="#d8f4fc"/><stop offset="0.6533" stop-color="#ecfdfd"/><stop offset="0.7697" stop-color="#e2f6f6"/><stop offset="0.8388" stop-color="#c6d6d6"/><stop offset="0.9079" stop-color="#a2aaaa"/><stop offset="0.9655" stop-color="#7e7c7a"/><stop offset="1.0000" stop-color="#6a6460"/></linearGradient><rect x="1173" y="206" width="12.6" height="120.7" fill="url(#sk52)"/><linearGradient id="sk53" x1="0" y1="206" x2="0" y2="326.0" gradientUnits="userSpaceOnUse"><stop offset="0.0000" stop-color="#b2d3f2"/><stop offset="0.2833" stop-color="#c8e8fa"/><stop offset="0.4666" stop-color="#d8f4fc"/><stop offset="0.6541" stop-color="#ecfdfd"/><stop offset="0.7707" stop-color="#e2f6f6"/><stop offset="0.8395" stop-color="#c6d6d6"/><stop offset="0.9083" stop-color="#a2aaaa"/><stop offset="0.9656" stop-color="#7e7c7a"/><stop offset="1.0000" stop-color="#6a6460"/></linearGradient><rect x="1185" y="206" width="12.6" height="120.5" fill="url(#sk53)"/><linearGradient id="sk54" x1="0" y1="206" x2="0" y2="325.8" gradientUnits="userSpaceOnUse"><stop offset="0.0000" stop-color="#b2d3f2"/><stop offset="0.2838" stop-color="#c8e8fa"/><stop offset="0.4675" stop-color="#d8f4fc"/><stop offset="0.6548" stop-color="#ecfdfd"/><stop offset="0.7717" stop-color="#e2f6f6"/><stop offset="0.8402" stop-color="#c6d6d6"/><stop offset="0.9087" stop-color="#a2aaaa"/><stop offset="0.9658" stop-color="#7e7c7a"/><stop offset="1.0000" stop-color="#6a6460"/></linearGradient><rect x="1197" y="206" width="12.6" height="120.3" fill="url(#sk54)"/><linearGradient id="sk55" x1="0" y1="206" x2="0" y2="325.6" gradientUnits="userSpaceOnUse"><stop offset="0.0000" stop-color="#b2d3f2"/><stop offset="0.2843" stop-color="#c8e8fa"/><stop offset="0.4683" stop-color="#d8f4fc"/><stop offset="0.6555" stop-color="#ecfdfd"/><stop offset="0.7726" stop-color="#e2f6f6"/><stop offset="0.8408" stop-color="#c6d6d6"/><stop offset="0.9091" stop-color="#a2aaaa"/><stop offset="0.9659" stop-color="#7e7c7a"/><stop offset="1.0000" stop-color="#6a6460"/></linearGradient><rect x="1209" y="206" width="12.6" height="120.1" fill="url(#sk55)"/><linearGradient id="sk56" x1="0" y1="206" x2="0" y2="325.4" gradientUnits="userSpaceOnUse"><stop offset="0.0000" stop-color="#b2d3f2"/><stop offset="0.2848" stop-color="#c8e8fa"/><stop offset="0.4691" stop-color="#d8f4fc"/><stop offset="0.6562" stop-color="#ecfdfd"/><stop offset="0.7735" stop-color="#e2f6f6"/><stop offset="0.8415" stop-color="#c6d6d6"/><stop offset="0.9094" stop-color="#a2aaaa"/><stop offset="0.9660" stop-color="#7e7c7a"/><stop offset="1.0000" stop-color="#6a6460"/></linearGradient><rect x="1221" y="206" width="12.6" height="119.9" fill="url(#sk56)"/><linearGradient id="sk57" x1="0" y1="206" x2="0" y2="325.2" gradientUnits="userSpaceOnUse"><stop offset="0.0000" stop-color="#b2d3f2"/><stop offset="0.2853" stop-color="#c8e8fa"/><stop offset="0.4698" stop-color="#d8f4fc"/><stop offset="0.6569" stop-color="#ecfdfd"/><stop offset="0.7743" stop-color="#e2f6f6"/><stop offset="0.8420" stop-color="#c6d6d6"/><stop offset="0.9097" stop-color="#a2aaaa"/><stop offset="0.9661" stop-color="#7e7c7a"/><stop offset="1.0000" stop-color="#6a6460"/></linearGradient><rect x="1233" y="206" width="12.6" height="119.7" fill="url(#sk57)"/><linearGradient id="sk58" x1="0" y1="206" x2="0" y2="325.0" gradientUnits="userSpaceOnUse"><stop offset="0.0000" stop-color="#b2d3f2"/><stop offset="0.2857" stop-color="#c8e8fa"/><stop offset="0.4705" stop-color="#d8f4fc"/><stop offset="0.6575" stop-color="#ecfdfd"/><stop offset="0.7751" stop-color="#e2f6f6"/><stop offset="0.8426" stop-color="#c6d6d6"/><stop offset="0.9100" stop-color="#a2aaaa"/><stop offset="0.9663" stop-color="#7e7c7a"/><stop offset="1.0000" stop-color="#6a6460"/></linearGradient><rect x="1245" y="206" width="12.6" height="119.5" fill="url(#sk58)"/><linearGradient id="sk59" x1="0" y1="206" x2="0" y2="324.9" gradientUnits="userSpaceOnUse"><stop offset="0.0000" stop-color="#b2d3f2"/><stop offset="0.2860" stop-color="#c8e8fa"/><stop offset="0.4711" stop-color="#d8f4fc"/><stop offset="0.6580" stop-color="#ecfdfd"/><stop offset="0.7758" stop-color="#e2f6f6"/><stop offset="0.8430" stop-color="#c6d6d6"/><stop offset="0.9103" stop-color="#a2aaaa"/><stop offset="0.9664" stop-color="#7e7c7a"/><stop offset="1.0000" stop-color="#6a6460"/></linearGradient><rect x="1257" y="206" width="12.6" height="119.4" fill="url(#sk59)"/><linearGradient id="sk60" x1="0" y1="206" x2="0" y2="324.7" gradientUnits="userSpaceOnUse"><stop offset="0.0000" stop-color="#b2d3f2"/><stop offset="0.2864" stop-color="#c8e8fa"/><stop offset="0.4717" stop-color="#d8f4fc"/><stop offset="0.6585" stop-color="#ecfdfd"/><stop offset="0.7764" stop-color="#e2f6f6"/><stop offset="0.8435" stop-color="#c6d6d6"/><stop offset="0.9106" stop-color="#a2aaaa"/><stop offset="0.9665" stop-color="#7e7c7a"/><stop offset="1.0000" stop-color="#6a6460"/></linearGradient><rect x="1269" y="206" width="12.6" height="119.2" fill="url(#sk60)"/><linearGradient id="sk61" x1="0" y1="206" x2="0" y2="324.6" gradientUnits="userSpaceOnUse"><stop offset="0.0000" stop-color="#b2d3f2"/><stop offset="0.2867" stop-color="#c8e8fa"/><stop offset="0.4722" stop-color="#d8f4fc"/><stop offset="0.6590" stop-color="#ecfdfd"/><stop offset="0.7770" stop-color="#e2f6f6"/><stop offset="0.8439" stop-color="#c6d6d6"/><stop offset="0.9108" stop-color="#a2aaaa"/><stop offset="0.9666" stop-color="#7e7c7a"/><stop offset="1.0000" stop-color="#6a6460"/></linearGradient><rect x="1281" y="206" width="12.6" height="119.1" fill="url(#sk61)"/><linearGradient id="sk62" x1="0" y1="206" x2="0" y2="324.5" gradientUnits="userSpaceOnUse"><stop offset="0.0000" stop-color="#b2d3f2"/><stop offset="0.2870" stop-color="#c8e8fa"/><stop offset="0.4727" stop-color="#d8f4fc"/><stop offset="0.6594" stop-color="#ecfdfd"/><stop offset="0.7775" stop-color="#e2f6f6"/><stop offset="0.8443" stop-color="#c6d6d6"/><stop offset="0.9110" stop-color="#a2aaaa"/><stop offset="0.9666" stop-color="#7e7c7a"/><stop offset="1.0000" stop-color="#6a6460"/></linearGradient><rect x="1293" y="206" width="12.6" height="119.0" fill="url(#sk62)"/><linearGradient id="sk63" x1="0" y1="206" x2="0" y2="324.4" gradientUnits="userSpaceOnUse"><stop offset="0.0000" stop-color="#b2d3f2"/><stop offset="0.2872" stop-color="#c8e8fa"/><stop offset="0.4731" stop-color="#d8f4fc"/><stop offset="0.6597" stop-color="#ecfdfd"/><stop offset="0.7780" stop-color="#e2f6f6"/><stop offset="0.8446" stop-color="#c6d6d6"/><stop offset="0.9112" stop-color="#a2aaaa"/><stop offset="0.9667" stop-color="#7e7c7a"/><stop offset="1.0000" stop-color="#6a6460"/></linearGradient><rect x="1305" y="206" width="12.6" height="118.9" fill="url(#sk63)"/><linearGradient id="sk64" x1="0" y1="206" x2="0" y2="324.3" gradientUnits="userSpaceOnUse"><stop offset="0.0000" stop-color="#b2d3f2"/><stop offset="0.2875" stop-color="#c8e8fa"/><stop offset="0.4735" stop-color="#d8f4fc"/><stop offset="0.6601" stop-color="#ecfdfd"/><stop offset="0.7784" stop-color="#e2f6f6"/><stop offset="0.8449" stop-color="#c6d6d6"/><stop offset="0.9114" stop-color="#a2aaaa"/><stop offset="0.9668" stop-color="#7e7c7a"/><stop offset="1.0000" stop-color="#6a6460"/></linearGradient><rect x="1317" y="206" width="12.6" height="118.8" fill="url(#sk64)"/><linearGradient id="sk65" x1="0" y1="206" x2="0" y2="324.2" gradientUnits="userSpaceOnUse"><stop offset="0.0000" stop-color="#b2d3f2"/><stop offset="0.2877" stop-color="#c8e8fa"/><stop offset="0.4738" stop-color="#d8f4fc"/><stop offset="0.6603" stop-color="#ecfdfd"/><stop offset="0.7788" stop-color="#e2f6f6"/><stop offset="0.8451" stop-color="#c6d6d6"/><stop offset="0.9115" stop-color="#a2aaaa"/><stop offset="0.9668" stop-color="#7e7c7a"/><stop offset="1.0000" stop-color="#6a6460"/></linearGradient><rect x="1329" y="206" width="12.6" height="118.7" fill="url(#sk65)"/><linearGradient id="sk66" x1="0" y1="206" x2="0" y2="324.1" gradientUnits="userSpaceOnUse"><stop offset="0.0000" stop-color="#b2d3f2"/><stop offset="0.2878" stop-color="#c8e8fa"/><stop offset="0.4741" stop-color="#d8f4fc"/><stop offset="0.6606" stop-color="#ecfdfd"/><stop offset="0.7791" stop-color="#e2f6f6"/><stop offset="0.8454" stop-color="#c6d6d6"/><stop offset="0.9116" stop-color="#a2aaaa"/><stop offset="0.9669" stop-color="#7e7c7a"/><stop offset="1.0000" stop-color="#6a6460"/></linearGradient><rect x="1341" y="206" width="12.6" height="118.6" fill="url(#sk66)"/><linearGradient id="sk67" x1="0" y1="206" x2="0" y2="324.1" gradientUnits="userSpaceOnUse"><stop offset="0.0000" stop-color="#b2d3f2"/><stop offset="0.2879" stop-color="#c8e8fa"/><stop offset="0.4743" stop-color="#d8f4fc"/><stop offset="0.6607" stop-color="#ecfdfd"/><stop offset="0.7793" stop-color="#e2f6f6"/><stop offset="0.8455" stop-color="#c6d6d6"/><stop offset="0.9117" stop-color="#a2aaaa"/><stop offset="0.9669" stop-color="#7e7c7a"/><stop offset="1.0000" stop-color="#6a6460"/></linearGradient><rect x="1353" y="206" width="12.6" height="118.6" fill="url(#sk67)"/><linearGradient id="sk68" x1="0" y1="206" x2="0" y2="324.0" gradientUnits="userSpaceOnUse"><stop offset="0.0000" stop-color="#b2d3f2"/><stop offset="0.2880" stop-color="#c8e8fa"/><stop offset="0.4744" stop-color="#d8f4fc"/><stop offset="0.6609" stop-color="#ecfdfd"/><stop offset="0.7795" stop-color="#e2f6f6"/><stop offset="0.8456" stop-color="#c6d6d6"/><stop offset="0.9118" stop-color="#a2aaaa"/><stop offset="0.9669" stop-color="#7e7c7a"/><stop offset="1.0000" stop-color="#6a6460"/></linearGradient><rect x="1365" y="206" width="12.6" height="118.5" fill="url(#sk68)"/><linearGradient id="sk69" x1="0" y1="206" x2="0" y2="324.0" gradientUnits="userSpaceOnUse"><stop offset="0.0000" stop-color="#b2d3f2"/><stop offset="0.2881" stop-color="#c8e8fa"/><stop offset="0.4745" stop-color="#d8f4fc"/><stop offset="0.6610" stop-color="#ecfdfd"/><stop offset="0.7796" stop-color="#e2f6f6"/><stop offset="0.8457" stop-color="#c6d6d6"/><stop offset="0.9118" stop-color="#a2aaaa"/><stop offset="0.9669" stop-color="#7e7c7a"/><stop offset="1.0000" stop-color="#6a6460"/></linearGradient><rect x="1377" y="206" width="12.6" height="118.5" fill="url(#sk69)"/><linearGradient id="sk70" x1="0" y1="206" x2="0" y2="324.0" gradientUnits="userSpaceOnUse"><stop offset="0.0000" stop-color="#b2d3f2"/><stop offset="0.2881" stop-color="#c8e8fa"/><stop offset="0.4746" stop-color="#d8f4fc"/><stop offset="0.6610" stop-color="#ecfdfd"/><stop offset="0.7797" stop-color="#e2f6f6"/><stop offset="0.8458" stop-color="#c6d6d6"/><stop offset="0.9119" stop-color="#a2aaaa"/><stop offset="0.9669" stop-color="#7e7c7a"/><stop offset="1.0000" stop-color="#6a6460"/></linearGradient><rect x="1389" y="206" width="12.6" height="118.5" fill="url(#sk70)"/><linearGradient id="sk71" x1="0" y1="206" x2="0" y2="324.0" gradientUnits="userSpaceOnUse"><stop offset="0.0000" stop-color="#b2d3f2"/><stop offset="0.2881" stop-color="#c8e8fa"/><stop offset="0.4746" stop-color="#d8f4fc"/><stop offset="0.6610" stop-color="#ecfdfd"/><stop offset="0.7797" stop-color="#e2f6f6"/><stop offset="0.8458" stop-color="#c6d6d6"/><stop offset="0.9119" stop-color="#a2aaaa"/><stop offset="0.9669" stop-color="#7e7c7a"/><stop offset="1.0000" stop-color="#6a6460"/></linearGradient><rect x="1401" y="206" width="12.6" height="118.5" fill="url(#sk71)"/><linearGradient id="sk72" x1="0" y1="206" x2="0" y2="324.0" gradientUnits="userSpaceOnUse"><stop offset="0.0000" stop-color="#b2d3f2"/><stop offset="0.2881" stop-color="#c8e8fa"/><stop offset="0.4745" stop-color="#d8f4fc"/><stop offset="0.6610" stop-color="#ecfdfd"/><stop offset="0.7796" stop-color="#e2f6f6"/><stop offset="0.8457" stop-color="#c6d6d6"/><stop offset="0.9118" stop-color="#a2aaaa"/><stop offset="0.9669" stop-color="#7e7c7a"/><stop offset="1.0000" stop-color="#6a6460"/></linearGradient><rect x="1413" y="206" width="12.6" height="118.5" fill="url(#sk72)"/><linearGradient id="sk73" x1="0" y1="206" x2="0" y2="324.0" gradientUnits="userSpaceOnUse"><stop offset="0.0000" stop-color="#b2d3f2"/><stop offset="0.2880" stop-color="#c8e8fa"/><stop offset="0.4744" stop-color="#d8f4fc"/><stop offset="0.6609" stop-color="#ecfdfd"/><stop offset="0.7795" stop-color="#e2f6f6"/><stop offset="0.8456" stop-color="#c6d6d6"/><stop offset="0.9118" stop-color="#a2aaaa"/><stop offset="0.9669" stop-color="#7e7c7a"/><stop offset="1.0000" stop-color="#6a6460"/></linearGradient><rect x="1425" y="206" width="12.6" height="118.5" fill="url(#sk73)"/><linearGradient id="sk74" x1="0" y1="206" x2="0" y2="324.1" gradientUnits="userSpaceOnUse"><stop offset="0.0000" stop-color="#b2d3f2"/><stop offset="0.2879" stop-color="#c8e8fa"/><stop offset="0.4742" stop-color="#d8f4fc"/><stop offset="0.6607" stop-color="#ecfdfd"/><stop offset="0.7793" stop-color="#e2f6f6"/><stop offset="0.8455" stop-color="#c6d6d6"/><stop offset="0.9117" stop-color="#a2aaaa"/><stop offset="0.9669" stop-color="#7e7c7a"/><stop offset="1.0000" stop-color="#6a6460"/></linearGradient><rect x="1437" y="206" width="12.6" height="118.6" fill="url(#sk74)"/><linearGradient id="sk75" x1="0" y1="206" x2="0" y2="324.1" gradientUnits="userSpaceOnUse"><stop offset="0.0000" stop-color="#b2d3f2"/><stop offset="0.2878" stop-color="#c8e8fa"/><stop offset="0.4740" stop-color="#d8f4fc"/><stop offset="0.6605" stop-color="#ecfdfd"/><stop offset="0.7790" stop-color="#e2f6f6"/><stop offset="0.8453" stop-color="#c6d6d6"/><stop offset="0.9116" stop-color="#a2aaaa"/><stop offset="0.9669" stop-color="#7e7c7a"/><stop offset="1.0000" stop-color="#6a6460"/></linearGradient><rect x="1449" y="206" width="12.6" height="118.6" fill="url(#sk75)"/><linearGradient id="sk76" x1="0" y1="206" x2="0" y2="324.2" gradientUnits="userSpaceOnUse"><stop offset="0.0000" stop-color="#b2d3f2"/><stop offset="0.2876" stop-color="#c8e8fa"/><stop offset="0.4737" stop-color="#d8f4fc"/><stop offset="0.6603" stop-color="#ecfdfd"/><stop offset="0.7787" stop-color="#e2f6f6"/><stop offset="0.8451" stop-color="#c6d6d6"/><stop offset="0.9115" stop-color="#a2aaaa"/><stop offset="0.9668" stop-color="#7e7c7a"/><stop offset="1.0000" stop-color="#6a6460"/></linearGradient><rect x="1461" y="206" width="12.6" height="118.7" fill="url(#sk76)"/><linearGradient id="sk77" x1="0" y1="206" x2="0" y2="324.3" gradientUnits="userSpaceOnUse"><stop offset="0.0000" stop-color="#b2d3f2"/><stop offset="0.2874" stop-color="#c8e8fa"/><stop offset="0.4734" stop-color="#d8f4fc"/><stop offset="0.6600" stop-color="#ecfdfd"/><stop offset="0.7784" stop-color="#e2f6f6"/><stop offset="0.8449" stop-color="#c6d6d6"/><stop offset="0.9113" stop-color="#a2aaaa"/><stop offset="0.9668" stop-color="#7e7c7a"/><stop offset="1.0000" stop-color="#6a6460"/></linearGradient><rect x="1473" y="206" width="12.6" height="118.8" fill="url(#sk77)"/><linearGradient id="sk78" x1="0" y1="206" x2="0" y2="324.4" gradientUnits="userSpaceOnUse"><stop offset="0.0000" stop-color="#b2d3f2"/><stop offset="0.2872" stop-color="#c8e8fa"/><stop offset="0.4730" stop-color="#d8f4fc"/><stop offset="0.6597" stop-color="#ecfdfd"/><stop offset="0.7779" stop-color="#e2f6f6"/><stop offset="0.8446" stop-color="#c6d6d6"/><stop offset="0.9112" stop-color="#a2aaaa"/><stop offset="0.9667" stop-color="#7e7c7a"/><stop offset="1.0000" stop-color="#6a6460"/></linearGradient><rect x="1485" y="206" width="12.6" height="118.9" fill="url(#sk78)"/><linearGradient id="sk79" x1="0" y1="206" x2="0" y2="324.5" gradientUnits="userSpaceOnUse"><stop offset="0.0000" stop-color="#b2d3f2"/><stop offset="0.2869" stop-color="#c8e8fa"/><stop offset="0.4726" stop-color="#d8f4fc"/><stop offset="0.6593" stop-color="#ecfdfd"/><stop offset="0.7775" stop-color="#e2f6f6"/><stop offset="0.8442" stop-color="#c6d6d6"/><stop offset="0.9110" stop-color="#a2aaaa"/><stop offset="0.9666" stop-color="#7e7c7a"/><stop offset="1.0000" stop-color="#6a6460"/></linearGradient><rect x="1497" y="206" width="12.6" height="119.0" fill="url(#sk79)"/><linearGradient id="sk80" x1="0" y1="206" x2="0" y2="324.6" gradientUnits="userSpaceOnUse"><stop offset="0.0000" stop-color="#b2d3f2"/><stop offset="0.2867" stop-color="#c8e8fa"/><stop offset="0.4721" stop-color="#d8f4fc"/><stop offset="0.6589" stop-color="#ecfdfd"/><stop offset="0.7769" stop-color="#e2f6f6"/><stop offset="0.8438" stop-color="#c6d6d6"/><stop offset="0.9108" stop-color="#a2aaaa"/><stop offset="0.9665" stop-color="#7e7c7a"/><stop offset="1.0000" stop-color="#6a6460"/></linearGradient><rect x="1509" y="206" width="12.6" height="119.1" fill="url(#sk80)"/><linearGradient id="sk81" x1="0" y1="206" x2="0" y2="324.7" gradientUnits="userSpaceOnUse"><stop offset="0.0000" stop-color="#b2d3f2"/><stop offset="0.2863" stop-color="#c8e8fa"/><stop offset="0.4716" stop-color="#d8f4fc"/><stop offset="0.6584" stop-color="#ecfdfd"/><stop offset="0.7763" stop-color="#e2f6f6"/><stop offset="0.8434" stop-color="#c6d6d6"/><stop offset="0.9105" stop-color="#a2aaaa"/><stop offset="0.9664" stop-color="#7e7c7a"/><stop offset="1.0000" stop-color="#6a6460"/></linearGradient><rect x="1521" y="206" width="12.6" height="119.2" fill="url(#sk81)"/><linearGradient id="sk82" x1="0" y1="206" x2="0" y2="324.9" gradientUnits="userSpaceOnUse"><stop offset="0.0000" stop-color="#b2d3f2"/><stop offset="0.2860" stop-color="#c8e8fa"/><stop offset="0.4710" stop-color="#d8f4fc"/><stop offset="0.6579" stop-color="#ecfdfd"/><stop offset="0.7757" stop-color="#e2f6f6"/><stop offset="0.8430" stop-color="#c6d6d6"/><stop offset="0.9103" stop-color="#a2aaaa"/><stop offset="0.9664" stop-color="#7e7c7a"/><stop offset="1.0000" stop-color="#6a6460"/></linearGradient><rect x="1533" y="206" width="12.6" height="119.4" fill="url(#sk82)"/><linearGradient id="sk83" x1="0" y1="206" x2="0" y2="325.0" gradientUnits="userSpaceOnUse"><stop offset="0.0000" stop-color="#b2d3f2"/><stop offset="0.2856" stop-color="#c8e8fa"/><stop offset="0.4704" stop-color="#d8f4fc"/><stop offset="0.6574" stop-color="#ecfdfd"/><stop offset="0.7750" stop-color="#e2f6f6"/><stop offset="0.8425" stop-color="#c6d6d6"/><stop offset="0.9100" stop-color="#a2aaaa"/><stop offset="0.9662" stop-color="#7e7c7a"/><stop offset="1.0000" stop-color="#6a6460"/></linearGradient><rect x="1545" y="206" width="12.6" height="119.5" fill="url(#sk83)"/><linearGradient id="sk84" x1="0" y1="206" x2="0" y2="325.2" gradientUnits="userSpaceOnUse"><stop offset="0.0000" stop-color="#b2d3f2"/><stop offset="0.2852" stop-color="#c8e8fa"/><stop offset="0.4697" stop-color="#d8f4fc"/><stop offset="0.6568" stop-color="#ecfdfd"/><stop offset="0.7742" stop-color="#e2f6f6"/><stop offset="0.8419" stop-color="#c6d6d6"/><stop offset="0.9097" stop-color="#a2aaaa"/><stop offset="0.9661" stop-color="#7e7c7a"/><stop offset="1.0000" stop-color="#6a6460"/></linearGradient><rect x="1557" y="206" width="12.6" height="119.7" fill="url(#sk84)"/><linearGradient id="sk85" x1="0" y1="206" x2="0" y2="325.4" gradientUnits="userSpaceOnUse"><stop offset="0.0000" stop-color="#b2d3f2"/><stop offset="0.2847" stop-color="#c8e8fa"/><stop offset="0.4690" stop-color="#d8f4fc"/><stop offset="0.6561" stop-color="#ecfdfd"/><stop offset="0.7734" stop-color="#e2f6f6"/><stop offset="0.8414" stop-color="#c6d6d6"/><stop offset="0.9093" stop-color="#a2aaaa"/><stop offset="0.9660" stop-color="#7e7c7a"/><stop offset="1.0000" stop-color="#6a6460"/></linearGradient><rect x="1569" y="206" width="12.6" height="119.9" fill="url(#sk85)"/><linearGradient id="sk86" x1="0" y1="206" x2="0" y2="325.6" gradientUnits="userSpaceOnUse"><stop offset="0.0000" stop-color="#b2d3f2"/><stop offset="0.2843" stop-color="#c8e8fa"/><stop offset="0.4682" stop-color="#d8f4fc"/><stop offset="0.6554" stop-color="#ecfdfd"/><stop offset="0.7725" stop-color="#e2f6f6"/><stop offset="0.8407" stop-color="#c6d6d6"/><stop offset="0.9090" stop-color="#a2aaaa"/><stop offset="0.9659" stop-color="#7e7c7a"/><stop offset="1.0000" stop-color="#6a6460"/></linearGradient><rect x="1581" y="206" width="12.6" height="120.1" fill="url(#sk86)"/><linearGradient id="sk87" x1="0" y1="206" x2="0" y2="325.8" gradientUnits="userSpaceOnUse"><stop offset="0.0000" stop-color="#b2d3f2"/><stop offset="0.2838" stop-color="#c8e8fa"/><stop offset="0.4674" stop-color="#d8f4fc"/><stop offset="0.6547" stop-color="#ecfdfd"/><stop offset="0.7715" stop-color="#e2f6f6"/><stop offset="0.8401" stop-color="#c6d6d6"/><stop offset="0.9086" stop-color="#a2aaaa"/><stop offset="0.9657" stop-color="#7e7c7a"/><stop offset="1.0000" stop-color="#6a6460"/></linearGradient><rect x="1593" y="206" width="12.6" height="120.3" fill="url(#sk87)"/><linearGradient id="sk88" x1="0" y1="206" x2="0" y2="326.0" gradientUnits="userSpaceOnUse"><stop offset="0.0000" stop-color="#b2d3f2"/><stop offset="0.2832" stop-color="#c8e8fa"/><stop offset="0.4665" stop-color="#d8f4fc"/><stop offset="0.6539" stop-color="#ecfdfd"/><stop offset="0.7706" stop-color="#e2f6f6"/><stop offset="0.8394" stop-color="#c6d6d6"/><stop offset="0.9082" stop-color="#a2aaaa"/><stop offset="0.9656" stop-color="#7e7c7a"/><stop offset="1.0000" stop-color="#6a6460"/></linearGradient><rect x="1605" y="206" width="12.6" height="120.5" fill="url(#sk88)"/><linearGradient id="sk89" x1="0" y1="206" x2="0" y2="326.3" gradientUnits="userSpaceOnUse"><stop offset="0.0000" stop-color="#b2d3f2"/><stop offset="0.2827" stop-color="#c8e8fa"/><stop offset="0.4656" stop-color="#d8f4fc"/><stop offset="0.6531" stop-color="#ecfdfd"/><stop offset="0.7695" stop-color="#e2f6f6"/><stop offset="0.8387" stop-color="#c6d6d6"/><stop offset="0.9078" stop-color="#a2aaaa"/><stop offset="0.9654" stop-color="#7e7c7a"/><stop offset="1.0000" stop-color="#6a6460"/></linearGradient><rect x="1617" y="206" width="12.6" height="120.8" fill="url(#sk89)"/><linearGradient id="sk90" x1="0" y1="206" x2="0" y2="326.5" gradientUnits="userSpaceOnUse"><stop offset="0.0000" stop-color="#b2d3f2"/><stop offset="0.2821" stop-color="#c8e8fa"/><stop offset="0.4646" stop-color="#d8f4fc"/><stop offset="0.6523" stop-color="#ecfdfd"/><stop offset="0.7684" stop-color="#e2f6f6"/><stop offset="0.8379" stop-color="#c6d6d6"/><stop offset="0.9074" stop-color="#a2aaaa"/><stop offset="0.9653" stop-color="#7e7c7a"/><stop offset="1.0000" stop-color="#6a6460"/></linearGradient><rect x="1629" y="206" width="12.6" height="121.0" fill="url(#sk90)"/><linearGradient id="sk91" x1="0" y1="206" x2="0" y2="326.8" gradientUnits="userSpaceOnUse"><stop offset="0.0000" stop-color="#b2d3f2"/><stop offset="0.2814" stop-color="#c8e8fa"/><stop offset="0.4636" stop-color="#d8f4fc"/><stop offset="0.6514" stop-color="#ecfdfd"/><stop offset="0.7673" stop-color="#e2f6f6"/><stop offset="0.8371" stop-color="#c6d6d6"/><stop offset="0.9069" stop-color="#a2aaaa"/><stop offset="0.9651" stop-color="#7e7c7a"/><stop offset="1.0000" stop-color="#6a6460"/></linearGradient><rect x="1641" y="206" width="12.6" height="121.3" fill="url(#sk91)"/><linearGradient id="sk92" x1="0" y1="206" x2="0" y2="327.1" gradientUnits="userSpaceOnUse"><stop offset="0.0000" stop-color="#b2d3f2"/><stop offset="0.2808" stop-color="#c8e8fa"/><stop offset="0.4625" stop-color="#d8f4fc"/><stop offset="0.6504" stop-color="#ecfdfd"/><stop offset="0.7661" stop-color="#e2f6f6"/><stop offset="0.8362" stop-color="#c6d6d6"/><stop offset="0.9064" stop-color="#a2aaaa"/><stop offset="0.9649" stop-color="#7e7c7a"/><stop offset="1.0000" stop-color="#6a6460"/></linearGradient><rect x="1653" y="206" width="12.6" height="121.6" fill="url(#sk92)"/><linearGradient id="sk93" x1="0" y1="206" x2="0" y2="327.4" gradientUnits="userSpaceOnUse"><stop offset="0.0000" stop-color="#b2d3f2"/><stop offset="0.2801" stop-color="#c8e8fa"/><stop offset="0.4614" stop-color="#d8f4fc"/><stop offset="0.6495" stop-color="#ecfdfd"/><stop offset="0.7648" stop-color="#e2f6f6"/><stop offset="0.8354" stop-color="#c6d6d6"/><stop offset="0.9059" stop-color="#a2aaaa"/><stop offset="0.9647" stop-color="#7e7c7a"/><stop offset="1.0000" stop-color="#6a6460"/></linearGradient><rect x="1665" y="206" width="12.6" height="121.9" fill="url(#sk93)"/><linearGradient id="sk94" x1="0" y1="206" x2="0" y2="327.7" gradientUnits="userSpaceOnUse"><stop offset="0.0000" stop-color="#b2d3f2"/><stop offset="0.2794" stop-color="#c8e8fa"/><stop offset="0.4602" stop-color="#d8f4fc"/><stop offset="0.6484" stop-color="#ecfdfd"/><stop offset="0.7635" stop-color="#e2f6f6"/><stop offset="0.8344" stop-color="#c6d6d6"/><stop offset="0.9054" stop-color="#a2aaaa"/><stop offset="0.9645" stop-color="#7e7c7a"/><stop offset="1.0000" stop-color="#6a6460"/></linearGradient><rect x="1677" y="206" width="12.6" height="122.2" fill="url(#sk94)"/><linearGradient id="sk95" x1="0" y1="206" x2="0" y2="328.0" gradientUnits="userSpaceOnUse"><stop offset="0.0000" stop-color="#b2d3f2"/><stop offset="0.2787" stop-color="#c8e8fa"/><stop offset="0.4590" stop-color="#d8f4fc"/><stop offset="0.6474" stop-color="#ecfdfd"/><stop offset="0.7621" stop-color="#e2f6f6"/><stop offset="0.8335" stop-color="#c6d6d6"/><stop offset="0.9049" stop-color="#a2aaaa"/><stop offset="0.9643" stop-color="#7e7c7a"/><stop offset="1.0000" stop-color="#6a6460"/></linearGradient><rect x="1689" y="206" width="12.6" height="122.5" fill="url(#sk95)"/><linearGradient id="sk96" x1="0" y1="206" x2="0" y2="328.3" gradientUnits="userSpaceOnUse"><stop offset="0.0000" stop-color="#b2d3f2"/><stop offset="0.2779" stop-color="#c8e8fa"/><stop offset="0.4578" stop-color="#d8f4fc"/><stop offset="0.6463" stop-color="#ecfdfd"/><stop offset="0.7607" stop-color="#e2f6f6"/><stop offset="0.8325" stop-color="#c6d6d6"/><stop offset="0.9043" stop-color="#a2aaaa"/><stop offset="0.9641" stop-color="#7e7c7a"/><stop offset="1.0000" stop-color="#6a6460"/></linearGradient><rect x="1701" y="206" width="12.6" height="122.8" fill="url(#sk96)"/><linearGradient id="sk97" x1="0" y1="206" x2="0" y2="328.7" gradientUnits="userSpaceOnUse"><stop offset="0.0000" stop-color="#b2d3f2"/><stop offset="0.2771" stop-color="#c8e8fa"/><stop offset="0.4565" stop-color="#d8f4fc"/><stop offset="0.6452" stop-color="#ecfdfd"/><stop offset="0.7593" stop-color="#e2f6f6"/><stop offset="0.8315" stop-color="#c6d6d6"/><stop offset="0.9037" stop-color="#a2aaaa"/><stop offset="0.9639" stop-color="#7e7c7a"/><stop offset="1.0000" stop-color="#6a6460"/></linearGradient><rect x="1713" y="206" width="12.6" height="123.2" fill="url(#sk97)"/><linearGradient id="sk98" x1="0" y1="206" x2="0" y2="329.0" gradientUnits="userSpaceOnUse"><stop offset="0.0000" stop-color="#b2d3f2"/><stop offset="0.2763" stop-color="#c8e8fa"/><stop offset="0.4551" stop-color="#d8f4fc"/><stop offset="0.6440" stop-color="#ecfdfd"/><stop offset="0.7578" stop-color="#e2f6f6"/><stop offset="0.8305" stop-color="#c6d6d6"/><stop offset="0.9031" stop-color="#a2aaaa"/><stop offset="0.9637" stop-color="#7e7c7a"/><stop offset="1.0000" stop-color="#6a6460"/></linearGradient><rect x="1725" y="206" width="12.6" height="123.5" fill="url(#sk98)"/><linearGradient id="sk99" x1="0" y1="206" x2="0" y2="329.4" gradientUnits="userSpaceOnUse"><stop offset="0.0000" stop-color="#b2d3f2"/><stop offset="0.2755" stop-color="#c8e8fa"/><stop offset="0.4538" stop-color="#d8f4fc"/><stop offset="0.6428" stop-color="#ecfdfd"/><stop offset="0.7562" stop-color="#e2f6f6"/><stop offset="0.8294" stop-color="#c6d6d6"/><stop offset="0.9025" stop-color="#a2aaaa"/><stop offset="0.9634" stop-color="#7e7c7a"/><stop offset="1.0000" stop-color="#6a6460"/></linearGradient><rect x="1737" y="206" width="12.6" height="123.9" fill="url(#sk99)"/><linearGradient id="sk100" x1="0" y1="206" x2="0" y2="329.8" gradientUnits="userSpaceOnUse"><stop offset="0.0000" stop-color="#b2d3f2"/><stop offset="0.2746" stop-color="#c8e8fa"/><stop offset="0.4524" stop-color="#d8f4fc"/><stop offset="0.6416" stop-color="#ecfdfd"/><stop offset="0.7547" stop-color="#e2f6f6"/><stop offset="0.8283" stop-color="#c6d6d6"/><stop offset="0.9019" stop-color="#a2aaaa"/><stop offset="0.9632" stop-color="#7e7c7a"/><stop offset="1.0000" stop-color="#6a6460"/></linearGradient><rect x="1749" y="206" width="12.6" height="124.3" fill="url(#sk100)"/><linearGradient id="sk101" x1="0" y1="206" x2="0" y2="330.2" gradientUnits="userSpaceOnUse"><stop offset="0.0000" stop-color="#b2d3f2"/><stop offset="0.2738" stop-color="#c8e8fa"/><stop offset="0.4509" stop-color="#d8f4fc"/><stop offset="0.6403" stop-color="#ecfdfd"/><stop offset="0.7530" stop-color="#e2f6f6"/><stop offset="0.8271" stop-color="#c6d6d6"/><stop offset="0.9012" stop-color="#a2aaaa"/><stop offset="0.9630" stop-color="#7e7c7a"/><stop offset="1.0000" stop-color="#6a6460"/></linearGradient><rect x="1761" y="206" width="12.6" height="124.7" fill="url(#sk101)"/><linearGradient id="sk102" x1="0" y1="206" x2="0" y2="330.6" gradientUnits="userSpaceOnUse"><stop offset="0.0000" stop-color="#b2d3f2"/><stop offset="0.2729" stop-color="#c8e8fa"/><stop offset="0.4494" stop-color="#d8f4fc"/><stop offset="0.6390" stop-color="#ecfdfd"/><stop offset="0.7514" stop-color="#e2f6f6"/><stop offset="0.8259" stop-color="#c6d6d6"/><stop offset="0.9005" stop-color="#a2aaaa"/><stop offset="0.9627" stop-color="#7e7c7a"/><stop offset="1.0000" stop-color="#6a6460"/></linearGradient><rect x="1773" y="206" width="12.6" height="125.1" fill="url(#sk102)"/><linearGradient id="sk103" x1="0" y1="206" x2="0" y2="331.0" gradientUnits="userSpaceOnUse"><stop offset="0.0000" stop-color="#b2d3f2"/><stop offset="0.2719" stop-color="#c8e8fa"/><stop offset="0.4479" stop-color="#d8f4fc"/><stop offset="0.6377" stop-color="#ecfdfd"/><stop offset="0.7496" stop-color="#e2f6f6"/><stop offset="0.8247" stop-color="#c6d6d6"/><stop offset="0.8999" stop-color="#a2aaaa"/><stop offset="0.9624" stop-color="#7e7c7a"/><stop offset="1.0000" stop-color="#6a6460"/></linearGradient><rect x="1785" y="206" width="12.6" height="125.5" fill="url(#sk103)"/><linearGradient id="sk104" x1="0" y1="206" x2="0" y2="331.5" gradientUnits="userSpaceOnUse"><stop offset="0.0000" stop-color="#b2d3f2"/><stop offset="0.2710" stop-color="#c8e8fa"/><stop offset="0.4463" stop-color="#d8f4fc"/><stop offset="0.6363" stop-color="#ecfdfd"/><stop offset="0.7479" stop-color="#e2f6f6"/><stop offset="0.8235" stop-color="#c6d6d6"/><stop offset="0.8991" stop-color="#a2aaaa"/><stop offset="0.9622" stop-color="#7e7c7a"/><stop offset="1.0000" stop-color="#6a6460"/></linearGradient><rect x="1797" y="206" width="12.6" height="126.0" fill="url(#sk104)"/><linearGradient id="sk105" x1="0" y1="206" x2="0" y2="331.9" gradientUnits="userSpaceOnUse"><stop offset="0.0000" stop-color="#b2d3f2"/><stop offset="0.2700" stop-color="#c8e8fa"/><stop offset="0.4447" stop-color="#d8f4fc"/><stop offset="0.6349" stop-color="#ecfdfd"/><stop offset="0.7461" stop-color="#e2f6f6"/><stop offset="0.8223" stop-color="#c6d6d6"/><stop offset="0.8984" stop-color="#a2aaaa"/><stop offset="0.9619" stop-color="#7e7c7a"/><stop offset="1.0000" stop-color="#6a6460"/></linearGradient><rect x="1809" y="206" width="12.6" height="126.4" fill="url(#sk105)"/><linearGradient id="sk106" x1="0" y1="206" x2="0" y2="332.4" gradientUnits="userSpaceOnUse"><stop offset="0.0000" stop-color="#b2d3f2"/><stop offset="0.2690" stop-color="#c8e8fa"/><stop offset="0.4431" stop-color="#d8f4fc"/><stop offset="0.6335" stop-color="#ecfdfd"/><stop offset="0.7442" stop-color="#e2f6f6"/><stop offset="0.8210" stop-color="#c6d6d6"/><stop offset="0.8977" stop-color="#a2aaaa"/><stop offset="0.9616" stop-color="#7e7c7a"/><stop offset="1.0000" stop-color="#6a6460"/></linearGradient><rect x="1821" y="206" width="12.6" height="126.9" fill="url(#sk106)"/><linearGradient id="sk107" x1="0" y1="206" x2="0" y2="332.9" gradientUnits="userSpaceOnUse"><stop offset="0.0000" stop-color="#b2d3f2"/><stop offset="0.2680" stop-color="#c8e8fa"/><stop offset="0.4414" stop-color="#d8f4fc"/><stop offset="0.6320" stop-color="#ecfdfd"/><stop offset="0.7424" stop-color="#e2f6f6"/><stop offset="0.8196" stop-color="#c6d6d6"/><stop offset="0.8969" stop-color="#a2aaaa"/><stop offset="0.9614" stop-color="#7e7c7a"/><stop offset="1.0000" stop-color="#6a6460"/></linearGradient><rect x="1833" y="206" width="12.6" height="127.4" fill="url(#sk107)"/><linearGradient id="sk108" x1="0" y1="206" x2="0" y2="333.4" gradientUnits="userSpaceOnUse"><stop offset="0.0000" stop-color="#b2d3f2"/><stop offset="0.2670" stop-color="#c8e8fa"/><stop offset="0.4397" stop-color="#d8f4fc"/><stop offset="0.6305" stop-color="#ecfdfd"/><stop offset="0.7404" stop-color="#e2f6f6"/><stop offset="0.8183" stop-color="#c6d6d6"/><stop offset="0.8962" stop-color="#a2aaaa"/><stop offset="0.9611" stop-color="#7e7c7a"/><stop offset="1.0000" stop-color="#6a6460"/></linearGradient><rect x="1845" y="206" width="12.6" height="127.9" fill="url(#sk108)"/><linearGradient id="sk109" x1="0" y1="206" x2="0" y2="333.9" gradientUnits="userSpaceOnUse"><stop offset="0.0000" stop-color="#b2d3f2"/><stop offset="0.2659" stop-color="#c8e8fa"/><stop offset="0.4380" stop-color="#d8f4fc"/><stop offset="0.6290" stop-color="#ecfdfd"/><stop offset="0.7385" stop-color="#e2f6f6"/><stop offset="0.8169" stop-color="#c6d6d6"/><stop offset="0.8954" stop-color="#a2aaaa"/><stop offset="0.9608" stop-color="#7e7c7a"/><stop offset="1.0000" stop-color="#6a6460"/></linearGradient><rect x="1857" y="206" width="12.6" height="128.4" fill="url(#sk109)"/><linearGradient id="sk110" x1="0" y1="206" x2="0" y2="334.4" gradientUnits="userSpaceOnUse"><stop offset="0.0000" stop-color="#b2d3f2"/><stop offset="0.2648" stop-color="#c8e8fa"/><stop offset="0.4362" stop-color="#d8f4fc"/><stop offset="0.6274" stop-color="#ecfdfd"/><stop offset="0.7365" stop-color="#e2f6f6"/><stop offset="0.8155" stop-color="#c6d6d6"/><stop offset="0.8946" stop-color="#a2aaaa"/><stop offset="0.9605" stop-color="#7e7c7a"/><stop offset="1.0000" stop-color="#6a6460"/></linearGradient><rect x="1869" y="206" width="12.6" height="128.9" fill="url(#sk110)"/><linearGradient id="sk111" x1="0" y1="206" x2="0" y2="334.9" gradientUnits="userSpaceOnUse"><stop offset="0.0000" stop-color="#b2d3f2"/><stop offset="0.2638" stop-color="#c8e8fa"/><stop offset="0.4344" stop-color="#d8f4fc"/><stop offset="0.6259" stop-color="#ecfdfd"/><stop offset="0.7345" stop-color="#e2f6f6"/><stop offset="0.8141" stop-color="#c6d6d6"/><stop offset="0.8938" stop-color="#a2aaaa"/><stop offset="0.9602" stop-color="#7e7c7a"/><stop offset="1.0000" stop-color="#6a6460"/></linearGradient><rect x="1881" y="206" width="12.6" height="129.4" fill="url(#sk111)"/><linearGradient id="sk112" x1="0" y1="206" x2="0" y2="335.5" gradientUnits="userSpaceOnUse"><stop offset="0.0000" stop-color="#b2d3f2"/><stop offset="0.2626" stop-color="#c8e8fa"/><stop offset="0.4326" stop-color="#d8f4fc"/><stop offset="0.6243" stop-color="#ecfdfd"/><stop offset="0.7324" stop-color="#e2f6f6"/><stop offset="0.8127" stop-color="#c6d6d6"/><stop offset="0.8930" stop-color="#a2aaaa"/><stop offset="0.9599" stop-color="#7e7c7a"/><stop offset="1.0000" stop-color="#6a6460"/></linearGradient><rect x="1893" y="206" width="12.6" height="130.0" fill="url(#sk112)"/><linearGradient id="sk113" x1="0" y1="206" x2="0" y2="336.0" gradientUnits="userSpaceOnUse"><stop offset="0.0000" stop-color="#b2d3f2"/><stop offset="0.2615" stop-color="#c8e8fa"/><stop offset="0.4307" stop-color="#d8f4fc"/><stop offset="0.6227" stop-color="#ecfdfd"/><stop offset="0.7303" stop-color="#e2f6f6"/><stop offset="0.8112" stop-color="#c6d6d6"/><stop offset="0.8921" stop-color="#a2aaaa"/><stop offset="0.9596" stop-color="#7e7c7a"/><stop offset="1.0000" stop-color="#6a6460"/></linearGradient><rect x="1905" y="206" width="12.6" height="130.5" fill="url(#sk113)"/><linearGradient id="sk114" x1="0" y1="206" x2="0" y2="336.6" gradientUnits="userSpaceOnUse"><stop offset="0.0000" stop-color="#b2d3f2"/><stop offset="0.2604" stop-color="#c8e8fa"/><stop offset="0.4288" stop-color="#d8f4fc"/><stop offset="0.6210" stop-color="#ecfdfd"/><stop offset="0.7282" stop-color="#e2f6f6"/><stop offset="0.8098" stop-color="#c6d6d6"/><stop offset="0.8913" stop-color="#a2aaaa"/><stop offset="0.9592" stop-color="#7e7c7a"/><stop offset="1.0000" stop-color="#6a6460"/></linearGradient><rect x="1917" y="206" width="12.6" height="131.1" fill="url(#sk114)"/><linearGradient id="sk115" x1="0" y1="206" x2="0" y2="337.2" gradientUnits="userSpaceOnUse"><stop offset="0.0000" stop-color="#b2d3f2"/><stop offset="0.2592" stop-color="#c8e8fa"/><stop offset="0.4269" stop-color="#d8f4fc"/><stop offset="0.6193" stop-color="#ecfdfd"/><stop offset="0.7261" stop-color="#e2f6f6"/><stop offset="0.8082" stop-color="#c6d6d6"/><stop offset="0.8904" stop-color="#a2aaaa"/><stop offset="0.9589" stop-color="#7e7c7a"/><stop offset="1.0000" stop-color="#6a6460"/></linearGradient><rect x="1929" y="206" width="12.6" height="131.7" fill="url(#sk115)"/><linearGradient id="sk116" x1="0" y1="206" x2="0" y2="337.8" gradientUnits="userSpaceOnUse"><stop offset="0.0000" stop-color="#b2d3f2"/><stop offset="0.2580" stop-color="#c8e8fa"/><stop offset="0.4250" stop-color="#d8f4fc"/><stop offset="0.6176" stop-color="#ecfdfd"/><stop offset="0.7239" stop-color="#e2f6f6"/><stop offset="0.8067" stop-color="#c6d6d6"/><stop offset="0.8896" stop-color="#a2aaaa"/><stop offset="0.9586" stop-color="#7e7c7a"/><stop offset="1.0000" stop-color="#6a6460"/></linearGradient><rect x="1941" y="206" width="12.6" height="132.3" fill="url(#sk116)"/><linearGradient id="sk117" x1="0" y1="206" x2="0" y2="338.4" gradientUnits="userSpaceOnUse"><stop offset="0.0000" stop-color="#b2d3f2"/><stop offset="0.2568" stop-color="#c8e8fa"/><stop offset="0.4230" stop-color="#d8f4fc"/><stop offset="0.6159" stop-color="#ecfdfd"/><stop offset="0.7217" stop-color="#e2f6f6"/><stop offset="0.8052" stop-color="#c6d6d6"/><stop offset="0.8887" stop-color="#a2aaaa"/><stop offset="0.9583" stop-color="#7e7c7a"/><stop offset="1.0000" stop-color="#6a6460"/></linearGradient><rect x="1953" y="206" width="12.6" height="132.9" fill="url(#sk117)"/><linearGradient id="sk118" x1="0" y1="206" x2="0" y2="339.0" gradientUnits="userSpaceOnUse"><stop offset="0.0000" stop-color="#b2d3f2"/><stop offset="0.2556" stop-color="#c8e8fa"/><stop offset="0.4211" stop-color="#d8f4fc"/><stop offset="0.6142" stop-color="#ecfdfd"/><stop offset="0.7195" stop-color="#e2f6f6"/><stop offset="0.8036" stop-color="#c6d6d6"/><stop offset="0.8878" stop-color="#a2aaaa"/><stop offset="0.9579" stop-color="#7e7c7a"/><stop offset="1.0000" stop-color="#6a6460"/></linearGradient><rect x="1965" y="206" width="12.6" height="133.5" fill="url(#sk118)"/><linearGradient id="sk119" x1="0" y1="206" x2="0" y2="339.6" gradientUnits="userSpaceOnUse"><stop offset="0.0000" stop-color="#b2d3f2"/><stop offset="0.2544" stop-color="#c8e8fa"/><stop offset="0.4191" stop-color="#d8f4fc"/><stop offset="0.6124" stop-color="#ecfdfd"/><stop offset="0.7172" stop-color="#e2f6f6"/><stop offset="0.8020" stop-color="#c6d6d6"/><stop offset="0.8869" stop-color="#a2aaaa"/><stop offset="0.9576" stop-color="#7e7c7a"/><stop offset="1.0000" stop-color="#6a6460"/></linearGradient><rect x="1977" y="206" width="12.6" height="134.1" fill="url(#sk119)"/><linearGradient id="sk120" x1="0" y1="206" x2="0" y2="340.3" gradientUnits="userSpaceOnUse"><stop offset="0.0000" stop-color="#b2d3f2"/><stop offset="0.2532" stop-color="#c8e8fa"/><stop offset="0.4170" stop-color="#d8f4fc"/><stop offset="0.6107" stop-color="#ecfdfd"/><stop offset="0.7149" stop-color="#e2f6f6"/><stop offset="0.8004" stop-color="#c6d6d6"/><stop offset="0.8860" stop-color="#a2aaaa"/><stop offset="0.9572" stop-color="#7e7c7a"/><stop offset="1.0000" stop-color="#6a6460"/></linearGradient><rect x="1989" y="206" width="12.6" height="134.8" fill="url(#sk120)"/><linearGradient id="sk121" x1="0" y1="206" x2="0" y2="340.9" gradientUnits="userSpaceOnUse"><stop offset="0.0000" stop-color="#b2d3f2"/><stop offset="0.2519" stop-color="#c8e8fa"/><stop offset="0.4150" stop-color="#d8f4fc"/><stop offset="0.6089" stop-color="#ecfdfd"/><stop offset="0.7126" stop-color="#e2f6f6"/><stop offset="0.7988" stop-color="#c6d6d6"/><stop offset="0.8850" stop-color="#a2aaaa"/><stop offset="0.9569" stop-color="#7e7c7a"/><stop offset="1.0000" stop-color="#6a6460"/></linearGradient><rect x="2001" y="206" width="12.6" height="135.4" fill="url(#sk121)"/><linearGradient id="sk122" x1="0" y1="206" x2="0" y2="341.6" gradientUnits="userSpaceOnUse"><stop offset="0.0000" stop-color="#b2d3f2"/><stop offset="0.2507" stop-color="#c8e8fa"/><stop offset="0.4129" stop-color="#d8f4fc"/><stop offset="0.6071" stop-color="#ecfdfd"/><stop offset="0.7103" stop-color="#e2f6f6"/><stop offset="0.7972" stop-color="#c6d6d6"/><stop offset="0.8841" stop-color="#a2aaaa"/><stop offset="0.9565" stop-color="#7e7c7a"/><stop offset="1.0000" stop-color="#6a6460"/></linearGradient><rect x="2013" y="206" width="12.6" height="136.1" fill="url(#sk122)"/><linearGradient id="sk123" x1="0" y1="206" x2="0" y2="342.3" gradientUnits="userSpaceOnUse"><stop offset="0.0000" stop-color="#b2d3f2"/><stop offset="0.2494" stop-color="#c8e8fa"/><stop offset="0.4108" stop-color="#d8f4fc"/><stop offset="0.6052" stop-color="#ecfdfd"/><stop offset="0.7079" stop-color="#e2f6f6"/><stop offset="0.7956" stop-color="#c6d6d6"/><stop offset="0.8832" stop-color="#a2aaaa"/><stop offset="0.9562" stop-color="#7e7c7a"/><stop offset="1.0000" stop-color="#6a6460"/></linearGradient><rect x="2025" y="206" width="12.6" height="136.8" fill="url(#sk123)"/><linearGradient id="sk124" x1="0" y1="206" x2="0" y2="343.0" gradientUnits="userSpaceOnUse"><stop offset="0.0000" stop-color="#b2d3f2"/><stop offset="0.2481" stop-color="#c8e8fa"/><stop offset="0.4087" stop-color="#d8f4fc"/><stop offset="0.6034" stop-color="#ecfdfd"/><stop offset="0.7056" stop-color="#e2f6f6"/><stop offset="0.7939" stop-color="#c6d6d6"/><stop offset="0.8822" stop-color="#a2aaaa"/><stop offset="0.9558" stop-color="#7e7c7a"/><stop offset="1.0000" stop-color="#6a6460"/></linearGradient><rect x="2037" y="206" width="12.6" height="137.5" fill="url(#sk124)"/><linearGradient id="sk125" x1="0" y1="206" x2="0" y2="343.7" gradientUnits="userSpaceOnUse"><stop offset="0.0000" stop-color="#b2d3f2"/><stop offset="0.2469" stop-color="#c8e8fa"/><stop offset="0.4066" stop-color="#d8f4fc"/><stop offset="0.6015" stop-color="#ecfdfd"/><stop offset="0.7032" stop-color="#e2f6f6"/><stop offset="0.7922" stop-color="#c6d6d6"/><stop offset="0.8813" stop-color="#a2aaaa"/><stop offset="0.9555" stop-color="#7e7c7a"/><stop offset="1.0000" stop-color="#6a6460"/></linearGradient><rect x="2049" y="206" width="12.6" height="138.2" fill="url(#sk125)"/><linearGradient id="sk126" x1="0" y1="206" x2="0" y2="344.5" gradientUnits="userSpaceOnUse"><stop offset="0.0000" stop-color="#b2d3f2"/><stop offset="0.2455" stop-color="#c8e8fa"/><stop offset="0.4044" stop-color="#d8f4fc"/><stop offset="0.5996" stop-color="#ecfdfd"/><stop offset="0.7008" stop-color="#e2f6f6"/><stop offset="0.7905" stop-color="#c6d6d6"/><stop offset="0.8803" stop-color="#a2aaaa"/><stop offset="0.9551" stop-color="#7e7c7a"/><stop offset="1.0000" stop-color="#6a6460"/></linearGradient><rect x="2061" y="206" width="12.6" height="139.0" fill="url(#sk126)"/><linearGradient id="sk127" x1="0" y1="206" x2="0" y2="345.2" gradientUnits="userSpaceOnUse"><stop offset="0.0000" stop-color="#b2d3f2"/><stop offset="0.2442" stop-color="#c8e8fa"/><stop offset="0.4023" stop-color="#d8f4fc"/><stop offset="0.5978" stop-color="#ecfdfd"/><stop offset="0.6983" stop-color="#e2f6f6"/><stop offset="0.7888" stop-color="#c6d6d6"/><stop offset="0.8793" stop-color="#a2aaaa"/><stop offset="0.9547" stop-color="#7e7c7a"/><stop offset="1.0000" stop-color="#6a6460"/></linearGradient><rect x="2073" y="206" width="12.6" height="139.7" fill="url(#sk127)"/><linearGradient id="sk128" x1="0" y1="206" x2="0" y2="346.0" gradientUnits="userSpaceOnUse"><stop offset="0.0000" stop-color="#b2d3f2"/><stop offset="0.2429" stop-color="#c8e8fa"/><stop offset="0.4001" stop-color="#d8f4fc"/><stop offset="0.5959" stop-color="#ecfdfd"/><stop offset="0.6959" stop-color="#e2f6f6"/><stop offset="0.7871" stop-color="#c6d6d6"/><stop offset="0.8784" stop-color="#a2aaaa"/><stop offset="0.9544" stop-color="#7e7c7a"/><stop offset="1.0000" stop-color="#6a6460"/></linearGradient><rect x="2085" y="206" width="12.6" height="140.5" fill="url(#sk128)"/><linearGradient id="sk129" x1="0" y1="206" x2="0" y2="346.7" gradientUnits="userSpaceOnUse"><stop offset="0.0000" stop-color="#b2d3f2"/><stop offset="0.2416" stop-color="#c8e8fa"/><stop offset="0.3979" stop-color="#d8f4fc"/><stop offset="0.5939" stop-color="#ecfdfd"/><stop offset="0.6934" stop-color="#e2f6f6"/><stop offset="0.7854" stop-color="#c6d6d6"/><stop offset="0.8774" stop-color="#a2aaaa"/><stop offset="0.9540" stop-color="#7e7c7a"/><stop offset="1.0000" stop-color="#6a6460"/></linearGradient><rect x="2097" y="206" width="12.6" height="141.2" fill="url(#sk129)"/><linearGradient id="sk130" x1="0" y1="206" x2="0" y2="347.5" gradientUnits="userSpaceOnUse"><stop offset="0.0000" stop-color="#b2d3f2"/><stop offset="0.2403" stop-color="#c8e8fa"/><stop offset="0.3957" stop-color="#d8f4fc"/><stop offset="0.5920" stop-color="#ecfdfd"/><stop offset="0.6909" stop-color="#e2f6f6"/><stop offset="0.7837" stop-color="#c6d6d6"/><stop offset="0.8764" stop-color="#a2aaaa"/><stop offset="0.9536" stop-color="#7e7c7a"/><stop offset="1.0000" stop-color="#6a6460"/></linearGradient><rect x="2109" y="206" width="12.6" height="142.0" fill="url(#sk130)"/><linearGradient id="sk131" x1="0" y1="206" x2="0" y2="348.3" gradientUnits="userSpaceOnUse"><stop offset="0.0000" stop-color="#b2d3f2"/><stop offset="0.2389" stop-color="#c8e8fa"/><stop offset="0.3935" stop-color="#d8f4fc"/><stop offset="0.5901" stop-color="#ecfdfd"/><stop offset="0.6885" stop-color="#e2f6f6"/><stop offset="0.7819" stop-color="#c6d6d6"/><stop offset="0.8754" stop-color="#a2aaaa"/><stop offset="0.9533" stop-color="#7e7c7a"/><stop offset="1.0000" stop-color="#6a6460"/></linearGradient><rect x="2121" y="206" width="12.6" height="142.8" fill="url(#sk131)"/><linearGradient id="sk132" x1="0" y1="206" x2="0" y2="349.1" gradientUnits="userSpaceOnUse"><stop offset="0.0000" stop-color="#b2d3f2"/><stop offset="0.2376" stop-color="#c8e8fa"/><stop offset="0.3913" stop-color="#d8f4fc"/><stop offset="0.5881" stop-color="#ecfdfd"/><stop offset="0.6860" stop-color="#e2f6f6"/><stop offset="0.7802" stop-color="#c6d6d6"/><stop offset="0.8744" stop-color="#a2aaaa"/><stop offset="0.9529" stop-color="#7e7c7a"/><stop offset="1.0000" stop-color="#6a6460"/></linearGradient><rect x="2133" y="206" width="12.6" height="143.6" fill="url(#sk132)"/><linearGradient id="sk133" x1="0" y1="206" x2="0" y2="349.9" gradientUnits="userSpaceOnUse"><stop offset="0.0000" stop-color="#b2d3f2"/><stop offset="0.2362" stop-color="#c8e8fa"/><stop offset="0.3890" stop-color="#d8f4fc"/><stop offset="0.5862" stop-color="#ecfdfd"/><stop offset="0.6834" stop-color="#e2f6f6"/><stop offset="0.7784" stop-color="#c6d6d6"/><stop offset="0.8734" stop-color="#a2aaaa"/><stop offset="0.9525" stop-color="#7e7c7a"/><stop offset="1.0000" stop-color="#6a6460"/></linearGradient><rect x="2145" y="206" width="12.6" height="144.4" fill="url(#sk133)"/><linearGradient id="sk134" x1="0" y1="206" x2="0" y2="350.8" gradientUnits="userSpaceOnUse"><stop offset="0.0000" stop-color="#b2d3f2"/><stop offset="0.2348" stop-color="#c8e8fa"/><stop offset="0.3868" stop-color="#d8f4fc"/><stop offset="0.5842" stop-color="#ecfdfd"/><stop offset="0.6809" stop-color="#e2f6f6"/><stop offset="0.7766" stop-color="#c6d6d6"/><stop offset="0.8724" stop-color="#a2aaaa"/><stop offset="0.9521" stop-color="#7e7c7a"/><stop offset="1.0000" stop-color="#6a6460"/></linearGradient><rect x="2157" y="206" width="12.6" height="145.3" fill="url(#sk134)"/><linearGradient id="sk135" x1="0" y1="206" x2="0" y2="351.6" gradientUnits="userSpaceOnUse"><stop offset="0.0000" stop-color="#b2d3f2"/><stop offset="0.2335" stop-color="#c8e8fa"/><stop offset="0.3845" stop-color="#d8f4fc"/><stop offset="0.5822" stop-color="#ecfdfd"/><stop offset="0.6784" stop-color="#e2f6f6"/><stop offset="0.7749" stop-color="#c6d6d6"/><stop offset="0.8713" stop-color="#a2aaaa"/><stop offset="0.9518" stop-color="#7e7c7a"/><stop offset="1.0000" stop-color="#6a6460"/></linearGradient><rect x="2169" y="206" width="12.6" height="146.1" fill="url(#sk135)"/><linearGradient id="sk136" x1="0" y1="206" x2="0" y2="352.5" gradientUnits="userSpaceOnUse"><stop offset="0.0000" stop-color="#b2d3f2"/><stop offset="0.2321" stop-color="#c8e8fa"/><stop offset="0.3823" stop-color="#d8f4fc"/><stop offset="0.5803" stop-color="#ecfdfd"/><stop offset="0.6758" stop-color="#e2f6f6"/><stop offset="0.7731" stop-color="#c6d6d6"/><stop offset="0.8703" stop-color="#a2aaaa"/><stop offset="0.9514" stop-color="#7e7c7a"/><stop offset="1.0000" stop-color="#6a6460"/></linearGradient><rect x="2181" y="206" width="12.6" height="147.0" fill="url(#sk136)"/><linearGradient id="sk137" x1="0" y1="206" x2="0" y2="353.4" gradientUnits="userSpaceOnUse"><stop offset="0.0000" stop-color="#b2d3f2"/><stop offset="0.2307" stop-color="#c8e8fa"/><stop offset="0.3800" stop-color="#d8f4fc"/><stop offset="0.5783" stop-color="#ecfdfd"/><stop offset="0.6733" stop-color="#e2f6f6"/><stop offset="0.7713" stop-color="#c6d6d6"/><stop offset="0.8693" stop-color="#a2aaaa"/><stop offset="0.9510" stop-color="#7e7c7a"/><stop offset="1.0000" stop-color="#6a6460"/></linearGradient><rect x="2193" y="206" width="12.6" height="147.9" fill="url(#sk137)"/><linearGradient id="sk138" x1="0" y1="206" x2="0" y2="354.3" gradientUnits="userSpaceOnUse"><stop offset="0.0000" stop-color="#b2d3f2"/><stop offset="0.2293" stop-color="#c8e8fa"/><stop offset="0.3777" stop-color="#d8f4fc"/><stop offset="0.5763" stop-color="#ecfdfd"/><stop offset="0.6707" stop-color="#e2f6f6"/><stop offset="0.7695" stop-color="#c6d6d6"/><stop offset="0.8683" stop-color="#a2aaaa"/><stop offset="0.9506" stop-color="#7e7c7a"/><stop offset="1.0000" stop-color="#6a6460"/></linearGradient><rect x="2205" y="206" width="12.6" height="148.8" fill="url(#sk138)"/><linearGradient id="sk139" x1="0" y1="206" x2="0" y2="355.2" gradientUnits="userSpaceOnUse"><stop offset="0.0000" stop-color="#b2d3f2"/><stop offset="0.2279" stop-color="#c8e8fa"/><stop offset="0.3754" stop-color="#d8f4fc"/><stop offset="0.5743" stop-color="#ecfdfd"/><stop offset="0.6681" stop-color="#e2f6f6"/><stop offset="0.7677" stop-color="#c6d6d6"/><stop offset="0.8673" stop-color="#a2aaaa"/><stop offset="0.9502" stop-color="#7e7c7a"/><stop offset="1.0000" stop-color="#6a6460"/></linearGradient><rect x="2217" y="206" width="12.6" height="149.7" fill="url(#sk139)"/><linearGradient id="sk140" x1="0" y1="206" x2="0" y2="356.1" gradientUnits="userSpaceOnUse"><stop offset="0.0000" stop-color="#b2d3f2"/><stop offset="0.2266" stop-color="#c8e8fa"/><stop offset="0.3732" stop-color="#d8f4fc"/><stop offset="0.5723" stop-color="#ecfdfd"/><stop offset="0.6656" stop-color="#e2f6f6"/><stop offset="0.7659" stop-color="#c6d6d6"/><stop offset="0.8662" stop-color="#a2aaaa"/><stop offset="0.9498" stop-color="#7e7c7a"/><stop offset="1.0000" stop-color="#6a6460"/></linearGradient><rect x="2229" y="206" width="12.6" height="150.6" fill="url(#sk140)"/><linearGradient id="sk141" x1="0" y1="206" x2="0" y2="357.0" gradientUnits="userSpaceOnUse"><stop offset="0.0000" stop-color="#b2d3f2"/><stop offset="0.2252" stop-color="#c8e8fa"/><stop offset="0.3709" stop-color="#d8f4fc"/><stop offset="0.5703" stop-color="#ecfdfd"/><stop offset="0.6630" stop-color="#e2f6f6"/><stop offset="0.7641" stop-color="#c6d6d6"/><stop offset="0.8652" stop-color="#a2aaaa"/><stop offset="0.9494" stop-color="#7e7c7a"/><stop offset="1.0000" stop-color="#6a6460"/></linearGradient><rect x="2241" y="206" width="12.6" height="151.5" fill="url(#sk141)"/><linearGradient id="sk142" x1="0" y1="206" x2="0" y2="357.8" gradientUnits="userSpaceOnUse"><stop offset="0.0000" stop-color="#b2d3f2"/><stop offset="0.2239" stop-color="#c8e8fa"/><stop offset="0.3688" stop-color="#d8f4fc"/><stop offset="0.5685" stop-color="#ecfdfd"/><stop offset="0.6607" stop-color="#e2f6f6"/><stop offset="0.7625" stop-color="#c6d6d6"/><stop offset="0.8643" stop-color="#a2aaaa"/><stop offset="0.9491" stop-color="#7e7c7a"/><stop offset="1.0000" stop-color="#6a6460"/></linearGradient><rect x="2253" y="206" width="9.6" height="152.3" fill="url(#sk142)"/><rect x="549" y="206" width="1713" height="130" fill="url(#skyr)" mask="url(#skym)"/><path d="M1256 490L1707 485L2262 825L2262 885L1000 885Z" fill="#8dfb97"/><clipPath id="pclip"><path d="M1256 490L1707 485L2262 825L2262 885L1000 885Z"/></clipPath><g clip-path="url(#pclip)" stroke="#76b47e" stroke-width="1.1" stroke-opacity="0.75" fill="none"><path d="M1000 532L2262 518"/><path d="M1000 600L2262 586"/><path d="M1000 715L2262 701"/><path d="M1385.5 286.0L1340.0 885"/><path d="M1385.5 286.0L1674.7 885"/><path d="M1385.5 286.0L2009.5 885"/></g><ellipse cx="1335" cy="552" rx="22" ry="18" fill="url(#glow)" opacity="0.7"/><path d="M1329 547h11l-5 9Z" fill="#ffd27a"/><path d="M1358 536L1366 540L1393 558L1357 556Z" fill="#4c8a58"/><path d="M1366 520L1445 541L1449 558L1393 558L1361 550Z" fill="#ffffff"/><path d="M1363 538L1449 558L1393 558L1361 550Z" fill="#f2f7fa"/><path d="M1366 520L1361 550L1363 538Z" fill="#f09ac0"/><path d="M1361.5 526L1366 520L1363 548L1361 550Z" fill="#f0a0c8"/><path d="M1412 573L1418 564L1422 619L1416 614Z" fill="#4c8a58"/><path d="M1418 564L1485 563L1497 601L1497 618L1422 619Z" fill="#ffffff"/><path d="M1422 602L1497 601L1497 618L1422 619Z" fill="#f3f7f8"/><ellipse cx="1505" cy="553" rx="11" ry="6" fill="#4c8a58"/><circle cx="1520.5" cy="544.5" r="15.3" fill="url(#wsph)"/><ellipse cx="1523" cy="590" rx="6" ry="8" fill="#4c8a58"/><rect x="1522" y="566" width="23" height="8" fill="#f04035"/><path d="M1527 577H1546L1548.5 583V600H1531L1527 593Z" fill="#f04035"/><path d="M1527 578L1530 581V600L1527 594Z" fill="#a82020"/><ellipse cx="1590" cy="559" rx="8" ry="3.5" fill="#4c8a58" transform="rotate(12 1590 559)"/><circle cx="1602" cy="549.5" r="8" fill="url(#ysph)"/><ellipse cx="1612" cy="588" rx="9" ry="4" fill="#4c8a58" transform="rotate(15 1612 588)"/><circle cx="1626" cy="578.5" r="8.8" fill="url(#psph)"/><ellipse cx="1565" cy="631" rx="10" ry="5" fill="#4c8a58" transform="rotate(15 1565 631)"/><circle cx="1579" cy="621.5" r="10" fill="url(#bsph)"/></svg>
<div class="a" style="left:553px;top:210px;width:76px;height:291px;background:#1e1e1e;border-radius:7px;"></div>
<div class="a" style="left:575px;top:221px;width:32px;height:2.5px;background:#6a6a6a;border-radius:0px;"></div>
<div class="a" style="left:575px;top:228px;width:32px;height:2.5px;background:#6a6a6a;border-radius:0px;"></div>
<div class="a" style="left:559px;top:245px;width:64px;height:40px;background:#585858;border-radius:0px;border-radius:6px 6px 0 0"></div>
<div class="a" style="left:559px;top:287px;width:64px;height:40px;background:#3f5b7d;border-radius:0px;"></div>
<div class="a" style="left:559px;top:329px;width:64px;height:40px;background:#585858;border-radius:0px;"></div>
<div class="a" style="left:559px;top:371px;width:64px;height:40px;background:#585858;border-radius:0px;"></div>
<div class="a" style="left:559px;top:413px;width:64px;height:40px;background:#585858;border-radius:0px;"></div>
<div class="a" style="left:559px;top:455px;width:64px;height:40px;background:#585858;border-radius:0px;border-radius:0 0 6px 6px"></div>
<svg class="a" style="left:577px;top:248px;" width="30" height="32" viewBox="0 0 30 32"><path d="M5 16L23.5 14L25 20L20.5 31H9.5L3 20Z" fill="#c8c8c8"/><path d="M6.5 4.5L8 17M14.7 2.3V16M21.2 4.8L19.5 17M26.8 10.5L22.5 21M2 14.5L7 23" stroke="#c8c8c8" stroke-width="3.6" stroke-linecap="round"/></svg>
<svg class="a" style="left:575px;top:291px;" width="32" height="32" viewBox="0 0 32 32"><path d="M16 2.5v11M16 18.5v11M2.5 16h11M18.5 16h11" stroke="#f0f0f0" stroke-width="2"/><path d="M11 7.5L16 2.5l5 5M11 24.5L16 29.5l5-5M7.5 11L2.5 16l5 5M24.5 11L29.5 16l-5 5" fill="none" stroke="#f0f0f0" stroke-width="2"/></svg>
<svg class="a" style="left:577px;top:334px;" width="30" height="30" viewBox="0 0 30 30"><path d="M14.7 1.3A13.5 13.5 0 0 0 8.5 26M14.7 28.3A13.5 13.5 0 0 0 19.5 1.8" fill="none" stroke="#c8c8c8" stroke-width="2"/><path d="M1 28.3H9.5V19M19.4 10.4V0.9H28.6" fill="none" stroke="#c8c8c8" stroke-width="2"/></svg>
<svg class="a" style="left:575px;top:376px;" width="32" height="30" viewBox="0 0 32 30"><rect x="2" y="2" width="27" height="27" fill="none" stroke="#c8c8c8" stroke-width="2.2"/><path d="M2 21h8v8" fill="none" stroke="#c8c8c8" stroke-width="2.2"/><path d="M13 18L24 7M16 7h8v8" fill="none" stroke="#c8c8c8" stroke-width="2.2"/></svg>
<svg class="a" style="left:576px;top:418px;" width="30" height="30" viewBox="0 0 30 30"><rect x="1" y="1" width="7" height="7" fill="#c8c8c8"/><rect x="22" y="1" width="7" height="7" fill="#c8c8c8"/><rect x="1" y="22" width="7" height="7" fill="#c8c8c8"/><rect x="22" y="22" width="7" height="7" fill="#c8c8c8"/><path d="M10 4.5h10M10 25.5h10M4.5 10v10M25.5 10v10" stroke="#c8c8c8" stroke-width="2"/></svg>
<svg class="a" style="left:575px;top:459px;" width="32" height="32" viewBox="0 0 32 32"><circle cx="16" cy="16" r="11.5" fill="none" stroke="#c8c8c8" stroke-width="2" stroke-dasharray="10 3"/><path d="M16 6v20M6 16h20M12.5 9.5L16 6l3.5 3.5M12.5 22.5L16 26l3.5-3.5M9.5 12.5L6 16l3.5 3.5M22.5 12.5L26 16l-3.5 3.5" fill="none" stroke="#c8c8c8" stroke-width="2"/><path d="M24 1h7v7Z" fill="#c8c8c8"/><path d="M1 31V24l7 7Z" fill="#c8c8c8"/></svg>
<div class="a" style="left:2048px;top:222px;width:32px;height:2.5px;background:#4a4a4a;border-radius:0px;"></div>
<div class="a" style="left:2048px;top:228.5px;width:32px;height:2.5px;background:#4a4a4a;border-radius:0px;"></div>
<svg class="a" style="left:2080px;top:220px" width="160" height="150" viewBox="2080 220 160 150"><defs><linearGradient id="gc" x1="0" x2="1"><stop offset="0" stop-color="#2e8a2e"/><stop offset="0.5" stop-color="#8ad850"/><stop offset="1" stop-color="#2e7a2e"/></linearGradient><linearGradient id="rc" x1="0" y1="0" x2="0" y2="1"><stop offset="0" stop-color="#ff6a5a"/><stop offset="0.6" stop-color="#f04a3a"/><stop offset="1" stop-color="#8a2a20"/></linearGradient><linearGradient id="wc" x1="0" y1="0" x2="0" y2="1"><stop offset="0" stop-color="#d8d8d8"/><stop offset="0.45" stop-color="#ffffff"/><stop offset="1" stop-color="#909090"/></linearGradient><linearGradient id="wc2" x1="0" x2="1"><stop offset="0" stop-color="#a0a0a0"/><stop offset="0.5" stop-color="#ffffff"/><stop offset="1" stop-color="#a8a8a8"/></linearGradient></defs><path d="M2138 253.5L2166 253.5L2152 293Z" fill="url(#gc)"/><ellipse cx="2152" cy="253.5" rx="14" ry="1.5" fill="#3a9a3a"/><path d="M2095 298L2136 310L2095 322Z" fill="url(#wc)"/><ellipse cx="2096" cy="310" rx="2.5" ry="12" fill="#eaeaea"/><path d="M2207 298L2168 310L2207 321Z" fill="url(#rc)"/><ellipse cx="2207" cy="309.5" rx="2.5" ry="11.5" fill="#f25848"/><path d="M2152 327L2163 356L2141 356Z" fill="url(#wc2)"/><ellipse cx="2152" cy="356" rx="11" ry="3" fill="#e0e0e0"/><rect x="2139" y="302" width="27" height="25" fill="#f2f2f2"/><path d="M2141 295H2164L2166 302H2139Z" fill="#a8a8a8"/></svg>
<div class="t" style="left:2146px;top:227.38px;font-size:22px;line-height:22px;color:#ffffff;font-weight:bold;letter-spacing:0px;">y</div>
<div class="t" style="left:2213px;top:298.38px;font-size:22px;line-height:22px;color:#ffffff;font-weight:bold;letter-spacing:0px;">x</div>
<svg class="a" style="left:2211px;top:239px;" width="14" height="18" viewBox="0 0 14 18"><path d="M3 8V5a4 4 0 0 1 8 0" fill="none" stroke="#d0d0d0" stroke-width="1.5" stroke-opacity="0.6"/><rect x="1" y="8" width="12" height="9" fill="#d8d0cc" fill-opacity="0.55"/></svg>
<svg class="a" style="left:2102px;top:400px;" width="20" height="20" viewBox="0 0 20 20"><path d="M18 2L3 10L18 18" fill="none" stroke="#d8d8d8" stroke-width="2"/></svg>
<div class="t" style="left:2129px;top:399.68px;font-size:24px;line-height:24px;color:#d4d4d4;font-weight:normal;letter-spacing:0.3px;">Persp</div>
<div class="a" style="left:2049px;top:693px;width:209px;height:188px;background:rgba(0,0,0,0.8);border-radius:8px;"></div>
<div class="a" style="left:2059px;top:705px;width:32px;height:2.2px;background:#6e6e6e;border-radius:0px;"></div>
<div class="a" style="left:2059px;top:711.5px;width:32px;height:2.2px;background:#6e6e6e;border-radius:0px;"></div>
<div class="t" style="left:2102px;top:697.68px;font-size:24px;line-height:24px;color:#a8a8a8;font-weight:normal;letter-spacing:0.35px;">AI Navigation</div>
<svg class="a" style="left:2067.0px;top:734.5px;" width="15" height="18" viewBox="0 0 15 18"><path d="M0 0L15 9.0L0 18Z" fill="#6a6a6a"/></svg>
<div class="t" style="left:2094px;top:731.68px;font-size:24px;line-height:24px;color:#e2e2e2;font-weight:normal;letter-spacing:0.3px;">Surfaces</div>
<svg class="a" style="left:2067.0px;top:784.5px;" width="15" height="18" viewBox="0 0 15 18"><path d="M0 0L15 9.0L0 18Z" fill="#6a6a6a"/></svg>
<div class="t" style="left:2094px;top:781.68px;font-size:24px;line-height:24px;color:#e2e2e2;font-weight:normal;letter-spacing:0.3px;">Agents</div>
<svg class="a" style="left:2067.0px;top:834.5px;" width="15" height="18" viewBox="0 0 15 18"><path d="M0 0L15 9.0L0 18Z" fill="#6a6a6a"/></svg>
<div class="t" style="left:2094px;top:831.68px;font-size:24px;line-height:24px;color:#e2e2e2;font-weight:normal;letter-spacing:0.3px;">Obstacles</div>
<div class="a" style="left:0px;top:889px;width:2262px;height:505px;background:#383838;border-radius:0px;border-radius:8px 8px 0 0"></div>
<div class="a" style="left:0px;top:889px;width:2262px;height:37px;background:#282828;border-radius:0px;border-radius:8px 8px 0 0"></div>
<div class="a" style="left:2px;top:889px;width:158px;height:37px;background:#3c3c3c;border-radius:0px;border-radius:6px 6px 0 0"></div>
<svg class="a" style="left:14px;top:899px;" width="24" height="20" viewBox="0 0 24 20"><path d="M0 2a2 2 0 0 1 2-2h7l3 4h10a2 2 0 0 1 2 2v12a2 2 0 0 1-2 2H2a2 2 0 0 1-2-2Z" fill="#c8c8c8"/></svg>
<div class="t" style="left:47px;top:897.68px;font-size:24px;line-height:24px;color:#d2d2d2;font-weight:normal;letter-spacing:0.3px;">Project</div>
<svg class="a" style="left:180px;top:898px;" width="20" height="21" viewBox="0 0 20 21"><rect x="0" y="0" width="20" height="21" rx="2" fill="#c8c8c8"/><path d="M4 5h12M4 9h8M4 13h12M4 17h8" stroke="#282828" stroke-width="2"/></svg>
<div class="t" style="left:211px;top:897.68px;font-size:24px;line-height:24px;color:#d2d2d2;font-weight:normal;letter-spacing:0.3px;">Console</div>
<svg class="a" style="left:354px;top:898px;" width="24" height="22" viewBox="0 0 24 22"><rect x="1.2" y="1.2" width="21.6" height="19.6" fill="none" stroke="#c8c8c8" stroke-width="2.4"/><path d="M6 1v20M18 1v20M1 11h5M18 11h5" stroke="#c8c8c8" stroke-width="2.4"/><path d="M1 6h5M1 16h5M18 6h5M18 16h5" stroke="#c8c8c8" stroke-width="1.5"/></svg>
<div class="t" style="left:387px;top:897.68px;font-size:24px;line-height:24px;color:#d2d2d2;font-weight:normal;letter-spacing:0.3px;">Timeline</div>
<svg class="a" style="left:2194px;top:898px;" width="17" height="20" viewBox="0 0 17 20"><path d="M3.8 9V6.3a4.7 4.7 0 0 1 9.4 0V9" fill="none" stroke="#c4c4c4" stroke-width="2.6"/><rect x="1" y="8.5" width="15" height="11" rx="1.5" fill="#c4c4c4"/></svg>
<svg class="a" style="left:2233px;top:897px;" width="6" height="20" viewBox="0 0 6 20"><circle cx="3" cy="3" r="2.6" fill="#c4c4c4"/><circle cx="3" cy="10" r="2.6" fill="#c4c4c4"/><circle cx="3" cy="17" r="2.6" fill="#c4c4c4"/></svg>
<div class="a" style="left:0px;top:926px;width:2262px;height:42px;background:#3c3c3c;border-radius:0px;"></div>
<svg class="a" style="left:14px;top:935px;" width="24" height="24" viewBox="0 0 24 24"><path d="M12 0v24M0 12h24" stroke="#c4c4c4" stroke-width="3.2"/></svg>
<svg class="a" style="left:46.5px;top:943.0px;" width="15" height="9" viewBox="0 0 15 9"><path d="M0 0H15L7.5 9Z" fill="#c4c4c4"/></svg>
<div class="a" style="left:1331px;top:932px;width:634px;height:30px;background:#2a2a2a;border-radius:8px;border:1.5px solid #1f1f1f;border-top-color:#151515"></div>
<svg class="a" style="left:1340px;top:940px;" width="14" height="15" viewBox="0 0 14 15"><circle cx="5.5" cy="5.5" r="4" fill="none" stroke="#c4c4c4" stroke-width="2.2"/><path d="M8.5 8.5l4.5 5" stroke="#c4c4c4" stroke-width="2.6"/></svg>
<div class="a" style="left:1930px;top:934px;width:33px;height:26px;background:#303030;border-radius:0px;border-radius:0 6px 6px 0"></div>
<svg class="a" style="left:1934px;top:936px;" width="24" height="24" viewBox="0 0 24 24"><rect x="9" y="1.5" width="13.5" height="13.5" rx="1.5" fill="none" stroke="#c4c4c4" stroke-width="2"/><rect x="1.5" y="15" width="7.5" height="7.5" fill="none" stroke="#c4c4c4" stroke-width="2"/><path d="M9 15l9-9M12 6h6v6" fill="none" stroke="#c4c4c4" stroke-width="2"/></svg>
<div class="a" style="left:1971px;top:927px;width:1.5px;height:40px;background:#2c2c2c;border-radius:0px;"></div>
<div class="a" style="left:2023px;top:927px;width:1.5px;height:40px;background:#2c2c2c;border-radius:0px;"></div>
<div class="a" style="left:2075px;top:927px;width:1.5px;height:40px;background:#2c2c2c;border-radius:0px;"></div>
<div class="a" style="left:2127px;top:927px;width:1.5px;height:40px;background:#2c2c2c;border-radius:0px;"></div>
<div class="a" style="left:2179px;top:927px;width:1.5px;height:40px;background:#2c2c2c;border-radius:0px;"></div>
<svg class="a" style="left:1985px;top:933px;" width="26" height="28" viewBox="0 0 26 28"><rect x="5" y="0" width="9" height="9" fill="#c4c4c4"/><circle cx="7.5" cy="20" r="7.5" fill="#c4c4c4"/><path d="M17 8L25 21H11Z" fill="#c4c4c4"/></svg>
<svg class="a" style="left:2037px;top:936px;" width="22" height="22" viewBox="0 0 22 22"><path d="M12 1H21V10L10 21L1 12Z" fill="#c4c4c4"/><circle cx="16.5" cy="5.5" r="2" fill="#3c3c3c"/></svg>
<svg class="a" style="left:2087px;top:934px;" width="27" height="27" viewBox="0 0 27 27"><path d="M8 0.5H19L26.5 8V19L19 26.5H8L0.5 19V8Z" fill="#c4c4c4"/><rect x="11.5" y="5" width="4" height="11" rx="1.5" fill="#3c3c3c"/><circle cx="13.5" cy="21" r="2.3" fill="#3c3c3c"/></svg>
<svg class="a" style="left:2140px;top:935px;" width="26" height="25" viewBox="0 0 26 25"><path d="M13 0.5L16.3 9.2H25.5L18 14.8L20.8 24L13 18.4L5.2 24L8 14.8L0.5 9.2H9.7Z" fill="#8a8a8a"/></svg>
<svg class="a" style="left:2190px;top:937px;" width="30" height="22" viewBox="0 0 30 22"><path d="M2 11C6 4 10 2 15 2s9 2 13 9c-4 7-8 9-13 9S6 18 2 11Z" fill="none" stroke="#c4c4c4" stroke-width="2.2"/><circle cx="15" cy="11" r="4.5" fill="none" stroke="#c4c4c4" stroke-width="2.2"/><path d="M25 0L4 22" stroke="#c4c4c4" stroke-width="2.6"/></svg>
<div class="t" style="left:2222px;top:934.99px;font-size:26px;line-height:26px;color:#c4c4c4;font-weight:normal;letter-spacing:0px;">20</div>
<div class="a" style="left:0px;top:967px;width:2262px;height:2px;background:#262626;border-radius:0px;"></div>
<div class="a" style="left:0px;top:969px;width:388px;height:425px;background:#383838;border-radius:0px;"></div>
<div class="a" style="left:388px;top:969px;width:27px;height:425px;background:#383838;border-radius:0px;"></div>
<div class="a" style="left:392px;top:1001px;width:20px;height:166px;background:#5e5e5e;border-radius:10px;"></div>
<svg class="a" style="left:394.5px;top:980.5px;" width="15" height="9" viewBox="0 0 15 9"><path d="M0 9H15L7.5 0Z" fill="#c4c4c4"/></svg>
<svg class="a" style="left:394.5px;top:1373.5px;" width="15" height="9" viewBox="0 0 15 9"><path d="M0 0H15L7.5 9Z" fill="#c4c4c4"/></svg>
<div class="a" style="left:414px;top:969px;width:2px;height:425px;background:#242424;border-radius:0px;"></div>
<div class="a" style="left:0;top:969px;width:388px;height:425px;overflow:hidden">
<svg class="a" style="left:8.5px;top:8.0px;" width="17" height="15" viewBox="0 0 17 15"><path d="M0 0H17L8.5 15Z" fill="#707070"/></svg>
<svg class="a" style="left:36px;top:3.0px;" width="24" height="23" viewBox="0 0 24 23"><path d="M12 0.5L15 8.7H23.5L16.7 13.8L19.2 22.5L12 17.3L4.8 22.5L7.3 13.8L0.5 8.7H9Z" fill="#c4c4c4"/></svg>
<div class="t" style="left:70.5px;top:2.61px;font-size:23.5px;line-height:23.5px;color:#d2d2d2;font-weight:bold;letter-spacing:0.3px;">Favorites</div>
<svg class="a" style="left:63px;top:34.85000000000002px;" width="24" height="24" viewBox="0 0 24 24"><circle cx="9.5" cy="9.5" r="8" fill="none" stroke="#c8c8c8" stroke-width="2.2"/><path d="M15.5 15.5L22 22" stroke="#c8c8c8" stroke-width="3.2"/></svg>
<div class="t" style="left:97px;top:34.03px;font-size:24px;line-height:24px;color:#d2d2d2;font-weight:normal;letter-spacing:0.25px;">All Materials</div>
<svg class="a" style="left:63px;top:66.70000000000005px;" width="24" height="24" viewBox="0 0 24 24"><circle cx="9.5" cy="9.5" r="8" fill="none" stroke="#c8c8c8" stroke-width="2.2"/><path d="M15.5 15.5L22 22" stroke="#c8c8c8" stroke-width="3.2"/></svg>
<div class="t" style="left:97px;top:65.88px;font-size:24px;line-height:24px;color:#d2d2d2;font-weight:normal;letter-spacing:0.25px;">All Models</div>
<svg class="a" style="left:63px;top:98.54999999999995px;" width="24" height="24" viewBox="0 0 24 24"><circle cx="9.5" cy="9.5" r="8" fill="none" stroke="#c8c8c8" stroke-width="2.2"/><path d="M15.5 15.5L22 22" stroke="#c8c8c8" stroke-width="3.2"/></svg>
<div class="t" style="left:97px;top:97.73px;font-size:24px;line-height:24px;color:#d2d2d2;font-weight:normal;letter-spacing:0.25px;">All Prefabs</div>
<svg class="a" style="left:8.5px;top:167.25px;" width="17" height="15" viewBox="0 0 17 15"><path d="M0 0H17L8.5 15Z" fill="#707070"/></svg>
<svg class="a" style="left:36px;top:163.25px;" width="28" height="22" viewBox="0 0 28 22"><path d="M1.2 19.5V2.5a1.3 1.3 0 0 1 1.3-1.3h7l2.5 3.3h9.5a1.3 1.3 0 0 1 1.3 1.3v3" fill="none" stroke="#c8c8c8" stroke-width="2.2"/><path d="M6 9h20.5a1.3 1.3 0 0 1 1.2 1.7L25 19.5a1.5 1.5 0 0 1-1.4 1.3H2Z" fill="#c8c8c8"/></svg>
<div class="t" style="left:70.5px;top:161.86px;font-size:23.5px;line-height:23.5px;color:#d2d2d2;font-weight:bold;letter-spacing:0.3px;">Assets</div>
<svg class="a" style="left:64px;top:195.5999999999999px;" width="25" height="21" viewBox="0 0 25 21"><path d="M0 2a2 2 0 0 1 2-2h7l3 4h11a2 2 0 0 1 2 2v13a2 2 0 0 1-2 2H2a2 2 0 0 1-2-2Z" fill="#c8c8c8"/></svg>
<div class="t" style="left:97px;top:193.28px;font-size:24px;line-height:24px;color:#d2d2d2;font-weight:normal;letter-spacing:0.25px;">Animations</div>
<svg class="a" style="left:64px;top:227.45000000000005px;" width="25" height="21" viewBox="0 0 25 21"><path d="M0 2a2 2 0 0 1 2-2h7l3 4h11a2 2 0 0 1 2 2v13a2 2 0 0 1-2 2H2a2 2 0 0 1-2-2Z" fill="#c8c8c8"/></svg>
<div class="t" style="left:97px;top:225.13px;font-size:24px;line-height:24px;color:#d2d2d2;font-weight:normal;letter-spacing:0.25px;">Materials</div>
<svg class="a" style="left:64px;top:259.29999999999995px;" width="25" height="21" viewBox="0 0 25 21"><path d="M1.2 2.5a1.3 1.3 0 0 1 1.3-1.3h6.5l2.5 3.3h11a1.3 1.3 0 0 1 1.3 1.3v13.2a1.3 1.3 0 0 1-1.3 1.3H2.5a1.3 1.3 0 0 1-1.3-1.3Z" fill="none" stroke="#c8c8c8" stroke-width="2.2"/><path d="M1.5 7h22" stroke="#c8c8c8" stroke-width="2"/></svg>
<div class="t" style="left:97px;top:256.98px;font-size:24px;line-height:24px;color:#d2d2d2;font-weight:normal;letter-spacing:0.25px;">Samples</div>
<svg class="a" style="left:38.0px;top:293.1500000000001px;" width="15" height="17" viewBox="0 0 15 17"><path d="M0 0L15 8.5L0 17Z" fill="#6e6e6e"/></svg>
<svg class="a" style="left:64px;top:291.1500000000001px;" width="25" height="21" viewBox="0 0 25 21"><path d="M0 2a2 2 0 0 1 2-2h7l3 4h11a2 2 0 0 1 2 2v13a2 2 0 0 1-2 2H2a2 2 0 0 1-2-2Z" fill="#c8c8c8"/></svg>
<div class="t" style="left:97px;top:288.83px;font-size:24px;line-height:24px;color:#d2d2d2;font-weight:normal;letter-spacing:0.25px;">Scenes</div>
<div class="a" style="left:0px;top:317.0px;width:388px;height:32px;background:#4d4d4d;border-radius:0px;"></div>
<svg class="a" style="left:64px;top:323.0px;" width="25" height="21" viewBox="0 0 25 21"><path d="M0 2a2 2 0 0 1 2-2h7l3 4h11a2 2 0 0 1 2 2v13a2 2 0 0 1-2 2H2a2 2 0 0 1-2-2Z" fill="#c8c8c8"/></svg>
<div class="t" style="left:97px;top:320.68px;font-size:24px;line-height:24px;color:#d2d2d2;font-weight:normal;letter-spacing:0.25px;">Scripts</div>
<svg class="a" style="left:38.0px;top:356.8499999999999px;" width="15" height="17" viewBox="0 0 15 17"><path d="M0 0L15 8.5L0 17Z" fill="#6e6e6e"/></svg>
<svg class="a" style="left:64px;top:354.8499999999999px;" width="25" height="21" viewBox="0 0 25 21"><path d="M0 2a2 2 0 0 1 2-2h7l3 4h11a2 2 0 0 1 2 2v13a2 2 0 0 1-2 2H2a2 2 0 0 1-2-2Z" fill="#c8c8c8"/></svg>
<div class="t" style="left:97px;top:352.53px;font-size:24px;line-height:24px;color:#d2d2d2;font-weight:normal;letter-spacing:0.25px;">UI</div>
<svg class="a" style="left:8.5px;top:390.20000000000005px;" width="17" height="15" viewBox="0 0 17 15"><path d="M0 0H17L8.5 15Z" fill="#707070"/></svg>
<svg class="a" style="left:36px;top:386.20000000000005px;" width="28" height="22" viewBox="0 0 28 22"><path d="M1.2 19.5V2.5a1.3 1.3 0 0 1 1.3-1.3h7l2.5 3.3h9.5a1.3 1.3 0 0 1 1.3 1.3v3" fill="none" stroke="#c8c8c8" stroke-width="2.2"/><path d="M6 9h20.5a1.3 1.3 0 0 1 1.2 1.7L25 19.5a1.5 1.5 0 0 1-1.4 1.3H2Z" fill="#c8c8c8"/></svg>
<div class="t" style="left:70.5px;top:384.81px;font-size:23.5px;line-height:23.5px;color:#d2d2d2;font-weight:bold;letter-spacing:0.3px;">Packages</div>
<svg class="a" style="left:38.0px;top:420.54999999999995px;" width="15" height="17" viewBox="0 0 15 17"><path d="M0 0L15 8.5L0 17Z" fill="#6e6e6e"/></svg>
<svg class="a" style="left:64px;top:418.54999999999995px;" width="25" height="21" viewBox="0 0 25 21"><path d="M0 2a2 2 0 0 1 2-2h7l3 4h11a2 2 0 0 1 2 2v13a2 2 0 0 1-2 2H2a2 2 0 0 1-2-2Z" fill="#c8c8c8"/></svg>
<div class="t" style="left:97px;top:416.23px;font-size:24px;line-height:24px;color:#d2d2d2;font-weight:normal;letter-spacing:0.25px;">AI Navigation</div>
</div>
<div class="a" style="left:416px;top:969px;width:1846px;height:42px;background:#3e3e3e;border-radius:0px;"></div>
<div class="t" style="left:425px;top:976.18px;font-size:24px;line-height:24px;color:#c4c4c4;font-weight:normal;letter-spacing:0.3px;">Assets</div>
<svg class="a" style="left:512px;top:983px;" width="11" height="13" viewBox="0 0 11 13"><path d="M1.5 1L9.5 6.5L1.5 12" fill="none" stroke="#8a8a8a" stroke-width="2.4"/></svg>
<div class="t" style="left:535px;top:976.18px;font-size:24px;line-height:24px;color:#d8d8d8;font-weight:bold;letter-spacing:0.25px;">Scripts</div>
<div class="a" style="left:416px;top:1011px;width:1846px;height:341px;background:#333333;border-radius:0px;"></div>
<div class="a" style="left:416px;top:1352px;width:1846px;height:42px;background:#3e3e3e;border-radius:0px;"></div>
<div class="a" style="left:2120px;top:1371px;width:110px;height:3px;background:#5a5a5a;border-radius:1.5px;"></div>
<div class="a" style="left:2173.5px;top:1362.5px;width:20px;height:20px;background:#9c9c9c;border-radius:10px;"></div>
<svg class="a" style="left:462px;top:1039px;" width="96" height="112" viewBox="0 0 96 112"><path d="M10 0H73L96 24V102a10 10 0 0 1-10 10H10A10 10 0 0 1 0 102V10A10 10 0 0 1 10 0Z" fill="#efefef"/><path d="M39.2 24.2H47.7L37.8 92.6H28.9Z M56.5 24.2H65.4L55 92.6H46Z M22.2 40.3H73.9V48.3H22.2Z M18.5 64.2H70.3V72.7H18.5Z" fill="#266b2b"/></svg>
<div class="t" style="left:410px;top:1162px;width:200px;text-align:center;font-size:21px;line-height:24px;color:#d2d2d2;letter-spacing:0.3px">AnimationS<span style="letter-spacing:-1.2px">...</span></div>
<svg class="a" style="left:614px;top:1039px;" width="96" height="112" viewBox="0 0 96 112"><path d="M10 0H73L96 24V102a10 10 0 0 1-10 10H10A10 10 0 0 1 0 102V10A10 10 0 0 1 10 0Z" fill="#efefef"/><path d="M39.2 24.2H47.7L37.8 92.6H28.9Z M56.5 24.2H65.4L55 92.6H46Z M22.2 40.3H73.9V48.3H22.2Z M18.5 64.2H70.3V72.7H18.5Z" fill="#266b2b"/></svg>
<div class="t" style="left:562px;top:1162px;width:200px;text-align:center;font-size:21px;line-height:24px;color:#d2d2d2;letter-spacing:0.3px">Character</div>
<svg class="a" style="left:766px;top:1039px;" width="96" height="112" viewBox="0 0 96 112"><path d="M10 0H73L96 24V102a10 10 0 0 1-10 10H10A10 10 0 0 1 0 102V10A10 10 0 0 1 10 0Z" fill="#efefef"/><path d="M39.2 24.2H47.7L37.8 92.6H28.9Z M56.5 24.2H65.4L55 92.6H46Z M22.2 40.3H73.9V48.3H22.2Z M18.5 64.2H70.3V72.7H18.5Z" fill="#266b2b"/></svg>
<div class="t" style="left:714px;top:1162px;width:200px;text-align:center;font-size:21px;line-height:24px;color:#d2d2d2;letter-spacing:0.3px">CollisionHa<span style="letter-spacing:-1.2px">...</span></div>
<svg class="a" style="left:918px;top:1039px;" width="96" height="112" viewBox="0 0 96 112"><path d="M10 0H73L96 24V102a10 10 0 0 1-10 10H10A10 10 0 0 1 0 102V10A10 10 0 0 1 10 0Z" fill="#efefef"/><path d="M39.2 24.2H47.7L37.8 92.6H28.9Z M56.5 24.2H65.4L55 92.6H46Z M22.2 40.3H73.9V48.3H22.2Z M18.5 64.2H70.3V72.7H18.5Z" fill="#266b2b"/></svg>
<div class="t" style="left:866px;top:1162px;width:200px;text-align:center;font-size:21px;line-height:24px;color:#d2d2d2;letter-spacing:0.3px">EnemyMo<span style="letter-spacing:-1.2px">...</span></div>
<svg class="a" style="left:1070px;top:1039px;" width="96" height="112" viewBox="0 0 96 112"><path d="M10 0H73L96 24V102a10 10 0 0 1-10 10H10A10 10 0 0 1 0 102V10A10 10 0 0 1 10 0Z" fill="#efefef"/><path d="M39.2 24.2H47.7L37.8 92.6H28.9Z M56.5 24.2H65.4L55 92.6H46Z M22.2 40.3H73.9V48.3H22.2Z M18.5 64.2H70.3V72.7H18.5Z" fill="#266b2b"/></svg>
<div class="t" style="left:1018px;top:1162px;width:200px;text-align:center;font-size:21px;line-height:24px;color:#d2d2d2;letter-spacing:0.3px">Gyroscope</div>
<svg class="a" style="left:1222px;top:1039px;" width="96" height="112" viewBox="0 0 96 112"><path d="M10 0H73L96 24V102a10 10 0 0 1-10 10H10A10 10 0 0 1 0 102V10A10 10 0 0 1 10 0Z" fill="#efefef"/><path d="M39.2 24.2H47.7L37.8 92.6H28.9Z M56.5 24.2H65.4L55 92.6H46Z M22.2 40.3H73.9V48.3H22.2Z M18.5 64.2H70.3V72.7H18.5Z" fill="#266b2b"/></svg>
<div class="t" style="left:1170px;top:1162px;width:200px;text-align:center;font-size:21px;line-height:24px;color:#d2d2d2;letter-spacing:0.3px">LightContr<span style="letter-spacing:-1.2px">...</span></div>
<svg class="a" style="left:1374px;top:1039px;" width="96" height="112" viewBox="0 0 96 112"><path d="M10 0H73L96 24V102a10 10 0 0 1-10 10H10A10 10 0 0 1 0 102V10A10 10 0 0 1 10 0Z" fill="#efefef"/><path d="M39.2 24.2H47.7L37.8 92.6H28.9Z M56.5 24.2H65.4L55 92.6H46Z M22.2 40.3H73.9V48.3H22.2Z M18.5 64.2H70.3V72.7H18.5Z" fill="#266b2b"/></svg>
<div class="t" style="left:1322px;top:1162px;width:200px;text-align:center;font-size:21px;line-height:24px;color:#d2d2d2;letter-spacing:0.3px">MathPract<span style="letter-spacing:-1.2px">...</span></div>
<svg class="a" style="left:1526px;top:1039px;" width="96" height="112" viewBox="0 0 96 112"><path d="M10 0H73L96 24V102a10 10 0 0 1-10 10H10A10 10 0 0 1 0 102V10A10 10 0 0 1 10 0Z" fill="#efefef"/><path d="M39.2 24.2H47.7L37.8 92.6H28.9Z M56.5 24.2H65.4L55 92.6H46Z M22.2 40.3H73.9V48.3H22.2Z M18.5 64.2H70.3V72.7H18.5Z" fill="#266b2b"/></svg>
<div class="t" style="left:1474px;top:1162px;width:200px;text-align:center;font-size:21px;line-height:24px;color:#d2d2d2;letter-spacing:0.3px">PlayerCont<span style="letter-spacing:-1.2px">...</span></div>
<svg class="a" style="left:1678px;top:1039px;" width="96" height="112" viewBox="0 0 96 112"><path d="M10 0H73L96 24V102a10 10 0 0 1-10 10H10A10 10 0 0 1 0 102V10A10 10 0 0 1 10 0Z" fill="#efefef"/><path d="M39.2 24.2H47.7L37.8 92.6H28.9Z M56.5 24.2H65.4L55 92.6H46Z M22.2 40.3H73.9V48.3H22.2Z M18.5 64.2H70.3V72.7H18.5Z" fill="#266b2b"/></svg>
<div class="t" style="left:1626px;top:1162px;width:200px;text-align:center;font-size:21px;line-height:24px;color:#d2d2d2;letter-spacing:0.3px">Quaternion</div>
<svg class="a" style="left:1830px;top:1039px;" width="96" height="112" viewBox="0 0 96 112"><path d="M10 0H73L96 24V102a10 10 0 0 1-10 10H10A10 10 0 0 1 0 102V10A10 10 0 0 1 10 0Z" fill="#efefef"/><path d="M39.2 24.2H47.7L37.8 92.6H28.9Z M56.5 24.2H65.4L55 92.6H46Z M22.2 40.3H73.9V48.3H22.2Z M18.5 64.2H70.3V72.7H18.5Z" fill="#266b2b"/></svg>
<div class="t" style="left:1778px;top:1162px;width:200px;text-align:center;font-size:21px;line-height:24px;color:#d2d2d2;letter-spacing:0.3px">RecursiveS<span style="letter-spacing:-1.2px">...</span></div>
<svg class="a" style="left:1982px;top:1039px;" width="96" height="112" viewBox="0 0 96 112"><path d="M10 0H73L96 24V102a10 10 0 0 1-10 10H10A10 10 0 0 1 0 102V10A10 10 0 0 1 10 0Z" fill="#efefef"/><path d="M39.2 24.2H47.7L37.8 92.6H28.9Z M56.5 24.2H65.4L55 92.6H46Z M22.2 40.3H73.9V48.3H22.2Z M18.5 64.2H70.3V72.7H18.5Z" fill="#266b2b"/></svg>
<div class="t" style="left:1930px;top:1162px;width:200px;text-align:center;font-size:21px;line-height:24px;color:#d2d2d2;letter-spacing:0.3px">TranslateP<span style="letter-spacing:-1.2px">...</span></div>
<div class="a" style="left:2266px;top:116px;width:294px;height:1278px;background:#383838;border-radius:0px;border-radius:8px 0 0 0"></div>
<div class="a" style="left:2266px;top:116px;width:294px;height:37px;background:#282828;border-radius:0px;border-radius:8px 0 0 0"></div>
<div class="a" style="left:2266px;top:116px;width:186px;height:37px;background:#3c3c3c;border-radius:0px;border-radius:6px 6px 0 0"></div>
<svg class="a" style="left:2283px;top:123px;" width="22" height="22" viewBox="0 0 22 22"><circle cx="11" cy="11" r="10.5" fill="#c8c8c8"/><circle cx="11" cy="5.5" r="1.8" fill="#3c3c3c"/><rect x="9.3" y="8.5" width="3.4" height="9" fill="#3c3c3c"/></svg>
<div class="t" style="left:2315px;top:124.68px;font-size:24px;line-height:24px;color:#d2d2d2;font-weight:normal;letter-spacing:0.3px;">Inspector</div>
<svg class="a" style="left:2490px;top:124px;" width="17" height="20" viewBox="0 0 17 20"><path d="M4 3.2A4.6 4.6 0 0 1 12.8 5.5V9.5" fill="none" stroke="#c4c4c4" stroke-width="2.4"/><rect x="1.2" y="9.5" width="14" height="9.3" rx="1.5" fill="none" stroke="#c4c4c4" stroke-width="2.4"/></svg>
<svg class="a" style="left:2529px;top:124px;" width="6" height="20" viewBox="0 0 6 20"><circle cx="3" cy="3" r="2.6" fill="#c4c4c4"/><circle cx="3" cy="10" r="2.6" fill="#c4c4c4"/><circle cx="3" cy="17" r="2.6" fill="#c4c4c4"/></svg>
<div class="a" style="left:2351px;top:1398px;width:1.2px;height:38px;background:#2a2a2a;border-radius:0px;"></div>
<div class="a" style="left:2403px;top:1398px;width:1.2px;height:38px;background:#2a2a2a;border-radius:0px;"></div>
<div class="a" style="left:2455px;top:1398px;width:1.2px;height:38px;background:#2a2a2a;border-radius:0px;"></div>
<div class="a" style="left:2507px;top:1398px;width:1.2px;height:38px;background:#2a2a2a;border-radius:0px;"></div>
<svg class="a" style="left:2363px;top:1404px;" width="27" height="29" viewBox="0 0 27 29"><path d="M6 9C6 6 9 3.5 12.5 3.5S19 6 19.5 9L22.5 12.5C17.5 13 13 17 13 22.5C13 24.5 13.5 26 14.5 27.5H12C8 26.5 5 23 5 17Z" fill="#fbbd1f"/><path d="M7 1.5L10 5M18.5 1.5L15.5 5M2 5.5L6 11M24 5.5L20.5 11M0.8 19.5L5 16.5M3 27L3.5 22L6 20" fill="none" stroke="#fbbd1f" stroke-width="2.4" stroke-linecap="round"/><rect x="17.3" y="14.5" width="3.2" height="8" rx="1.5" fill="#fbbd1f"/><circle cx="18.9" cy="25.7" r="1.9" fill="#fbbd1f"/></svg>
<svg class="a" style="left:2416px;top:1403px;" width="28" height="29" viewBox="0 0 28 29"><ellipse cx="12.5" cy="5.5" rx="12" ry="5" fill="#c8c8c8"/><path d="M0.5 9c0 3 5 5 12 5s12-2 12-5v5c0 3-5 5-12 5S0.5 17 0.5 14Z" fill="#c8c8c8"/><path d="M0.5 18c0 3 5 5 12 5s12-2 12-5v5c0 3-5 5-12 5S0.5 26 0.5 23Z" fill="#c8c8c8"/><path d="M1 1L27 28" stroke="#1a1a1a" stroke-width="4"/><path d="M0 0L27 28" stroke="#c8c8c8" stroke-width="2.2"/></svg>
<svg class="a" style="left:2467px;top:1403px;" width="29" height="29" viewBox="0 0 29 29"><path d="M4 11a11 11 0 0 1 17-7.5M25 17a11 11 0 0 1-17 7.5" fill="none" stroke="#c8c8c8" stroke-width="2.2"/><path d="M21 0l3 7-7 0Z M8 28l-3-7h7Z" fill="#c8c8c8"/><circle cx="14.5" cy="12" r="5" fill="#c8c8c8"/><path d="M12 17h5v4h-5Z" fill="#c8c8c8"/><path d="M2 1L27 28" stroke="#c8c8c8" stroke-width="2.2"/></svg>
<svg class="a" style="left:2518px;top:1403px;" width="29" height="29" viewBox="0 0 29 29"><circle cx="14.5" cy="14.5" r="13.5" fill="none" stroke="#c8c8c8" stroke-width="2"/><path d="M8.5 14.5l4 4 8-8" fill="none" stroke="#c8c8c8" stroke-width="2.6"/></svg>
</div>
<div class="a" style="left:0;top:0;width:2560px;height:1438px;border-radius:15px;border:2px solid #5a5a5a;box-shadow:0 2px 0 rgba(0,0,0,0.5)"></div>
<div class="a" style="left:213px;top:1440px;width:2134px;height:99px;border-radius:26px;background:linear-gradient(90deg,#7154b8 0%,#7856c0 25%,#8a5ad8 45%,#a062e8 60%,#ad66ee 80%,#a964ea 100%);border:1.5px solid rgba(255,255,255,0.16)"></div>
<div class="a" style="left:227.0px;top:1456.0px;width:62px;height:62px;border-radius:14px;background:#e8eaee;overflow:hidden;"><svg width="62" height="62" viewBox="0 0 62 62" style="position:absolute;left:0;top:0"><defs><linearGradient id="fb" x1="0" y1="0" x2="0" y2="1"><stop offset="0" stop-color="#1ab4fa"/><stop offset="1" stop-color="#1a74ea"/></linearGradient></defs><rect width="62" height="62" fill="#e8eaee"/><path d="M0 0H37C33 10 30 20 29 31h5c-1 8 0 18 2 31H0Z" fill="url(#fb)"/><rect x="15" y="18" width="3" height="8" rx="1.5" fill="#1a2030"/><rect x="44" y="18" width="3" height="8" rx="1.5" fill="#1a2030"/><path d="M12 42c10 7 28 7 38 0" fill="none" stroke="#1a2030" stroke-width="2.2"/></svg></div>
<div class="a" style="left:309.0px;top:1456.0px;width:62px;height:62px;border-radius:14px;background:#d4cce6;overflow:hidden;"><svg width="62" height="62" viewBox="0 0 62 62" style="position:absolute;left:0;top:0"><rect x="10.0" y="11" width="11.5" height="11" rx="3" fill="#34c84a"/><rect x="25.5" y="11" width="11.5" height="11" rx="3" fill="#ffc12a"/><rect x="41.0" y="11" width="11.5" height="11" rx="3" fill="#f08a1a"/><rect x="10.0" y="26" width="11.5" height="11" rx="3" fill="#d82a22"/><rect x="25.5" y="26" width="11.5" height="11" rx="3" fill="#a0a4a4"/><rect x="41.0" y="26" width="11.5" height="11" rx="3" fill="#f05a4a"/><rect x="10.0" y="41" width="11.5" height="11" rx="3" fill="#9a48e0"/><rect x="25.5" y="41" width="11.5" height="11" rx="3" fill="#1aa0f0"/><rect x="41.0" y="41" width="11.5" height="11" rx="3" fill="#30c060"/></svg></div>
<div class="a" style="left:391.0px;top:1456.0px;width:62px;height:62px;border-radius:14px;background:#f4f4f4;overflow:hidden;"><svg width="62" height="62" viewBox="0 0 62 62" style="position:absolute;left:0;top:0"><rect width="62" height="62" fill="#f4f4f4"/><circle cx="31" cy="31" r="26.5" fill="#1e90f0"/><path d="M31 8.5V11" stroke="#fff" stroke-width="0.8" transform="rotate(0 31 31)"/><path d="M31 8.5V11" stroke="#fff" stroke-width="0.8" transform="rotate(10 31 31)"/><path d="M31 8.5V11" stroke="#fff" stroke-width="0.8" transform="rotate(20 31 31)"/><path d="M31 8.5V11" stroke="#fff" stroke-width="0.8" transform="rotate(30 31 31)"/><path d="M31 8.5V11" stroke="#fff" stroke-width="0.8" transform="rotate(40 31 31)"/><path d="M31 8.5V11" stroke="#fff" stroke-width="0.8" transform="rotate(50 31 31)"/><path d="M31 8.5V11" stroke="#fff" stroke-width="0.8" transform="rotate(60 31 31)"/><path d="M31 8.5V11" stroke="#fff" stroke-width="0.8" transform="rotate(70 31 31)"/><path d="M31 8.5V11" stroke="#fff" stroke-width="0.8" transform="rotate(80 31 31)"/><path d="M31 8.5V11" stroke="#fff" stroke-width="0.8" transform="rotate(90 31 31)"/><path d="M31 8.5V11" stroke="#fff" stroke-width="0.8" transform="rotate(100 31 31)"/><path d="M31 8.5V11" stroke="#fff" stroke-width="0.8" transform="rotate(110 31 31)"/><path d="M31 8.5V11" stroke="#fff" stroke-width="0.8" transform="rotate(120 31 31)"/><path d="M31 8.5V11" stroke="#fff" stroke-width="0.8" transform="rotate(130 31 31)"/><path d="M31 8.5V11" stroke="#fff" stroke-width="0.8" transform="rotate(140 31 31)"/><path d="M31 8.5V11" stroke="#fff" stroke-width="0.8" transform="rotate(150 31 31)"/><path d="M31 8.5V11" stroke="#fff" stroke-width="0.8" transform="rotate(160 31 31)"/><path d="M31 8.5V11" stroke="#fff" stroke-width="0.8" transform="rotate(170 31 31)"/><path d="M31 8.5V11" stroke="#fff" stroke-width="0.8" transform="rotate(180 31 31)"/><path d="M31 8.5V11" stroke="#fff" stroke-width="0.8" transform="rotate(190 31 31)"/><path d="M31 8.5V11" stroke="#fff" stroke-width="0.8" transform="rotate(200 31 31)"/><path d="M31 8.5V11" stroke="#fff" stroke-width="0.8" transform="rotate(210 31 31)"/><path d="M31 8.5V11" stroke="#fff" stroke-width="0.8" transform="rotate(220 31 31)"/><path d="M31 8.5V11" stroke="#fff" stroke-width="0.8" transform="rotate(230 31 31)"/><path d="M31 8.5V11" stroke="#fff" stroke-width="0.8" transform="rotate(240 31 31)"/><path d="M31 8.5V11" stroke="#fff" stroke-width="0.8" transform="rotate(250 31 31)"/><path d="M31 8.5V11" stroke="#fff" stroke-width="0.8" transform="rotate(260 31 31)"/><path d="M31 8.5V11" stroke="#fff" stroke-width="0.8" transform="rotate(270 31 31)"/><path d="M31 8.5V11" stroke="#fff" stroke-width="0.8" transform="rotate(280 31 31)"/><path d="M31 8.5V11" stroke="#fff" stroke-width="0.8" transform="rotate(290 31 31)"/><path d="M31 8.5V11" stroke="#fff" stroke-width="0.8" transform="rotate(300 31 31)"/><path d="M31 8.5V11" stroke="#fff" stroke-width="0.8" transform="rotate(310 31 31)"/><path d="M31 8.5V11" stroke="#fff" stroke-width="0.8" transform="rotate(320 31 31)"/><path d="M31 8.5V11" stroke="#fff" stroke-width="0.8" transform="rotate(330 31 31)"/><path d="M31 8.5V11" stroke="#fff" stroke-width="0.8" transform="rotate(340 31 31)"/><path d="M31 8.5V11" stroke="#fff" stroke-width="0.8" transform="rotate(350 31 31)"/><path d="M49 13L34.5 34.5L13 49L27.5 27.5Z" fill="#f2f2f2"/><path d="M49 13L34.5 34.5L27.5 27.5Z" fill="#f03a30"/></svg></div>
<div class="a" style="left:473.0px;top:1456.0px;width:62px;height:62px;border-radius:14px;background:#34c759;overflow:hidden;"><svg width="62" height="62" viewBox="0 0 62 62" style="position:absolute;left:0;top:0"><defs><linearGradient id="mg" x1="0" y1="0" x2="0" y2="1"><stop offset="0" stop-color="#5ae86a"/><stop offset="1" stop-color="#22c030"/></linearGradient></defs><rect width="62" height="62" fill="url(#mg)"/><ellipse cx="31" cy="29" rx="22" ry="17" fill="#f4f4f4"/><path d="M15 40l-4 10 12-6Z" fill="#f4f4f4"/></svg></div>
<div class="a" style="left:508.0px;top:1450px;width:36px;height:28px;border-radius:14px;background:#f0443a;color:#fff;font-size:19px;line-height:28px;text-align:center">398</div>
<div class="a" style="left:555.0px;top:1456.0px;width:62px;height:62px;border-radius:14px;background:#6cd46a;overflow:hidden;"><svg width="62" height="62" viewBox="0 0 62 62" style="position:absolute;left:0;top:0"><rect width="62" height="62" fill="#6cd46a"/><path d="M0 0H30V62H0Z" fill="#f2f2f2"/><path d="M0 0H14L0 16Z" fill="#7ad870"/><path d="M0 44L18 38V62H0Z" fill="#f0a8c8"/><path d="M34 46L48 40L62 62H40Z" fill="#f8c030"/><path d="M15 0H22V62H15Z" fill="#2a7af0"/><path d="M40 0c6 4 10 10 22 12V0Z" fill="#e8e8e8"/><path d="M22 20L62 50V62L22 30Z" fill="#f2f2f2"/><circle cx="22" cy="38" r="12" fill="#fff"/><circle cx="22" cy="38" r="10" fill="#2a7af0"/><path d="M22 30l6 13-6-3-6 3Z" fill="#fff"/></svg></div>
<div class="a" style="left:637.0px;top:1456.0px;width:62px;height:62px;border-radius:14px;background:#34c759;overflow:hidden;"><svg width="62" height="62" viewBox="0 0 62 62" style="position:absolute;left:0;top:0"><defs><linearGradient id="ftg" x1="0" y1="0" x2="0" y2="1"><stop offset="0" stop-color="#5ae86a"/><stop offset="1" stop-color="#22c030"/></linearGradient></defs><rect width="62" height="62" fill="url(#ftg)"/><rect x="10" y="20" width="30" height="22" rx="6" fill="#f0f0f0"/><path d="M42 29l10-7v18l-10-7Z" fill="#e8e8e8"/></svg></div>
<div class="a" style="left:680.0px;top:1450px;width:28px;height:28px;border-radius:14px;background:#f0443a;color:#fff;font-size:19px;line-height:28px;text-align:center">1</div>
<div class="a" style="left:720.0px;top:1456.0px;width:62px;height:62px;border-radius:14px;background:#ffffff;overflow:hidden;"><svg width="62" height="62" viewBox="0 0 62 62" style="position:absolute;left:0;top:0"><ellipse cx="31" cy="17.5" rx="7.5" ry="12.5" fill="#f8c020" opacity="0.88" transform="rotate(0 31 31)"/><ellipse cx="31" cy="17.5" rx="7.5" ry="12.5" fill="#f88a20" opacity="0.88" transform="rotate(45 31 31)"/><ellipse cx="31" cy="17.5" rx="7.5" ry="12.5" fill="#f04a40" opacity="0.88" transform="rotate(90 31 31)"/><ellipse cx="31" cy="17.5" rx="7.5" ry="12.5" fill="#c04aa0" opacity="0.88" transform="rotate(135 31 31)"/><ellipse cx="31" cy="17.5" rx="7.5" ry="12.5" fill="#8a5ae0" opacity="0.88" transform="rotate(180 31 31)"/><ellipse cx="31" cy="17.5" rx="7.5" ry="12.5" fill="#3a9af0" opacity="0.88" transform="rotate(225 31 31)"/><ellipse cx="31" cy="17.5" rx="7.5" ry="12.5" fill="#40c060" opacity="0.88" transform="rotate(270 31 31)"/><ellipse cx="31" cy="17.5" rx="7.5" ry="12.5" fill="#a0d040" opacity="0.88" transform="rotate(315 31 31)"/></svg></div>
<div class="a" style="left:802.0px;top:1456.0px;width:62px;height:62px;border-radius:14px;background:#f6f6f6;overflow:hidden;"><svg width="62" height="62" viewBox="0 0 62 62" style="position:absolute;left:0;top:0"><rect width="62" height="20" fill="#f0473c"/><text x="31" y="15.5" font-family="Liberation Sans" font-size="13" font-weight="bold" fill="#fff" text-anchor="middle">MAY</text><text x="31" y="55" font-family="Liberation Sans" font-size="37" fill="#222" text-anchor="middle">7</text></svg></div>
<div class="a" style="left:884.0px;top:1456.0px;width:62px;height:62px;border-radius:14px;background:#b08040;overflow:hidden;"><svg width="62" height="62" viewBox="0 0 62 62" style="position:absolute;left:0;top:0"><rect width="62" height="62" fill="#b08040"/><rect x="56" y="12" width="6" height="10" fill="#c0c0c0"/><rect x="56" y="24" width="6" height="10" fill="#3a9af0"/><rect x="56" y="36" width="6" height="10" fill="#f0a020"/><rect x="56" y="48" width="6" height="8" fill="#40c060"/><circle cx="28" cy="31" r="20" fill="none" stroke="#9a6a30" stroke-width="2"/><circle cx="28" cy="25" r="6.5" fill="#9a6a30"/><path d="M15 45c4-9 22-9 26 0" fill="#9a6a30"/></svg></div>
<div class="a" style="left:966.0px;top:1456.0px;width:62px;height:62px;border-radius:14px;background:#f8f8f8;overflow:hidden;"><svg width="62" height="62" viewBox="0 0 62 62" style="position:absolute;left:0;top:0"><circle cx="13" cy="16" r="4.5" fill="none" stroke="#2a7af0" stroke-width="2.4"/><circle cx="13" cy="16" r="2.5" fill="#2a7af0"/><circle cx="13" cy="31" r="4.5" fill="none" stroke="#f04438" stroke-width="2.4"/><circle cx="13" cy="31" r="2.5" fill="#f04438"/><circle cx="13" cy="46" r="4.5" fill="none" stroke="#f0a030" stroke-width="2.4"/><circle cx="13" cy="46" r="2.5" fill="#f0a030"/><path d="M24 16h28M24 31h28M24 46h28" stroke="#c8c8c8" stroke-width="1.4"/></svg></div>
<div class="a" style="left:1048.0px;top:1456.0px;width:62px;height:62px;border-radius:14px;background:#6c6c6c;overflow:hidden;"><svg width="62" height="62" viewBox="0 0 62 62" style="position:absolute;left:0;top:0"><rect width="62" height="15" fill="#6a5418"/><rect y="15" width="62" height="47" fill="#6c6c6c"/><path d="M0 15h62" stroke="#8a8a80" stroke-width="1.5" stroke-dasharray="1 1.5"/><path d="M0 28h62M0 41h62M0 54h62" stroke="#5a5a5a" stroke-width="1"/></svg></div>
<div class="a" style="left:1130.0px;top:1456.0px;width:62px;height:62px;border-radius:14px;background:#ffffff;overflow:hidden;"><svg width="62" height="62" viewBox="0 0 62 62" style="position:absolute;left:0;top:0"><rect x="22" y="8" width="34" height="34" rx="5" fill="#3ac8f0"/><circle cx="24" cy="40" r="15" fill="#f05a40"/><path d="M22 32h18v10H22Z" fill="#6ab0f0" opacity="0.7"/><path d="M12 40c6-14 10-16 13-8s6 6 10-2 8-8 12-4 6 2 10-2" fill="none" stroke="#0a3a70" stroke-width="4" stroke-linecap="round"/></svg></div>
<div class="a" style="left:1212.0px;top:1456.0px;width:62px;height:62px;border-radius:14px;background:#141414;overflow:hidden;"><svg width="62" height="62" viewBox="0 0 62 62" style="position:absolute;left:0;top:0"><path d="M20 27c-2-.5-4 .5-5 .5s-3-1-5-1c-3 0-6 3-6 8 0 6 4 13 7 13 1.5 0 2.5-1 4-1s2.5 1 4 1c3 0 5.5-5 6-7-3-1.5-4-4-4-6.5 0-3 1.5-4.5 3-5.5-1.5-2-3.5-2.5-4-1.5ZM19.5 23c1.5-2 1.5-4 1.5-5-2 .5-4 2-4.5 4-.5 1 0 2 0 2 1.5 0 2.5-.5 3-1Z" fill="#fff" transform="translate(4 -2)"/><text x="44" y="44" font-family="Liberation Sans" font-size="26" fill="#fff" text-anchor="middle">tv</text></svg></div>
<div class="a" style="left:1294.0px;top:1456.0px;width:62px;height:62px;border-radius:14px;background:#1a8cf0;overflow:hidden;"><svg width="62" height="62" viewBox="0 0 62 62" style="position:absolute;left:0;top:0"><defs><linearGradient id="kg" x1="0" y1="0" x2="0" y2="1"><stop offset="0" stop-color="#28b4fa"/><stop offset="1" stop-color="#1a78f0"/></linearGradient></defs><rect width="62" height="62" fill="url(#kg)"/><path d="M14 12h34l-3 16H17Z" fill="#f4f4f4"/><rect x="13" y="27" width="36" height="3" fill="#d8d8d8"/><circle cx="31" cy="19" r="5" fill="#40b050"/><path d="M31 19V14a5 5 0 0 1 5 5Z" fill="#f04a40"/><path d="M31 19l4.5 2.5A5 5 0 0 1 27 22Z" fill="#3a90f0"/><rect x="30" y="30" width="2.5" height="20" fill="#e8e8e8"/><rect x="21" y="49" width="20" height="3" rx="1" fill="#e8e8e8"/></svg></div>
<div class="a" style="left:1376.0px;top:1456.0px;width:62px;height:62px;border-radius:14px;background:#ffffff;overflow:hidden;"><svg width="62" height="62" viewBox="0 0 62 62" style="position:absolute;left:0;top:0"><path d="M0 0V62M0 0H62" stroke="#e0e0e0" stroke-width="0.6"/><path d="M5 0V62M0 5H62" stroke="#e0e0e0" stroke-width="0.6"/><path d="M10 0V62M0 10H62" stroke="#e0e0e0" stroke-width="0.6"/><path d="M15 0V62M0 15H62" stroke="#e0e0e0" stroke-width="0.6"/><path d="M20 0V62M0 20H62" stroke="#e0e0e0" stroke-width="0.6"/><path d="M25 0V62M0 25H62" stroke="#e0e0e0" stroke-width="0.6"/><path d="M30 0V62M0 30H62" stroke="#e0e0e0" stroke-width="0.6"/><path d="M35 0V62M0 35H62" stroke="#e0e0e0" stroke-width="0.6"/><path d="M40 0V62M0 40H62" stroke="#e0e0e0" stroke-width="0.6"/><path d="M45 0V62M0 45H62" stroke="#e0e0e0" stroke-width="0.6"/><path d="M50 0V62M0 50H62" stroke="#e0e0e0" stroke-width="0.6"/><path d="M55 0V62M0 55H62" stroke="#e0e0e0" stroke-width="0.6"/><path d="M60 0V62M0 60H62" stroke="#e0e0e0" stroke-width="0.6"/><rect x="11" y="33" width="8" height="20" fill="#e8302a"/><rect x="22" y="23" width="8" height="30" fill="#f0a020"/><rect x="33" y="10" width="8" height="43" fill="#30c040"/><rect x="44" y="17" width="8" height="36" fill="#2a90f0"/></svg></div>
<div class="a" style="left:1458.0px;top:1456.0px;width:62px;height:62px;border-radius:14px;background:#1e90f4;overflow:hidden;"><svg width="62" height="62" viewBox="0 0 62 62" style="position:absolute;left:0;top:0"><defs><linearGradient id="ag" x1="0" y1="0" x2="0" y2="1"><stop offset="0" stop-color="#20b0f8"/><stop offset="1" stop-color="#1a78ec"/></linearGradient></defs><rect width="62" height="62" fill="url(#ag)"/><path d="M26 13l18 32M38 13L19 46M13 38h36" stroke="#fff" stroke-width="4.5" stroke-linecap="round"/></svg></div>
<div class="a" style="left:1540.0px;top:1456.0px;width:62px;height:62px;border-radius:14px;background:#a8a8ac;overflow:hidden;"><svg width="62" height="62" viewBox="0 0 62 62" style="position:absolute;left:0;top:0"><defs><linearGradient id="sg" x1="0" y1="0" x2="0" y2="1"><stop offset="0" stop-color="#c8c8cc"/><stop offset="1" stop-color="#8a8a8e"/></linearGradient></defs><rect width="62" height="62" fill="url(#sg)"/><circle cx="31" cy="31" r="25" fill="#4a4a4e"/><rect x="29.5" y="4" width="3" height="5" fill="#5a5a5e" transform="rotate(0 31 31)"/><rect x="29.5" y="4" width="3" height="5" fill="#5a5a5e" transform="rotate(10 31 31)"/><rect x="29.5" y="4" width="3" height="5" fill="#5a5a5e" transform="rotate(20 31 31)"/><rect x="29.5" y="4" width="3" height="5" fill="#5a5a5e" transform="rotate(30 31 31)"/><rect x="29.5" y="4" width="3" height="5" fill="#5a5a5e" transform="rotate(40 31 31)"/><rect x="29.5" y="4" width="3" height="5" fill="#5a5a5e" transform="rotate(50 31 31)"/><rect x="29.5" y="4" width="3" height="5" fill="#5a5a5e" transform="rotate(60 31 31)"/><rect x="29.5" y="4" width="3" height="5" fill="#5a5a5e" transform="rotate(70 31 31)"/><rect x="29.5" y="4" width="3" height="5" fill="#5a5a5e" transform="rotate(80 31 31)"/><rect x="29.5" y="4" width="3" height="5" fill="#5a5a5e" transform="rotate(90 31 31)"/><rect x="29.5" y="4" width="3" height="5" fill="#5a5a5e" transform="rotate(100 31 31)"/><rect x="29.5" y="4" width="3" height="5" fill="#5a5a5e" transform="rotate(110 31 31)"/><rect x="29.5" y="4" width="3" height="5" fill="#5a5a5e" transform="rotate(120 31 31)"/><rect x="29.5" y="4" width="3" height="5" fill="#5a5a5e" transform="rotate(130 31 31)"/><rect x="29.5" y="4" width="3" height="5" fill="#5a5a5e" transform="rotate(140 31 31)"/><rect x="29.5" y="4" width="3" height="5" fill="#5a5a5e" transform="rotate(150 31 31)"/><rect x="29.5" y="4" width="3" height="5" fill="#5a5a5e" transform="rotate(160 31 31)"/><rect x="29.5" y="4" width="3" height="5" fill="#5a5a5e" transform="rotate(170 31 31)"/><rect x="29.5" y="4" width="3" height="5" fill="#5a5a5e" transform="rotate(180 31 31)"/><rect x="29.5" y="4" width="3" height="5" fill="#5a5a5e" transform="rotate(190 31 31)"/><rect x="29.5" y="4" width="3" height="5" fill="#5a5a5e" transform="rotate(200 31 31)"/><rect x="29.5" y="4" width="3" height="5" fill="#5a5a5e" transform="rotate(210 31 31)"/><rect x="29.5" y="4" width="3" height="5" fill="#5a5a5e" transform="rotate(220 31 31)"/><rect x="29.5" y="4" width="3" height="5" fill="#5a5a5e" transform="rotate(230 31 31)"/><rect x="29.5" y="4" width="3" height="5" fill="#5a5a5e" transform="rotate(240 31 31)"/><rect x="29.5" y="4" width="3" height="5" fill="#5a5a5e" transform="rotate(250 31 31)"/><rect x="29.5" y="4" width="3" height="5" fill="#5a5a5e" transform="rotate(260 31 31)"/><rect x="29.5" y="4" width="3" height="5" fill="#5a5a5e" transform="rotate(270 31 31)"/><rect x="29.5" y="4" width="3" height="5" fill="#5a5a5e" transform="rotate(280 31 31)"/><rect x="29.5" y="4" width="3" height="5" fill="#5a5a5e" transform="rotate(290 31 31)"/><rect x="29.5" y="4" width="3" height="5" fill="#5a5a5e" transform="rotate(300 31 31)"/><rect x="29.5" y="4" width="3" height="5" fill="#5a5a5e" transform="rotate(310 31 31)"/><rect x="29.5" y="4" width="3" height="5" fill="#5a5a5e" transform="rotate(320 31 31)"/><rect x="29.5" y="4" width="3" height="5" fill="#5a5a5e" transform="rotate(330 31 31)"/><rect x="29.5" y="4" width="3" height="5" fill="#5a5a5e" transform="rotate(340 31 31)"/><rect x="29.5" y="4" width="3" height="5" fill="#5a5a5e" transform="rotate(350 31 31)"/><circle cx="31" cy="31" r="21" fill="#8e8e92"/><circle cx="31" cy="31" r="15" fill="#5e5e62"/><circle cx="31" cy="31" r="12" fill="#8a8a8e"/><path d="M31 31V19M31 31L20.6 37M31 31L41.4 37" stroke="#4a4a4e" stroke-width="3.2"/><circle cx="31" cy="31" r="3" fill="#bdbdc0"/></svg></div>
<div class="a" style="left:1582.0px;top:1450px;width:28px;height:28px;border-radius:14px;background:#f0443a;color:#fff;font-size:19px;line-height:28px;text-align:center">2</div>
<div class="a" style="left:1618px;top:1451px;width:70px;height:68px;background:linear-gradient(135deg,#2a2a2a,#050505)"></div>
<svg class="a" style="left:1630px;top:1464px;" width="42" height="42" viewBox="0 0 42 42"><path d="M4 21L28 7L35 11V31L28 35Z" fill="none" stroke="#fff" stroke-width="4" stroke-linejoin="miter"/><path d="M12 21H27L35 11M27 21L35 31" fill="none" stroke="#fff" stroke-width="3.5"/></svg>
<div class="a" style="left:1704.0px;top:1456.0px;width:62px;height:62px;border-radius:14px;background:#f8f8f8;overflow:hidden;"><svg width="62" height="62" viewBox="0 0 62 62" style="position:absolute;left:0;top:0"><path d="M43 8L20 29 10 21 6 23v16l4 2 10-8 23 21 9-4V12Z" fill="#1a6ad0"/><path d="M43 19V43L27 31Z" fill="#fff"/><path d="M43 8l9 4v38l-9 4Z" fill="#2a9af0"/></svg></div>
<div class="a" style="left:1786.0px;top:1456.0px;width:62px;height:62px;border-radius:14px;background:#222222;overflow:hidden;"><svg width="62" height="62" viewBox="0 0 62 62" style="position:absolute;left:0;top:0"><rect x="1.5" y="1.5" width="59" height="59" rx="12" fill="#151515" stroke="#8a8a8a" stroke-width="3"/><rect x="5" y="5" width="52" height="52" rx="9" fill="#202020"/><text x="9" y="26" font-family="Liberation Mono" font-size="17" font-weight="bold" fill="#30c030">$</text><rect x="21" y="12" width="6" height="15" fill="#2a3a2a"/></svg></div>
<div class="a" style="left:1876px;top:1454px;width:2px;height:71px;background:#5a28a8;border-radius:0px;"></div>
<div class="a" style="left:1906.0px;top:1456.0px;width:62px;height:62px;border-radius:14px;background:#f8f8f8;overflow:hidden;"><svg width="62" height="62" viewBox="0 0 62 62" style="position:absolute;left:0;top:0"><circle cx="31" cy="31" r="26" fill="#f8c020"/><path d="M31 5A26 26 0 0 1 53.5 18H31A13 13 0 0 0 19.7 24.5L8.5 18A26 26 0 0 1 31 5Z" fill="#ea4335"/><path d="M8.5 18L19.7 37.5A13 13 0 0 0 31 44L19.8 57A26 26 0 0 1 8.5 18Z" fill="#34a853"/><circle cx="31" cy="31" r="12.5" fill="#fff"/><circle cx="31" cy="31" r="9.5" fill="#2a80f0"/></svg></div>
<div class="a" style="left:1988.0px;top:1456.0px;width:62px;height:62px;border-radius:14px;background:#f8f8f8;overflow:hidden;"><svg width="62" height="62" viewBox="0 0 62 62" style="position:absolute;left:0;top:0"><rect x="20" y="10" width="30" height="42" rx="2" fill="#1a8ae8"/><rect x="34" y="10" width="16" height="18" fill="#30c0f0"/><rect x="20" y="28" width="32" height="24" fill="#1a9af0"/><path d="M20 28l16 12 16-12" fill="none" stroke="#1070d0" stroke-width="2"/><rect x="6" y="19" width="24" height="24" rx="3" fill="#0a64c8"/><text x="18" y="38" font-family="Liberation Sans" font-size="17" font-weight="bold" fill="#fff" text-anchor="middle">O</text></svg></div>
<svg class="a" style="left:2068px;top:1450px;" width="64" height="74" viewBox="0 0 64 74"><path d="M32 1L63 19L32 37L1 19Z" fill="#f4f4f4"/><path d="M1 19L32 37V73L1 55Z" fill="#d0d0d0"/><path d="M63 19L32 37V73L63 55Z" fill="#a8a8a8"/><path d="M32 14L51 25L32 36L13 25Z" fill="#6a6a6a"/><path d="M13 25L32 36V59L13 48Z" fill="#5a5a5a"/><path d="M51 25L32 36V59L51 48Z" fill="#151515"/><path d="M32 20L42 25.5L32 31L22 25.5Z" fill="#ffffff"/><path d="M18 32L27 37V50L18 45Z" fill="#cfcfcf"/><path d="M46 32L37 37V50L46 45Z" fill="#9a9a9a"/><path d="M31 1V14H33V1Z" fill="#6a6a6a"/></svg>
<svg class="a" style="left:2151px;top:1450px;" width="64" height="74" viewBox="0 0 64 74"><path d="M32 1L63 19L32 37L1 19Z" fill="#707070"/><path d="M1 19L32 37V73L1 55Z" fill="#5a5a5a"/><path d="M63 19L32 37V73L63 55Z" fill="#101010"/><path d="M32 14L51 25L32 36L13 25Z" fill="#e8e8e8"/><path d="M13 25L32 36V59L13 48Z" fill="#f0f0f0"/><path d="M51 25L32 36V59L51 48Z" fill="#d0d0d0"/><path d="M32 20L42 25.5L32 31L22 25.5Z" fill="#6a6a6a"/><path d="M18 32L27 37V50L18 45Z" fill="#555555"/><path d="M46 32L37 37V50L46 45Z" fill="#111111"/><path d="M31 1V14H33V1Z" fill="#e8e8e8"/></svg>
<div class="a" style="left:2242px;top:1454px;width:2px;height:71px;background:#5a28a8;border-radius:0px;"></div>
<svg class="a" style="left:2272px;top:1449px;" width="58" height="74" viewBox="0 0 58 74"><defs><linearGradient id="tg" x1="0" x2="1"><stop offset="0" stop-color="#c8ccd2"/><stop offset="0.5" stop-color="#eef0f2"/><stop offset="1" stop-color="#c0c4ca"/></linearGradient></defs><path d="M3 12H55L49 69a4 4 0 0 1-4 4H13a4 4 0 0 1-4-4Z" fill="url(#tg)"/><ellipse cx="29" cy="12" rx="26" ry="4" fill="#e8eaee"/><path d="M8 11c4-7 9-9 14-6 3-5 8-5 11-1 5-3 10-2 14 2 3 0 6 2 8 5" fill="#8a9098"/><path d="M14 6l6 6M34 4l-4 8M44 7l4 5" stroke="#f0f0f0" stroke-width="3"/></svg>
<div class="a" style="left:254px;top:1528px;width:8px;height:8px;background:#2a1470;border-radius:4px;"></div>
<div class="a" style="left:500px;top:1528px;width:8px;height:8px;background:#2a1470;border-radius:4px;"></div>
<div class="a" style="left:1320px;top:1528px;width:8px;height:8px;background:#2a1470;border-radius:4px;"></div>
<div class="a" style="left:1933px;top:1528px;width:8px;height:8px;background:#2a1470;border-radius:4px;"></div>
<div class="a" style="left:2015px;top:1528px;width:8px;height:8px;background:#2a1470;border-radius:4px;"></div>
<div class="a" style="left:2096px;top:1528px;width:8px;height:8px;background:#2a1470;border-radius:4px;"></div>
<div class="a" style="left:2179px;top:1528px;width:8px;height:8px;background:#2a1470;border-radius:4px;"></div></body></html>
